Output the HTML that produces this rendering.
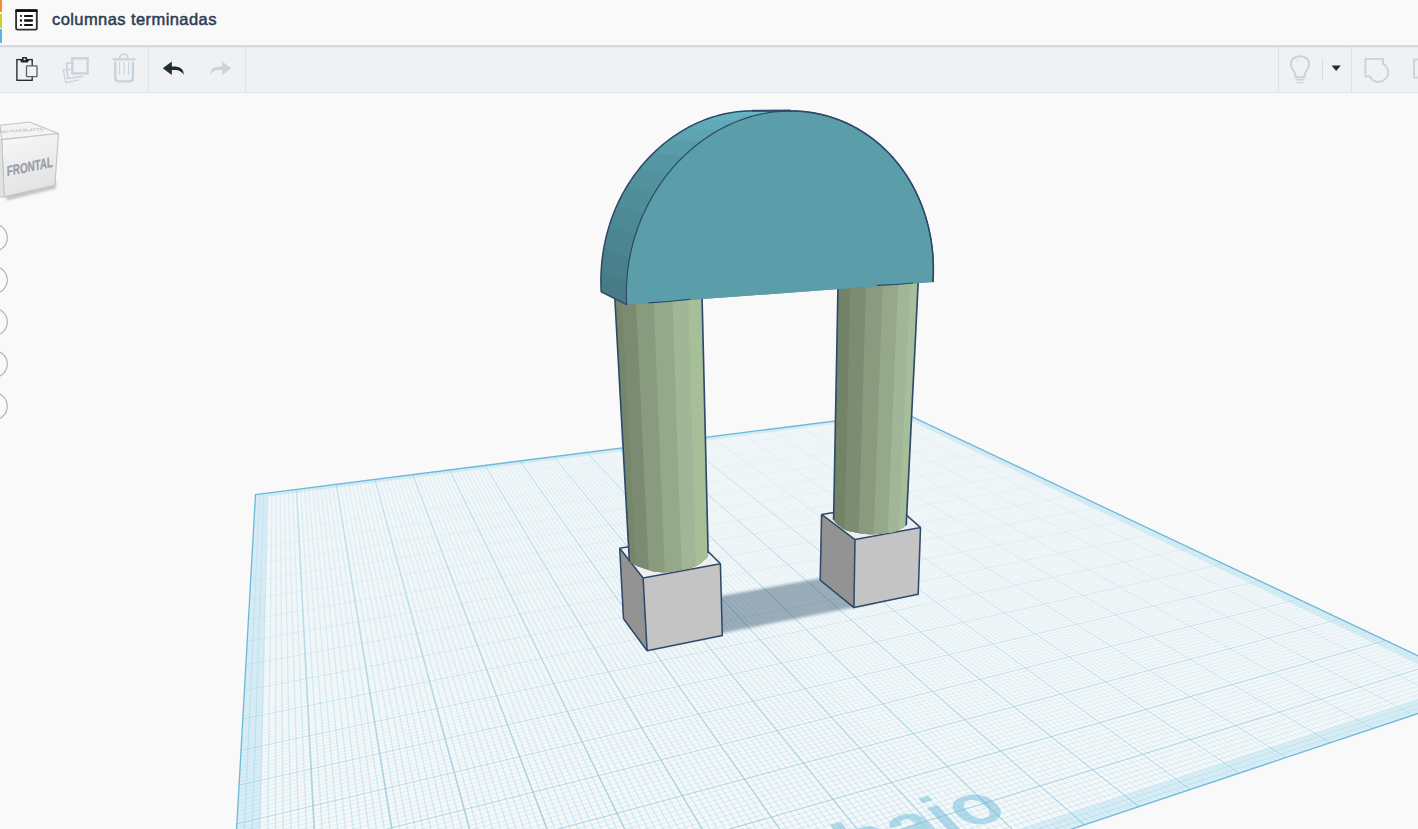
<!DOCTYPE html>
<html><head><meta charset="utf-8">
<style>
html,body{margin:0;padding:0;}
body{width:1418px;height:829px;overflow:hidden;background:#f9f9f9;position:relative;font-family:"Liberation Sans",sans-serif;}
#scene{position:absolute;left:0;top:0;}
#topbar{position:absolute;left:0;top:0;width:1418px;height:45px;background:#f9f9f9;}
#toolbar{position:absolute;left:0;top:45px;width:1418px;height:48px;background:#f0f1f2;}
#toolbar .bt{position:absolute;left:0;top:0;width:100%;height:2px;background:#d5dbdf;}
#toolbar .bt2{position:absolute;left:0;top:2px;width:100%;height:1px;background:#e7eaec;}
#toolbar .bb{position:absolute;left:0;bottom:0;width:100%;height:1px;background:#dde2e5;}
.sep{position:absolute;top:0;width:1px;height:47px;background:#dfe3e9;}
.ico{position:absolute;}
#title{position:absolute;left:52px;top:10px;font-size:16.5px;font-weight:normal;color:#2b3d56;white-space:nowrap;letter-spacing:0.42px;-webkit-text-stroke:0.5px #2b3d56;}
</style></head><body>
<svg id="scene" width="1418" height="829" viewBox="0 0 1418 829">
<polygon points="255.5,494.6 903,412.3 1489.5,689.6 220.5,1113.2" fill="#f5f8f9"/>
<path d="M255.5,494.6 903,412.3 1489.5,689.6 220.5,1113.2Z M253.92,1078.88 1461.77,685.22 899.94,415.44 267.82,496.55Z" fill="#d8edf5" fill-rule="evenodd"/>
<style>.fn stop{stop-color:#94cde1}.mj stop{stop-color:#7fc0d8}</style><defs><linearGradient id="g1" class="fn" gradientUnits="userSpaceOnUse" x1="259.6" y1="494.1" x2="244.1" y2="834.5"><stop offset="0.00" stop-opacity="0.19"/><stop offset="0.34" stop-opacity="0.25"/><stop offset="1.00" stop-opacity="0.36"/></linearGradient><linearGradient id="g2" class="fn" gradientUnits="userSpaceOnUse" x1="255.4" y1="495.8" x2="904.5" y2="413.0"><stop offset="0.00" stop-opacity="0.03"/><stop offset="0.56" stop-opacity="0.03"/><stop offset="1.00" stop-opacity="0.02"/></linearGradient><linearGradient id="g3" class="fn" gradientUnits="userSpaceOnUse" x1="263.8" y1="493.5" x2="251.9" y2="834.7"><stop offset="0.00" stop-opacity="0.19"/><stop offset="0.34" stop-opacity="0.25"/><stop offset="1.00" stop-opacity="0.36"/></linearGradient><linearGradient id="g4" class="fn" gradientUnits="userSpaceOnUse" x1="255.4" y1="497.0" x2="906.0" y2="413.7"><stop offset="0.00" stop-opacity="0.03"/><stop offset="0.56" stop-opacity="0.03"/><stop offset="1.00" stop-opacity="0.02"/></linearGradient><linearGradient id="g5" class="fn" gradientUnits="userSpaceOnUse" x1="267.9" y1="493.0" x2="259.7" y2="834.9"><stop offset="0.00" stop-opacity="0.19"/><stop offset="0.34" stop-opacity="0.25"/><stop offset="1.00" stop-opacity="0.36"/></linearGradient><linearGradient id="g6" class="fn" gradientUnits="userSpaceOnUse" x1="255.3" y1="498.2" x2="907.6" y2="414.5"><stop offset="0.00" stop-opacity="0.04"/><stop offset="0.56" stop-opacity="0.03"/><stop offset="1.00" stop-opacity="0.02"/></linearGradient><linearGradient id="g7" class="fn" gradientUnits="userSpaceOnUse" x1="272.0" y1="492.5" x2="267.6" y2="833.0"><stop offset="0.00" stop-opacity="0.19"/><stop offset="0.34" stop-opacity="0.25"/><stop offset="1.00" stop-opacity="0.36"/></linearGradient><linearGradient id="g8" class="fn" gradientUnits="userSpaceOnUse" x1="255.2" y1="499.4" x2="909.1" y2="415.2"><stop offset="0.00" stop-opacity="0.04"/><stop offset="0.56" stop-opacity="0.03"/><stop offset="1.00" stop-opacity="0.02"/></linearGradient><linearGradient id="g9" class="fn" gradientUnits="userSpaceOnUse" x1="276.1" y1="492.0" x2="275.4" y2="833.2"><stop offset="0.00" stop-opacity="0.19"/><stop offset="0.34" stop-opacity="0.25"/><stop offset="1.00" stop-opacity="0.36"/></linearGradient><linearGradient id="g10" class="fn" gradientUnits="userSpaceOnUse" x1="255.2" y1="500.6" x2="910.7" y2="415.9"><stop offset="0.00" stop-opacity="0.04"/><stop offset="0.56" stop-opacity="0.03"/><stop offset="1.00" stop-opacity="0.02"/></linearGradient><linearGradient id="g11" class="fn" gradientUnits="userSpaceOnUse" x1="280.2" y1="491.5" x2="283.2" y2="833.4"><stop offset="0.00" stop-opacity="0.19"/><stop offset="0.34" stop-opacity="0.25"/><stop offset="1.00" stop-opacity="0.36"/></linearGradient><linearGradient id="g12" class="fn" gradientUnits="userSpaceOnUse" x1="255.1" y1="501.8" x2="912.2" y2="416.7"><stop offset="0.00" stop-opacity="0.04"/><stop offset="0.56" stop-opacity="0.03"/><stop offset="1.00" stop-opacity="0.02"/></linearGradient><linearGradient id="g13" class="fn" gradientUnits="userSpaceOnUse" x1="284.3" y1="490.9" x2="291.0" y2="833.6"><stop offset="0.00" stop-opacity="0.19"/><stop offset="0.34" stop-opacity="0.25"/><stop offset="1.00" stop-opacity="0.36"/></linearGradient><linearGradient id="g14" class="fn" gradientUnits="userSpaceOnUse" x1="255.0" y1="503.0" x2="913.8" y2="417.4"><stop offset="0.00" stop-opacity="0.04"/><stop offset="0.56" stop-opacity="0.03"/><stop offset="1.00" stop-opacity="0.02"/></linearGradient><linearGradient id="g15" class="fn" gradientUnits="userSpaceOnUse" x1="288.4" y1="490.4" x2="298.9" y2="833.8"><stop offset="0.00" stop-opacity="0.19"/><stop offset="0.34" stop-opacity="0.25"/><stop offset="1.00" stop-opacity="0.36"/></linearGradient><linearGradient id="g16" class="fn" gradientUnits="userSpaceOnUse" x1="255.0" y1="504.2" x2="915.4" y2="418.1"><stop offset="0.00" stop-opacity="0.04"/><stop offset="0.56" stop-opacity="0.03"/><stop offset="1.00" stop-opacity="0.03"/></linearGradient><linearGradient id="g17" class="fn" gradientUnits="userSpaceOnUse" x1="292.4" y1="489.9" x2="306.7" y2="834.0"><stop offset="0.00" stop-opacity="0.19"/><stop offset="0.34" stop-opacity="0.25"/><stop offset="1.00" stop-opacity="0.36"/></linearGradient><linearGradient id="g18" class="fn" gradientUnits="userSpaceOnUse" x1="254.9" y1="505.5" x2="916.9" y2="418.9"><stop offset="0.00" stop-opacity="0.04"/><stop offset="0.56" stop-opacity="0.03"/><stop offset="1.00" stop-opacity="0.03"/></linearGradient><linearGradient id="g19" class="fn" gradientUnits="userSpaceOnUse" x1="300.5" y1="488.9" x2="322.4" y2="834.4"><stop offset="0.00" stop-opacity="0.19"/><stop offset="0.34" stop-opacity="0.25"/><stop offset="1.00" stop-opacity="0.36"/></linearGradient><linearGradient id="g20" class="fn" gradientUnits="userSpaceOnUse" x1="254.7" y1="508.0" x2="920.1" y2="420.4"><stop offset="0.00" stop-opacity="0.04"/><stop offset="0.56" stop-opacity="0.03"/><stop offset="1.00" stop-opacity="0.03"/></linearGradient><linearGradient id="g21" class="fn" gradientUnits="userSpaceOnUse" x1="304.5" y1="488.4" x2="330.2" y2="834.6"><stop offset="0.00" stop-opacity="0.19"/><stop offset="0.34" stop-opacity="0.25"/><stop offset="1.00" stop-opacity="0.36"/></linearGradient><linearGradient id="g22" class="fn" gradientUnits="userSpaceOnUse" x1="254.7" y1="509.2" x2="921.7" y2="421.1"><stop offset="0.00" stop-opacity="0.04"/><stop offset="0.56" stop-opacity="0.03"/><stop offset="1.00" stop-opacity="0.03"/></linearGradient><linearGradient id="g23" class="fn" gradientUnits="userSpaceOnUse" x1="308.5" y1="487.9" x2="338.0" y2="834.8"><stop offset="0.00" stop-opacity="0.19"/><stop offset="0.34" stop-opacity="0.25"/><stop offset="1.00" stop-opacity="0.36"/></linearGradient><linearGradient id="g24" class="fn" gradientUnits="userSpaceOnUse" x1="254.6" y1="510.5" x2="923.3" y2="421.9"><stop offset="0.00" stop-opacity="0.04"/><stop offset="0.56" stop-opacity="0.03"/><stop offset="1.00" stop-opacity="0.03"/></linearGradient><linearGradient id="g25" class="fn" gradientUnits="userSpaceOnUse" x1="312.5" y1="487.4" x2="345.7" y2="832.9"><stop offset="0.00" stop-opacity="0.19"/><stop offset="0.34" stop-opacity="0.25"/><stop offset="1.00" stop-opacity="0.36"/></linearGradient><linearGradient id="g26" class="fn" gradientUnits="userSpaceOnUse" x1="254.5" y1="511.8" x2="924.9" y2="422.7"><stop offset="0.00" stop-opacity="0.04"/><stop offset="0.56" stop-opacity="0.03"/><stop offset="1.00" stop-opacity="0.03"/></linearGradient><linearGradient id="g27" class="fn" gradientUnits="userSpaceOnUse" x1="316.5" y1="486.8" x2="353.5" y2="833.1"><stop offset="0.00" stop-opacity="0.19"/><stop offset="0.34" stop-opacity="0.25"/><stop offset="1.00" stop-opacity="0.36"/></linearGradient><linearGradient id="g28" class="fn" gradientUnits="userSpaceOnUse" x1="254.5" y1="513.1" x2="926.6" y2="423.4"><stop offset="0.00" stop-opacity="0.04"/><stop offset="0.56" stop-opacity="0.03"/><stop offset="1.00" stop-opacity="0.03"/></linearGradient><linearGradient id="g29" class="fn" gradientUnits="userSpaceOnUse" x1="320.5" y1="486.3" x2="361.3" y2="833.3"><stop offset="0.00" stop-opacity="0.19"/><stop offset="0.34" stop-opacity="0.25"/><stop offset="1.00" stop-opacity="0.36"/></linearGradient><linearGradient id="g30" class="fn" gradientUnits="userSpaceOnUse" x1="254.4" y1="514.4" x2="928.2" y2="424.2"><stop offset="0.00" stop-opacity="0.04"/><stop offset="0.56" stop-opacity="0.03"/><stop offset="1.00" stop-opacity="0.03"/></linearGradient><linearGradient id="g31" class="fn" gradientUnits="userSpaceOnUse" x1="324.5" y1="485.8" x2="369.2" y2="833.5"><stop offset="0.00" stop-opacity="0.19"/><stop offset="0.34" stop-opacity="0.24"/><stop offset="1.00" stop-opacity="0.36"/></linearGradient><linearGradient id="g32" class="fn" gradientUnits="userSpaceOnUse" x1="254.3" y1="515.7" x2="929.8" y2="425.0"><stop offset="0.00" stop-opacity="0.04"/><stop offset="0.56" stop-opacity="0.03"/><stop offset="1.00" stop-opacity="0.03"/></linearGradient><linearGradient id="g33" class="fn" gradientUnits="userSpaceOnUse" x1="328.4" y1="485.3" x2="377.0" y2="833.7"><stop offset="0.00" stop-opacity="0.19"/><stop offset="0.34" stop-opacity="0.24"/><stop offset="1.00" stop-opacity="0.36"/></linearGradient><linearGradient id="g34" class="fn" gradientUnits="userSpaceOnUse" x1="254.2" y1="517.0" x2="931.5" y2="425.8"><stop offset="0.00" stop-opacity="0.04"/><stop offset="0.57" stop-opacity="0.03"/><stop offset="1.00" stop-opacity="0.03"/></linearGradient><linearGradient id="g35" class="fn" gradientUnits="userSpaceOnUse" x1="332.3" y1="484.8" x2="384.9" y2="833.9"><stop offset="0.00" stop-opacity="0.18"/><stop offset="0.34" stop-opacity="0.24"/><stop offset="1.00" stop-opacity="0.36"/></linearGradient><linearGradient id="g36" class="fn" gradientUnits="userSpaceOnUse" x1="254.2" y1="518.3" x2="933.2" y2="426.6"><stop offset="0.00" stop-opacity="0.04"/><stop offset="0.57" stop-opacity="0.03"/><stop offset="1.00" stop-opacity="0.03"/></linearGradient><linearGradient id="g37" class="fn" gradientUnits="userSpaceOnUse" x1="340.2" y1="483.8" x2="400.6" y2="834.3"><stop offset="0.00" stop-opacity="0.18"/><stop offset="0.34" stop-opacity="0.24"/><stop offset="1.00" stop-opacity="0.36"/></linearGradient><linearGradient id="g38" class="fn" gradientUnits="userSpaceOnUse" x1="254.0" y1="521.0" x2="936.5" y2="428.1"><stop offset="0.00" stop-opacity="0.04"/><stop offset="0.57" stop-opacity="0.03"/><stop offset="1.00" stop-opacity="0.03"/></linearGradient><linearGradient id="g39" class="fn" gradientUnits="userSpaceOnUse" x1="344.1" y1="483.3" x2="408.4" y2="834.5"><stop offset="0.00" stop-opacity="0.18"/><stop offset="0.34" stop-opacity="0.24"/><stop offset="1.00" stop-opacity="0.36"/></linearGradient><linearGradient id="g40" class="fn" gradientUnits="userSpaceOnUse" x1="253.9" y1="522.3" x2="938.2" y2="428.9"><stop offset="0.00" stop-opacity="0.04"/><stop offset="0.57" stop-opacity="0.03"/><stop offset="1.00" stop-opacity="0.03"/></linearGradient><linearGradient id="g41" class="fn" gradientUnits="userSpaceOnUse" x1="348.0" y1="482.8" x2="416.3" y2="834.7"><stop offset="0.00" stop-opacity="0.18"/><stop offset="0.34" stop-opacity="0.24"/><stop offset="1.00" stop-opacity="0.36"/></linearGradient><linearGradient id="g42" class="fn" gradientUnits="userSpaceOnUse" x1="253.9" y1="523.7" x2="939.9" y2="429.7"><stop offset="0.00" stop-opacity="0.04"/><stop offset="0.57" stop-opacity="0.03"/><stop offset="1.00" stop-opacity="0.03"/></linearGradient><linearGradient id="g43" class="fn" gradientUnits="userSpaceOnUse" x1="351.9" y1="482.3" x2="424.1" y2="834.9"><stop offset="0.00" stop-opacity="0.18"/><stop offset="0.34" stop-opacity="0.24"/><stop offset="1.00" stop-opacity="0.36"/></linearGradient><linearGradient id="g44" class="fn" gradientUnits="userSpaceOnUse" x1="253.8" y1="525.0" x2="941.6" y2="430.5"><stop offset="0.00" stop-opacity="0.04"/><stop offset="0.57" stop-opacity="0.03"/><stop offset="1.00" stop-opacity="0.03"/></linearGradient><linearGradient id="g45" class="fn" gradientUnits="userSpaceOnUse" x1="355.8" y1="481.9" x2="431.6" y2="833.0"><stop offset="0.00" stop-opacity="0.18"/><stop offset="0.34" stop-opacity="0.24"/><stop offset="1.00" stop-opacity="0.36"/></linearGradient><linearGradient id="g46" class="fn" gradientUnits="userSpaceOnUse" x1="253.7" y1="526.4" x2="943.3" y2="431.3"><stop offset="0.00" stop-opacity="0.04"/><stop offset="0.57" stop-opacity="0.04"/><stop offset="1.00" stop-opacity="0.03"/></linearGradient><linearGradient id="g47" class="fn" gradientUnits="userSpaceOnUse" x1="359.7" y1="481.4" x2="439.4" y2="833.2"><stop offset="0.00" stop-opacity="0.18"/><stop offset="0.34" stop-opacity="0.24"/><stop offset="1.00" stop-opacity="0.36"/></linearGradient><linearGradient id="g48" class="fn" gradientUnits="userSpaceOnUse" x1="253.6" y1="527.8" x2="945.0" y2="432.2"><stop offset="0.00" stop-opacity="0.04"/><stop offset="0.57" stop-opacity="0.04"/><stop offset="1.00" stop-opacity="0.03"/></linearGradient><linearGradient id="g49" class="fn" gradientUnits="userSpaceOnUse" x1="363.5" y1="480.9" x2="447.3" y2="833.4"><stop offset="0.00" stop-opacity="0.18"/><stop offset="0.34" stop-opacity="0.24"/><stop offset="1.00" stop-opacity="0.36"/></linearGradient><linearGradient id="g50" class="fn" gradientUnits="userSpaceOnUse" x1="253.5" y1="529.2" x2="946.7" y2="433.0"><stop offset="0.00" stop-opacity="0.04"/><stop offset="0.57" stop-opacity="0.04"/><stop offset="1.00" stop-opacity="0.03"/></linearGradient><linearGradient id="g51" class="fn" gradientUnits="userSpaceOnUse" x1="367.4" y1="480.4" x2="455.1" y2="833.6"><stop offset="0.00" stop-opacity="0.18"/><stop offset="0.34" stop-opacity="0.24"/><stop offset="1.00" stop-opacity="0.36"/></linearGradient><linearGradient id="g52" class="fn" gradientUnits="userSpaceOnUse" x1="253.5" y1="530.6" x2="948.5" y2="433.8"><stop offset="0.00" stop-opacity="0.04"/><stop offset="0.57" stop-opacity="0.04"/><stop offset="1.00" stop-opacity="0.03"/></linearGradient><linearGradient id="g53" class="fn" gradientUnits="userSpaceOnUse" x1="371.2" y1="479.9" x2="463.0" y2="833.8"><stop offset="0.00" stop-opacity="0.18"/><stop offset="0.34" stop-opacity="0.24"/><stop offset="1.00" stop-opacity="0.36"/></linearGradient><linearGradient id="g54" class="fn" gradientUnits="userSpaceOnUse" x1="253.4" y1="532.0" x2="950.2" y2="434.6"><stop offset="0.00" stop-opacity="0.05"/><stop offset="0.57" stop-opacity="0.04"/><stop offset="1.00" stop-opacity="0.03"/></linearGradient><linearGradient id="g55" class="fn" gradientUnits="userSpaceOnUse" x1="378.8" y1="478.9" x2="478.7" y2="834.2"><stop offset="0.00" stop-opacity="0.18"/><stop offset="0.34" stop-opacity="0.24"/><stop offset="1.00" stop-opacity="0.36"/></linearGradient><linearGradient id="g56" class="fn" gradientUnits="userSpaceOnUse" x1="253.2" y1="534.9" x2="953.7" y2="436.3"><stop offset="0.00" stop-opacity="0.05"/><stop offset="0.57" stop-opacity="0.04"/><stop offset="1.00" stop-opacity="0.03"/></linearGradient><linearGradient id="g57" class="fn" gradientUnits="userSpaceOnUse" x1="382.7" y1="478.4" x2="486.6" y2="834.4"><stop offset="0.00" stop-opacity="0.18"/><stop offset="0.34" stop-opacity="0.24"/><stop offset="1.00" stop-opacity="0.36"/></linearGradient><linearGradient id="g58" class="fn" gradientUnits="userSpaceOnUse" x1="253.1" y1="536.3" x2="955.5" y2="437.1"><stop offset="0.00" stop-opacity="0.05"/><stop offset="0.57" stop-opacity="0.04"/><stop offset="1.00" stop-opacity="0.03"/></linearGradient><linearGradient id="g59" class="fn" gradientUnits="userSpaceOnUse" x1="386.5" y1="478.0" x2="494.5" y2="834.6"><stop offset="0.00" stop-opacity="0.18"/><stop offset="0.33" stop-opacity="0.24"/><stop offset="1.00" stop-opacity="0.36"/></linearGradient><linearGradient id="g60" class="fn" gradientUnits="userSpaceOnUse" x1="253.1" y1="537.8" x2="957.3" y2="438.0"><stop offset="0.00" stop-opacity="0.05"/><stop offset="0.57" stop-opacity="0.04"/><stop offset="1.00" stop-opacity="0.03"/></linearGradient><linearGradient id="g61" class="fn" gradientUnits="userSpaceOnUse" x1="390.2" y1="477.5" x2="502.4" y2="834.8"><stop offset="0.00" stop-opacity="0.18"/><stop offset="0.33" stop-opacity="0.24"/><stop offset="1.00" stop-opacity="0.36"/></linearGradient><linearGradient id="g62" class="fn" gradientUnits="userSpaceOnUse" x1="253.0" y1="539.2" x2="959.1" y2="438.8"><stop offset="0.00" stop-opacity="0.05"/><stop offset="0.57" stop-opacity="0.04"/><stop offset="1.00" stop-opacity="0.03"/></linearGradient><linearGradient id="g63" class="fn" gradientUnits="userSpaceOnUse" x1="394.0" y1="477.0" x2="509.6" y2="832.9"><stop offset="0.00" stop-opacity="0.18"/><stop offset="0.33" stop-opacity="0.24"/><stop offset="1.00" stop-opacity="0.36"/></linearGradient><linearGradient id="g64" class="fn" gradientUnits="userSpaceOnUse" x1="252.9" y1="540.7" x2="960.9" y2="439.7"><stop offset="0.00" stop-opacity="0.05"/><stop offset="0.57" stop-opacity="0.04"/><stop offset="1.00" stop-opacity="0.03"/></linearGradient><linearGradient id="g65" class="fn" gradientUnits="userSpaceOnUse" x1="397.8" y1="476.5" x2="517.4" y2="833.1"><stop offset="0.00" stop-opacity="0.18"/><stop offset="0.33" stop-opacity="0.24"/><stop offset="1.00" stop-opacity="0.36"/></linearGradient><linearGradient id="g66" class="fn" gradientUnits="userSpaceOnUse" x1="252.8" y1="542.2" x2="962.7" y2="440.5"><stop offset="0.00" stop-opacity="0.05"/><stop offset="0.57" stop-opacity="0.04"/><stop offset="1.00" stop-opacity="0.03"/></linearGradient><linearGradient id="g67" class="fn" gradientUnits="userSpaceOnUse" x1="401.5" y1="476.0" x2="525.3" y2="833.3"><stop offset="0.00" stop-opacity="0.18"/><stop offset="0.33" stop-opacity="0.24"/><stop offset="1.00" stop-opacity="0.36"/></linearGradient><linearGradient id="g68" class="fn" gradientUnits="userSpaceOnUse" x1="252.7" y1="543.7" x2="964.5" y2="441.4"><stop offset="0.00" stop-opacity="0.05"/><stop offset="0.57" stop-opacity="0.04"/><stop offset="1.00" stop-opacity="0.03"/></linearGradient><linearGradient id="g69" class="fn" gradientUnits="userSpaceOnUse" x1="405.3" y1="475.6" x2="533.2" y2="833.5"><stop offset="0.00" stop-opacity="0.18"/><stop offset="0.33" stop-opacity="0.24"/><stop offset="1.00" stop-opacity="0.36"/></linearGradient><linearGradient id="g70" class="fn" gradientUnits="userSpaceOnUse" x1="252.6" y1="545.2" x2="966.4" y2="442.3"><stop offset="0.00" stop-opacity="0.05"/><stop offset="0.57" stop-opacity="0.04"/><stop offset="1.00" stop-opacity="0.03"/></linearGradient><linearGradient id="g71" class="fn" gradientUnits="userSpaceOnUse" x1="409.0" y1="475.1" x2="541.0" y2="833.7"><stop offset="0.00" stop-opacity="0.18"/><stop offset="0.33" stop-opacity="0.24"/><stop offset="1.00" stop-opacity="0.36"/></linearGradient><linearGradient id="g72" class="fn" gradientUnits="userSpaceOnUse" x1="252.6" y1="546.7" x2="968.2" y2="443.1"><stop offset="0.00" stop-opacity="0.05"/><stop offset="0.57" stop-opacity="0.04"/><stop offset="1.00" stop-opacity="0.03"/></linearGradient><linearGradient id="g73" class="fn" gradientUnits="userSpaceOnUse" x1="416.5" y1="474.1" x2="556.8" y2="834.1"><stop offset="0.00" stop-opacity="0.18"/><stop offset="0.33" stop-opacity="0.24"/><stop offset="1.00" stop-opacity="0.36"/></linearGradient><linearGradient id="g74" class="fn" gradientUnits="userSpaceOnUse" x1="252.4" y1="549.7" x2="971.9" y2="444.9"><stop offset="0.00" stop-opacity="0.05"/><stop offset="0.57" stop-opacity="0.04"/><stop offset="1.00" stop-opacity="0.03"/></linearGradient><linearGradient id="g75" class="fn" gradientUnits="userSpaceOnUse" x1="420.2" y1="473.7" x2="564.7" y2="834.3"><stop offset="0.00" stop-opacity="0.18"/><stop offset="0.33" stop-opacity="0.24"/><stop offset="1.00" stop-opacity="0.36"/></linearGradient><linearGradient id="g76" class="fn" gradientUnits="userSpaceOnUse" x1="252.3" y1="551.3" x2="973.8" y2="445.8"><stop offset="0.00" stop-opacity="0.05"/><stop offset="0.57" stop-opacity="0.04"/><stop offset="1.00" stop-opacity="0.03"/></linearGradient><linearGradient id="g77" class="fn" gradientUnits="userSpaceOnUse" x1="423.9" y1="473.2" x2="572.6" y2="834.5"><stop offset="0.00" stop-opacity="0.18"/><stop offset="0.33" stop-opacity="0.24"/><stop offset="1.00" stop-opacity="0.36"/></linearGradient><linearGradient id="g78" class="fn" gradientUnits="userSpaceOnUse" x1="252.2" y1="552.8" x2="975.7" y2="446.7"><stop offset="0.00" stop-opacity="0.05"/><stop offset="0.57" stop-opacity="0.04"/><stop offset="1.00" stop-opacity="0.03"/></linearGradient><linearGradient id="g79" class="fn" gradientUnits="userSpaceOnUse" x1="427.5" y1="472.7" x2="580.5" y2="834.7"><stop offset="0.00" stop-opacity="0.18"/><stop offset="0.33" stop-opacity="0.24"/><stop offset="1.00" stop-opacity="0.36"/></linearGradient><linearGradient id="g80" class="fn" gradientUnits="userSpaceOnUse" x1="252.1" y1="554.4" x2="977.6" y2="447.5"><stop offset="0.00" stop-opacity="0.05"/><stop offset="0.57" stop-opacity="0.04"/><stop offset="1.00" stop-opacity="0.03"/></linearGradient><linearGradient id="g81" class="fn" gradientUnits="userSpaceOnUse" x1="431.2" y1="472.3" x2="588.4" y2="834.9"><stop offset="0.00" stop-opacity="0.18"/><stop offset="0.33" stop-opacity="0.24"/><stop offset="1.00" stop-opacity="0.36"/></linearGradient><linearGradient id="g82" class="fn" gradientUnits="userSpaceOnUse" x1="252.0" y1="556.0" x2="979.5" y2="448.4"><stop offset="0.00" stop-opacity="0.05"/><stop offset="0.57" stop-opacity="0.04"/><stop offset="1.00" stop-opacity="0.03"/></linearGradient><linearGradient id="g83" class="fn" gradientUnits="userSpaceOnUse" x1="434.9" y1="471.8" x2="595.4" y2="833.0"><stop offset="0.00" stop-opacity="0.18"/><stop offset="0.33" stop-opacity="0.24"/><stop offset="1.00" stop-opacity="0.36"/></linearGradient><linearGradient id="g84" class="fn" gradientUnits="userSpaceOnUse" x1="251.9" y1="557.6" x2="981.4" y2="449.4"><stop offset="0.00" stop-opacity="0.05"/><stop offset="0.57" stop-opacity="0.04"/><stop offset="1.00" stop-opacity="0.04"/></linearGradient><linearGradient id="g85" class="fn" gradientUnits="userSpaceOnUse" x1="438.5" y1="471.3" x2="603.3" y2="833.2"><stop offset="0.00" stop-opacity="0.18"/><stop offset="0.33" stop-opacity="0.24"/><stop offset="1.00" stop-opacity="0.36"/></linearGradient><linearGradient id="g86" class="fn" gradientUnits="userSpaceOnUse" x1="251.8" y1="559.2" x2="983.3" y2="450.3"><stop offset="0.00" stop-opacity="0.05"/><stop offset="0.57" stop-opacity="0.04"/><stop offset="1.00" stop-opacity="0.04"/></linearGradient><linearGradient id="g87" class="fn" gradientUnits="userSpaceOnUse" x1="442.2" y1="470.9" x2="611.2" y2="833.4"><stop offset="0.00" stop-opacity="0.18"/><stop offset="0.33" stop-opacity="0.24"/><stop offset="1.00" stop-opacity="0.36"/></linearGradient><linearGradient id="g88" class="fn" gradientUnits="userSpaceOnUse" x1="251.8" y1="560.8" x2="985.2" y2="451.2"><stop offset="0.00" stop-opacity="0.06"/><stop offset="0.57" stop-opacity="0.04"/><stop offset="1.00" stop-opacity="0.04"/></linearGradient><linearGradient id="g89" class="fn" gradientUnits="userSpaceOnUse" x1="445.8" y1="470.4" x2="619.1" y2="833.6"><stop offset="0.00" stop-opacity="0.18"/><stop offset="0.33" stop-opacity="0.24"/><stop offset="1.00" stop-opacity="0.36"/></linearGradient><linearGradient id="g90" class="fn" gradientUnits="userSpaceOnUse" x1="251.7" y1="562.4" x2="987.2" y2="452.1"><stop offset="0.00" stop-opacity="0.06"/><stop offset="0.57" stop-opacity="0.04"/><stop offset="1.00" stop-opacity="0.04"/></linearGradient><linearGradient id="g91" class="fn" gradientUnits="userSpaceOnUse" x1="453.1" y1="469.5" x2="634.9" y2="834.0"><stop offset="0.00" stop-opacity="0.18"/><stop offset="0.33" stop-opacity="0.24"/><stop offset="1.00" stop-opacity="0.36"/></linearGradient><linearGradient id="g92" class="fn" gradientUnits="userSpaceOnUse" x1="251.5" y1="565.7" x2="991.1" y2="453.9"><stop offset="0.00" stop-opacity="0.06"/><stop offset="0.57" stop-opacity="0.05"/><stop offset="1.00" stop-opacity="0.04"/></linearGradient><linearGradient id="g93" class="fn" gradientUnits="userSpaceOnUse" x1="456.7" y1="469.0" x2="642.8" y2="834.2"><stop offset="0.00" stop-opacity="0.18"/><stop offset="0.33" stop-opacity="0.24"/><stop offset="1.00" stop-opacity="0.36"/></linearGradient><linearGradient id="g94" class="fn" gradientUnits="userSpaceOnUse" x1="251.4" y1="567.4" x2="993.1" y2="454.9"><stop offset="0.00" stop-opacity="0.06"/><stop offset="0.57" stop-opacity="0.05"/><stop offset="1.00" stop-opacity="0.04"/></linearGradient><linearGradient id="g95" class="fn" gradientUnits="userSpaceOnUse" x1="460.3" y1="468.6" x2="650.7" y2="834.4"><stop offset="0.00" stop-opacity="0.18"/><stop offset="0.33" stop-opacity="0.24"/><stop offset="1.00" stop-opacity="0.36"/></linearGradient><linearGradient id="g96" class="fn" gradientUnits="userSpaceOnUse" x1="251.3" y1="569.1" x2="995.0" y2="455.8"><stop offset="0.00" stop-opacity="0.06"/><stop offset="0.57" stop-opacity="0.05"/><stop offset="1.00" stop-opacity="0.04"/></linearGradient><linearGradient id="g97" class="fn" gradientUnits="userSpaceOnUse" x1="463.9" y1="468.1" x2="658.6" y2="834.6"><stop offset="0.00" stop-opacity="0.18"/><stop offset="0.33" stop-opacity="0.24"/><stop offset="1.00" stop-opacity="0.36"/></linearGradient><linearGradient id="g98" class="fn" gradientUnits="userSpaceOnUse" x1="251.2" y1="570.7" x2="997.0" y2="456.8"><stop offset="0.00" stop-opacity="0.06"/><stop offset="0.57" stop-opacity="0.05"/><stop offset="1.00" stop-opacity="0.04"/></linearGradient><linearGradient id="g99" class="fn" gradientUnits="userSpaceOnUse" x1="467.4" y1="467.7" x2="666.5" y2="834.8"><stop offset="0.00" stop-opacity="0.18"/><stop offset="0.33" stop-opacity="0.24"/><stop offset="1.00" stop-opacity="0.36"/></linearGradient><linearGradient id="g100" class="fn" gradientUnits="userSpaceOnUse" x1="251.1" y1="572.4" x2="999.1" y2="457.7"><stop offset="0.00" stop-opacity="0.06"/><stop offset="0.57" stop-opacity="0.05"/><stop offset="1.00" stop-opacity="0.04"/></linearGradient><linearGradient id="g101" class="fn" gradientUnits="userSpaceOnUse" x1="471.0" y1="467.2" x2="674.5" y2="835.0"><stop offset="0.00" stop-opacity="0.18"/><stop offset="0.33" stop-opacity="0.24"/><stop offset="1.00" stop-opacity="0.36"/></linearGradient><linearGradient id="g102" class="fn" gradientUnits="userSpaceOnUse" x1="251.0" y1="574.2" x2="1001.1" y2="458.7"><stop offset="0.00" stop-opacity="0.06"/><stop offset="0.57" stop-opacity="0.05"/><stop offset="1.00" stop-opacity="0.04"/></linearGradient><linearGradient id="g103" class="fn" gradientUnits="userSpaceOnUse" x1="474.6" y1="466.8" x2="681.2" y2="833.1"><stop offset="0.00" stop-opacity="0.18"/><stop offset="0.33" stop-opacity="0.24"/><stop offset="1.00" stop-opacity="0.36"/></linearGradient><linearGradient id="g104" class="fn" gradientUnits="userSpaceOnUse" x1="250.9" y1="575.9" x2="1003.1" y2="459.6"><stop offset="0.00" stop-opacity="0.06"/><stop offset="0.57" stop-opacity="0.05"/><stop offset="1.00" stop-opacity="0.04"/></linearGradient><linearGradient id="g105" class="fn" gradientUnits="userSpaceOnUse" x1="478.1" y1="466.3" x2="689.1" y2="833.3"><stop offset="0.00" stop-opacity="0.18"/><stop offset="0.33" stop-opacity="0.24"/><stop offset="1.00" stop-opacity="0.36"/></linearGradient><linearGradient id="g106" class="fn" gradientUnits="userSpaceOnUse" x1="250.8" y1="577.6" x2="1005.1" y2="460.6"><stop offset="0.00" stop-opacity="0.06"/><stop offset="0.57" stop-opacity="0.05"/><stop offset="1.00" stop-opacity="0.04"/></linearGradient><linearGradient id="g107" class="fn" gradientUnits="userSpaceOnUse" x1="481.7" y1="465.9" x2="697.0" y2="833.5"><stop offset="0.00" stop-opacity="0.18"/><stop offset="0.33" stop-opacity="0.24"/><stop offset="1.00" stop-opacity="0.36"/></linearGradient><linearGradient id="g108" class="fn" gradientUnits="userSpaceOnUse" x1="250.7" y1="579.4" x2="1007.2" y2="461.6"><stop offset="0.00" stop-opacity="0.06"/><stop offset="0.57" stop-opacity="0.05"/><stop offset="1.00" stop-opacity="0.04"/></linearGradient><linearGradient id="g109" class="fn" gradientUnits="userSpaceOnUse" x1="488.7" y1="465.0" x2="712.9" y2="833.9"><stop offset="0.00" stop-opacity="0.17"/><stop offset="0.33" stop-opacity="0.24"/><stop offset="1.00" stop-opacity="0.36"/></linearGradient><linearGradient id="g110" class="fn" gradientUnits="userSpaceOnUse" x1="250.5" y1="582.9" x2="1011.3" y2="463.5"><stop offset="0.00" stop-opacity="0.06"/><stop offset="0.57" stop-opacity="0.05"/><stop offset="1.00" stop-opacity="0.04"/></linearGradient><linearGradient id="g111" class="fn" gradientUnits="userSpaceOnUse" x1="492.2" y1="464.5" x2="720.8" y2="834.1"><stop offset="0.00" stop-opacity="0.17"/><stop offset="0.33" stop-opacity="0.24"/><stop offset="1.00" stop-opacity="0.36"/></linearGradient><linearGradient id="g112" class="fn" gradientUnits="userSpaceOnUse" x1="250.4" y1="584.7" x2="1013.4" y2="464.5"><stop offset="0.00" stop-opacity="0.06"/><stop offset="0.57" stop-opacity="0.05"/><stop offset="1.00" stop-opacity="0.04"/></linearGradient><linearGradient id="g113" class="fn" gradientUnits="userSpaceOnUse" x1="495.8" y1="464.1" x2="728.7" y2="834.3"><stop offset="0.00" stop-opacity="0.17"/><stop offset="0.33" stop-opacity="0.23"/><stop offset="1.00" stop-opacity="0.36"/></linearGradient><linearGradient id="g114" class="fn" gradientUnits="userSpaceOnUse" x1="250.3" y1="586.5" x2="1015.5" y2="465.5"><stop offset="0.00" stop-opacity="0.07"/><stop offset="0.57" stop-opacity="0.05"/><stop offset="1.00" stop-opacity="0.04"/></linearGradient><linearGradient id="g115" class="fn" gradientUnits="userSpaceOnUse" x1="499.3" y1="463.6" x2="736.6" y2="834.5"><stop offset="0.00" stop-opacity="0.17"/><stop offset="0.33" stop-opacity="0.23"/><stop offset="1.00" stop-opacity="0.36"/></linearGradient><linearGradient id="g116" class="fn" gradientUnits="userSpaceOnUse" x1="250.2" y1="588.3" x2="1017.6" y2="466.5"><stop offset="0.00" stop-opacity="0.07"/><stop offset="0.58" stop-opacity="0.05"/><stop offset="1.00" stop-opacity="0.04"/></linearGradient><linearGradient id="g117" class="fn" gradientUnits="userSpaceOnUse" x1="502.7" y1="463.2" x2="744.6" y2="834.7"><stop offset="0.00" stop-opacity="0.17"/><stop offset="0.33" stop-opacity="0.23"/><stop offset="1.00" stop-opacity="0.36"/></linearGradient><linearGradient id="g118" class="fn" gradientUnits="userSpaceOnUse" x1="250.1" y1="590.2" x2="1019.8" y2="467.5"><stop offset="0.00" stop-opacity="0.07"/><stop offset="0.58" stop-opacity="0.05"/><stop offset="1.00" stop-opacity="0.04"/></linearGradient><linearGradient id="g119" class="fn" gradientUnits="userSpaceOnUse" x1="506.2" y1="462.7" x2="752.5" y2="834.9"><stop offset="0.00" stop-opacity="0.17"/><stop offset="0.33" stop-opacity="0.23"/><stop offset="1.00" stop-opacity="0.36"/></linearGradient><linearGradient id="g120" class="fn" gradientUnits="userSpaceOnUse" x1="250.0" y1="592.0" x2="1021.9" y2="468.5"><stop offset="0.00" stop-opacity="0.07"/><stop offset="0.58" stop-opacity="0.05"/><stop offset="1.00" stop-opacity="0.04"/></linearGradient><linearGradient id="g121" class="fn" gradientUnits="userSpaceOnUse" x1="509.7" y1="462.3" x2="759.1" y2="833.0"><stop offset="0.00" stop-opacity="0.17"/><stop offset="0.33" stop-opacity="0.23"/><stop offset="1.00" stop-opacity="0.36"/></linearGradient><linearGradient id="g122" class="fn" gradientUnits="userSpaceOnUse" x1="249.9" y1="593.9" x2="1024.1" y2="469.5"><stop offset="0.00" stop-opacity="0.07"/><stop offset="0.58" stop-opacity="0.05"/><stop offset="1.00" stop-opacity="0.04"/></linearGradient><linearGradient id="g123" class="fn" gradientUnits="userSpaceOnUse" x1="513.1" y1="461.9" x2="767.0" y2="833.2"><stop offset="0.00" stop-opacity="0.17"/><stop offset="0.33" stop-opacity="0.23"/><stop offset="1.00" stop-opacity="0.36"/></linearGradient><linearGradient id="g124" class="fn" gradientUnits="userSpaceOnUse" x1="249.8" y1="595.8" x2="1026.2" y2="470.6"><stop offset="0.00" stop-opacity="0.07"/><stop offset="0.58" stop-opacity="0.05"/><stop offset="1.00" stop-opacity="0.04"/></linearGradient><linearGradient id="g125" class="fn" gradientUnits="userSpaceOnUse" x1="516.6" y1="461.4" x2="774.9" y2="833.4"><stop offset="0.00" stop-opacity="0.17"/><stop offset="0.32" stop-opacity="0.23"/><stop offset="1.00" stop-opacity="0.36"/></linearGradient><linearGradient id="g126" class="fn" gradientUnits="userSpaceOnUse" x1="249.7" y1="597.7" x2="1028.4" y2="471.6"><stop offset="0.00" stop-opacity="0.07"/><stop offset="0.58" stop-opacity="0.05"/><stop offset="1.00" stop-opacity="0.04"/></linearGradient><linearGradient id="g127" class="fn" gradientUnits="userSpaceOnUse" x1="523.5" y1="460.5" x2="790.8" y2="833.8"><stop offset="0.00" stop-opacity="0.17"/><stop offset="0.32" stop-opacity="0.23"/><stop offset="1.00" stop-opacity="0.36"/></linearGradient><linearGradient id="g128" class="fn" gradientUnits="userSpaceOnUse" x1="249.5" y1="601.5" x2="1032.8" y2="473.7"><stop offset="0.00" stop-opacity="0.07"/><stop offset="0.58" stop-opacity="0.06"/><stop offset="1.00" stop-opacity="0.04"/></linearGradient><linearGradient id="g129" class="fn" gradientUnits="userSpaceOnUse" x1="526.9" y1="460.1" x2="798.7" y2="834.0"><stop offset="0.00" stop-opacity="0.17"/><stop offset="0.32" stop-opacity="0.23"/><stop offset="1.00" stop-opacity="0.36"/></linearGradient><linearGradient id="g130" class="fn" gradientUnits="userSpaceOnUse" x1="249.3" y1="603.4" x2="1035.0" y2="474.7"><stop offset="0.00" stop-opacity="0.07"/><stop offset="0.58" stop-opacity="0.06"/><stop offset="1.00" stop-opacity="0.05"/></linearGradient><linearGradient id="g131" class="fn" gradientUnits="userSpaceOnUse" x1="530.3" y1="459.7" x2="806.7" y2="834.2"><stop offset="0.00" stop-opacity="0.17"/><stop offset="0.32" stop-opacity="0.23"/><stop offset="1.00" stop-opacity="0.36"/></linearGradient><linearGradient id="g132" class="fn" gradientUnits="userSpaceOnUse" x1="249.2" y1="605.4" x2="1037.2" y2="475.8"><stop offset="0.00" stop-opacity="0.07"/><stop offset="0.58" stop-opacity="0.06"/><stop offset="1.00" stop-opacity="0.05"/></linearGradient><linearGradient id="g133" class="fn" gradientUnits="userSpaceOnUse" x1="533.7" y1="459.2" x2="814.6" y2="834.4"><stop offset="0.00" stop-opacity="0.17"/><stop offset="0.32" stop-opacity="0.23"/><stop offset="1.00" stop-opacity="0.36"/></linearGradient><linearGradient id="g134" class="fn" gradientUnits="userSpaceOnUse" x1="249.1" y1="607.3" x2="1039.5" y2="476.8"><stop offset="0.00" stop-opacity="0.07"/><stop offset="0.58" stop-opacity="0.06"/><stop offset="1.00" stop-opacity="0.05"/></linearGradient><linearGradient id="g135" class="fn" gradientUnits="userSpaceOnUse" x1="537.1" y1="458.8" x2="822.6" y2="834.6"><stop offset="0.00" stop-opacity="0.17"/><stop offset="0.32" stop-opacity="0.23"/><stop offset="1.00" stop-opacity="0.36"/></linearGradient><linearGradient id="g136" class="fn" gradientUnits="userSpaceOnUse" x1="249.0" y1="609.3" x2="1041.7" y2="477.9"><stop offset="0.00" stop-opacity="0.07"/><stop offset="0.58" stop-opacity="0.06"/><stop offset="1.00" stop-opacity="0.05"/></linearGradient><linearGradient id="g137" class="fn" gradientUnits="userSpaceOnUse" x1="540.5" y1="458.4" x2="830.6" y2="834.8"><stop offset="0.00" stop-opacity="0.17"/><stop offset="0.32" stop-opacity="0.23"/><stop offset="1.00" stop-opacity="0.36"/></linearGradient><linearGradient id="g138" class="fn" gradientUnits="userSpaceOnUse" x1="248.9" y1="611.3" x2="1044.0" y2="479.0"><stop offset="0.00" stop-opacity="0.08"/><stop offset="0.58" stop-opacity="0.06"/><stop offset="1.00" stop-opacity="0.05"/></linearGradient><linearGradient id="g139" class="fn" gradientUnits="userSpaceOnUse" x1="543.9" y1="457.9" x2="838.5" y2="835.0"><stop offset="0.00" stop-opacity="0.17"/><stop offset="0.32" stop-opacity="0.23"/><stop offset="1.00" stop-opacity="0.36"/></linearGradient><linearGradient id="g140" class="fn" gradientUnits="userSpaceOnUse" x1="248.8" y1="613.3" x2="1046.3" y2="480.0"><stop offset="0.00" stop-opacity="0.08"/><stop offset="0.58" stop-opacity="0.06"/><stop offset="1.00" stop-opacity="0.05"/></linearGradient><linearGradient id="g141" class="fn" gradientUnits="userSpaceOnUse" x1="547.3" y1="457.5" x2="844.8" y2="833.0"><stop offset="0.00" stop-opacity="0.17"/><stop offset="0.32" stop-opacity="0.23"/><stop offset="1.00" stop-opacity="0.36"/></linearGradient><linearGradient id="g142" class="fn" gradientUnits="userSpaceOnUse" x1="248.7" y1="615.4" x2="1048.6" y2="481.1"><stop offset="0.00" stop-opacity="0.08"/><stop offset="0.58" stop-opacity="0.06"/><stop offset="1.00" stop-opacity="0.05"/></linearGradient><linearGradient id="g143" class="fn" gradientUnits="userSpaceOnUse" x1="550.6" y1="457.1" x2="852.8" y2="833.2"><stop offset="0.00" stop-opacity="0.17"/><stop offset="0.32" stop-opacity="0.23"/><stop offset="1.00" stop-opacity="0.36"/></linearGradient><linearGradient id="g144" class="fn" gradientUnits="userSpaceOnUse" x1="248.6" y1="617.4" x2="1050.9" y2="482.2"><stop offset="0.00" stop-opacity="0.08"/><stop offset="0.58" stop-opacity="0.06"/><stop offset="1.00" stop-opacity="0.05"/></linearGradient><linearGradient id="g145" class="fn" gradientUnits="userSpaceOnUse" x1="557.3" y1="456.2" x2="868.7" y2="833.6"><stop offset="0.00" stop-opacity="0.17"/><stop offset="0.32" stop-opacity="0.23"/><stop offset="1.00" stop-opacity="0.36"/></linearGradient><linearGradient id="g146" class="fn" gradientUnits="userSpaceOnUse" x1="248.3" y1="621.6" x2="1055.5" y2="484.4"><stop offset="0.00" stop-opacity="0.08"/><stop offset="0.58" stop-opacity="0.06"/><stop offset="1.00" stop-opacity="0.05"/></linearGradient><linearGradient id="g147" class="fn" gradientUnits="userSpaceOnUse" x1="560.7" y1="455.8" x2="876.6" y2="833.8"><stop offset="0.00" stop-opacity="0.17"/><stop offset="0.32" stop-opacity="0.23"/><stop offset="1.00" stop-opacity="0.36"/></linearGradient><linearGradient id="g148" class="fn" gradientUnits="userSpaceOnUse" x1="248.2" y1="623.7" x2="1057.9" y2="485.5"><stop offset="0.00" stop-opacity="0.08"/><stop offset="0.58" stop-opacity="0.06"/><stop offset="1.00" stop-opacity="0.05"/></linearGradient><linearGradient id="g149" class="fn" gradientUnits="userSpaceOnUse" x1="564.0" y1="455.4" x2="884.6" y2="834.0"><stop offset="0.00" stop-opacity="0.17"/><stop offset="0.32" stop-opacity="0.23"/><stop offset="1.00" stop-opacity="0.36"/></linearGradient><linearGradient id="g150" class="fn" gradientUnits="userSpaceOnUse" x1="248.1" y1="625.8" x2="1060.2" y2="486.6"><stop offset="0.00" stop-opacity="0.08"/><stop offset="0.58" stop-opacity="0.06"/><stop offset="1.00" stop-opacity="0.05"/></linearGradient><linearGradient id="g151" class="fn" gradientUnits="userSpaceOnUse" x1="567.3" y1="455.0" x2="892.6" y2="834.2"><stop offset="0.00" stop-opacity="0.17"/><stop offset="0.32" stop-opacity="0.23"/><stop offset="1.00" stop-opacity="0.36"/></linearGradient><linearGradient id="g152" class="fn" gradientUnits="userSpaceOnUse" x1="248.0" y1="627.9" x2="1062.6" y2="487.8"><stop offset="0.00" stop-opacity="0.08"/><stop offset="0.58" stop-opacity="0.06"/><stop offset="1.00" stop-opacity="0.05"/></linearGradient><linearGradient id="g153" class="fn" gradientUnits="userSpaceOnUse" x1="570.6" y1="454.5" x2="900.5" y2="834.4"><stop offset="0.00" stop-opacity="0.17"/><stop offset="0.32" stop-opacity="0.23"/><stop offset="1.00" stop-opacity="0.36"/></linearGradient><linearGradient id="g154" class="fn" gradientUnits="userSpaceOnUse" x1="247.8" y1="630.1" x2="1065.0" y2="488.9"><stop offset="0.00" stop-opacity="0.08"/><stop offset="0.58" stop-opacity="0.06"/><stop offset="1.00" stop-opacity="0.05"/></linearGradient><linearGradient id="g155" class="fn" gradientUnits="userSpaceOnUse" x1="574.0" y1="454.1" x2="908.5" y2="834.6"><stop offset="0.00" stop-opacity="0.17"/><stop offset="0.32" stop-opacity="0.23"/><stop offset="1.00" stop-opacity="0.36"/></linearGradient><linearGradient id="g156" class="fn" gradientUnits="userSpaceOnUse" x1="247.7" y1="632.3" x2="1067.4" y2="490.0"><stop offset="0.00" stop-opacity="0.09"/><stop offset="0.58" stop-opacity="0.07"/><stop offset="1.00" stop-opacity="0.05"/></linearGradient><linearGradient id="g157" class="fn" gradientUnits="userSpaceOnUse" x1="577.3" y1="453.7" x2="916.5" y2="834.8"><stop offset="0.00" stop-opacity="0.17"/><stop offset="0.32" stop-opacity="0.23"/><stop offset="1.00" stop-opacity="0.36"/></linearGradient><linearGradient id="g158" class="fn" gradientUnits="userSpaceOnUse" x1="247.6" y1="634.5" x2="1069.8" y2="491.2"><stop offset="0.00" stop-opacity="0.09"/><stop offset="0.58" stop-opacity="0.07"/><stop offset="1.00" stop-opacity="0.05"/></linearGradient><linearGradient id="g159" class="fn" gradientUnits="userSpaceOnUse" x1="580.5" y1="453.3" x2="922.6" y2="832.9"><stop offset="0.00" stop-opacity="0.17"/><stop offset="0.32" stop-opacity="0.23"/><stop offset="1.00" stop-opacity="0.36"/></linearGradient><linearGradient id="g160" class="fn" gradientUnits="userSpaceOnUse" x1="247.5" y1="636.7" x2="1072.3" y2="492.3"><stop offset="0.00" stop-opacity="0.09"/><stop offset="0.58" stop-opacity="0.07"/><stop offset="1.00" stop-opacity="0.05"/></linearGradient><linearGradient id="g161" class="fn" gradientUnits="userSpaceOnUse" x1="583.8" y1="452.9" x2="930.6" y2="833.1"><stop offset="0.00" stop-opacity="0.17"/><stop offset="0.32" stop-opacity="0.23"/><stop offset="1.00" stop-opacity="0.36"/></linearGradient><linearGradient id="g162" class="fn" gradientUnits="userSpaceOnUse" x1="247.3" y1="638.9" x2="1074.7" y2="493.5"><stop offset="0.00" stop-opacity="0.09"/><stop offset="0.58" stop-opacity="0.07"/><stop offset="1.00" stop-opacity="0.05"/></linearGradient><linearGradient id="g163" class="fn" gradientUnits="userSpaceOnUse" x1="590.4" y1="452.0" x2="946.5" y2="833.5"><stop offset="0.00" stop-opacity="0.17"/><stop offset="0.32" stop-opacity="0.23"/><stop offset="1.00" stop-opacity="0.36"/></linearGradient><linearGradient id="g164" class="fn" gradientUnits="userSpaceOnUse" x1="247.1" y1="643.4" x2="1079.7" y2="495.8"><stop offset="0.00" stop-opacity="0.09"/><stop offset="0.58" stop-opacity="0.07"/><stop offset="1.00" stop-opacity="0.06"/></linearGradient><linearGradient id="g165" class="fn" gradientUnits="userSpaceOnUse" x1="593.6" y1="451.6" x2="954.5" y2="833.7"><stop offset="0.00" stop-opacity="0.17"/><stop offset="0.32" stop-opacity="0.23"/><stop offset="1.00" stop-opacity="0.36"/></linearGradient><linearGradient id="g166" class="fn" gradientUnits="userSpaceOnUse" x1="246.9" y1="645.7" x2="1082.2" y2="497.0"><stop offset="0.00" stop-opacity="0.09"/><stop offset="0.58" stop-opacity="0.07"/><stop offset="1.00" stop-opacity="0.06"/></linearGradient><linearGradient id="g167" class="fn" gradientUnits="userSpaceOnUse" x1="596.9" y1="451.2" x2="962.5" y2="833.9"><stop offset="0.00" stop-opacity="0.17"/><stop offset="0.32" stop-opacity="0.23"/><stop offset="1.00" stop-opacity="0.36"/></linearGradient><linearGradient id="g168" class="fn" gradientUnits="userSpaceOnUse" x1="246.8" y1="648.0" x2="1084.7" y2="498.2"><stop offset="0.00" stop-opacity="0.09"/><stop offset="0.58" stop-opacity="0.07"/><stop offset="1.00" stop-opacity="0.06"/></linearGradient><linearGradient id="g169" class="fn" gradientUnits="userSpaceOnUse" x1="600.1" y1="450.8" x2="970.4" y2="834.1"><stop offset="0.00" stop-opacity="0.17"/><stop offset="0.32" stop-opacity="0.23"/><stop offset="1.00" stop-opacity="0.36"/></linearGradient><linearGradient id="g170" class="fn" gradientUnits="userSpaceOnUse" x1="246.7" y1="650.4" x2="1087.2" y2="499.4"><stop offset="0.00" stop-opacity="0.09"/><stop offset="0.58" stop-opacity="0.07"/><stop offset="1.00" stop-opacity="0.06"/></linearGradient><linearGradient id="g171" class="fn" gradientUnits="userSpaceOnUse" x1="603.3" y1="450.4" x2="978.4" y2="834.3"><stop offset="0.00" stop-opacity="0.17"/><stop offset="0.32" stop-opacity="0.23"/><stop offset="1.00" stop-opacity="0.36"/></linearGradient><linearGradient id="g172" class="fn" gradientUnits="userSpaceOnUse" x1="246.6" y1="652.7" x2="1089.7" y2="500.6"><stop offset="0.00" stop-opacity="0.10"/><stop offset="0.58" stop-opacity="0.07"/><stop offset="1.00" stop-opacity="0.06"/></linearGradient><linearGradient id="g173" class="fn" gradientUnits="userSpaceOnUse" x1="606.6" y1="450.0" x2="986.4" y2="834.5"><stop offset="0.00" stop-opacity="0.11"/><stop offset="0.32" stop-opacity="0.18"/><stop offset="1.00" stop-opacity="0.36"/></linearGradient><linearGradient id="g174" class="fn" gradientUnits="userSpaceOnUse" x1="246.4" y1="655.1" x2="1092.3" y2="501.8"><stop offset="0.00" stop-opacity="0.10"/><stop offset="0.58" stop-opacity="0.07"/><stop offset="1.00" stop-opacity="0.06"/></linearGradient><linearGradient id="g175" class="fn" gradientUnits="userSpaceOnUse" x1="609.8" y1="449.6" x2="994.4" y2="834.7"><stop offset="0.00" stop-opacity="0.11"/><stop offset="0.32" stop-opacity="0.18"/><stop offset="1.00" stop-opacity="0.36"/></linearGradient><linearGradient id="g176" class="fn" gradientUnits="userSpaceOnUse" x1="246.3" y1="657.5" x2="1094.9" y2="503.0"><stop offset="0.00" stop-opacity="0.10"/><stop offset="0.58" stop-opacity="0.07"/><stop offset="1.00" stop-opacity="0.06"/></linearGradient><linearGradient id="g177" class="fn" gradientUnits="userSpaceOnUse" x1="613.0" y1="449.2" x2="1002.4" y2="834.9"><stop offset="0.00" stop-opacity="0.11"/><stop offset="0.32" stop-opacity="0.18"/><stop offset="1.00" stop-opacity="0.35"/></linearGradient><linearGradient id="g178" class="fn" gradientUnits="userSpaceOnUse" x1="246.1" y1="659.9" x2="1097.5" y2="504.2"><stop offset="0.00" stop-opacity="0.10"/><stop offset="0.58" stop-opacity="0.08"/><stop offset="1.00" stop-opacity="0.06"/></linearGradient><linearGradient id="g179" class="fn" gradientUnits="userSpaceOnUse" x1="616.2" y1="448.8" x2="1008.3" y2="833.0"><stop offset="0.00" stop-opacity="0.11"/><stop offset="0.32" stop-opacity="0.18"/><stop offset="1.00" stop-opacity="0.35"/></linearGradient><linearGradient id="g180" class="fn" gradientUnits="userSpaceOnUse" x1="246.0" y1="662.3" x2="1100.1" y2="505.5"><stop offset="0.00" stop-opacity="0.10"/><stop offset="0.58" stop-opacity="0.08"/><stop offset="1.00" stop-opacity="0.06"/></linearGradient><linearGradient id="g181" class="fn" gradientUnits="userSpaceOnUse" x1="622.6" y1="447.9" x2="1024.3" y2="833.4"><stop offset="0.00" stop-opacity="0.11"/><stop offset="0.32" stop-opacity="0.17"/><stop offset="1.00" stop-opacity="0.34"/></linearGradient><linearGradient id="g182" class="fn" gradientUnits="userSpaceOnUse" x1="245.7" y1="667.3" x2="1105.4" y2="508.0"><stop offset="0.00" stop-opacity="0.10"/><stop offset="0.59" stop-opacity="0.08"/><stop offset="1.00" stop-opacity="0.06"/></linearGradient><linearGradient id="g183" class="fn" gradientUnits="userSpaceOnUse" x1="625.7" y1="447.5" x2="1032.3" y2="833.6"><stop offset="0.00" stop-opacity="0.11"/><stop offset="0.32" stop-opacity="0.17"/><stop offset="1.00" stop-opacity="0.34"/></linearGradient><linearGradient id="g184" class="fn" gradientUnits="userSpaceOnUse" x1="245.6" y1="669.8" x2="1108.0" y2="509.2"><stop offset="0.00" stop-opacity="0.11"/><stop offset="0.59" stop-opacity="0.08"/><stop offset="1.00" stop-opacity="0.06"/></linearGradient><linearGradient id="g185" class="fn" gradientUnits="userSpaceOnUse" x1="628.9" y1="447.1" x2="1040.3" y2="833.8"><stop offset="0.00" stop-opacity="0.11"/><stop offset="0.32" stop-opacity="0.17"/><stop offset="1.00" stop-opacity="0.34"/></linearGradient><linearGradient id="g186" class="fn" gradientUnits="userSpaceOnUse" x1="245.4" y1="672.3" x2="1110.7" y2="510.5"><stop offset="0.00" stop-opacity="0.11"/><stop offset="0.59" stop-opacity="0.08"/><stop offset="1.00" stop-opacity="0.06"/></linearGradient><linearGradient id="g187" class="fn" gradientUnits="userSpaceOnUse" x1="632.1" y1="446.7" x2="1048.3" y2="834.0"><stop offset="0.00" stop-opacity="0.11"/><stop offset="0.32" stop-opacity="0.17"/><stop offset="1.00" stop-opacity="0.34"/></linearGradient><linearGradient id="g188" class="fn" gradientUnits="userSpaceOnUse" x1="245.3" y1="674.8" x2="1113.4" y2="511.8"><stop offset="0.00" stop-opacity="0.11"/><stop offset="0.59" stop-opacity="0.08"/><stop offset="1.00" stop-opacity="0.06"/></linearGradient><linearGradient id="g189" class="fn" gradientUnits="userSpaceOnUse" x1="635.2" y1="446.3" x2="1056.3" y2="834.2"><stop offset="0.00" stop-opacity="0.10"/><stop offset="0.31" stop-opacity="0.17"/><stop offset="1.00" stop-opacity="0.33"/></linearGradient><linearGradient id="g190" class="fn" gradientUnits="userSpaceOnUse" x1="245.2" y1="677.4" x2="1116.1" y2="513.1"><stop offset="0.00" stop-opacity="0.11"/><stop offset="0.59" stop-opacity="0.08"/><stop offset="1.00" stop-opacity="0.06"/></linearGradient><linearGradient id="g191" class="fn" gradientUnits="userSpaceOnUse" x1="638.4" y1="445.9" x2="1062.0" y2="832.3"><stop offset="0.00" stop-opacity="0.10"/><stop offset="0.32" stop-opacity="0.16"/><stop offset="1.00" stop-opacity="0.33"/></linearGradient><linearGradient id="g192" class="fn" gradientUnits="userSpaceOnUse" x1="245.0" y1="680.0" x2="1118.8" y2="514.3"><stop offset="0.00" stop-opacity="0.11"/><stop offset="0.59" stop-opacity="0.08"/><stop offset="1.00" stop-opacity="0.07"/></linearGradient><linearGradient id="g193" class="fn" gradientUnits="userSpaceOnUse" x1="641.5" y1="445.5" x2="1067.7" y2="830.4"><stop offset="0.00" stop-opacity="0.10"/><stop offset="0.32" stop-opacity="0.16"/><stop offset="1.00" stop-opacity="0.33"/></linearGradient><linearGradient id="g194" class="fn" gradientUnits="userSpaceOnUse" x1="244.9" y1="682.6" x2="1121.6" y2="515.6"><stop offset="0.00" stop-opacity="0.11"/><stop offset="0.59" stop-opacity="0.08"/><stop offset="1.00" stop-opacity="0.07"/></linearGradient><linearGradient id="g195" class="fn" gradientUnits="userSpaceOnUse" x1="644.6" y1="445.1" x2="1073.3" y2="828.5"><stop offset="0.00" stop-opacity="0.10"/><stop offset="0.32" stop-opacity="0.16"/><stop offset="1.00" stop-opacity="0.32"/></linearGradient><linearGradient id="g196" class="fn" gradientUnits="userSpaceOnUse" x1="244.7" y1="685.2" x2="1124.3" y2="516.9"><stop offset="0.00" stop-opacity="0.11"/><stop offset="0.59" stop-opacity="0.09"/><stop offset="1.00" stop-opacity="0.07"/></linearGradient><linearGradient id="g197" class="fn" gradientUnits="userSpaceOnUse" x1="647.7" y1="444.7" x2="1078.9" y2="826.7"><stop offset="0.00" stop-opacity="0.10"/><stop offset="0.32" stop-opacity="0.16"/><stop offset="1.00" stop-opacity="0.32"/></linearGradient><linearGradient id="g198" class="fn" gradientUnits="userSpaceOnUse" x1="244.6" y1="687.9" x2="1127.1" y2="518.3"><stop offset="0.00" stop-opacity="0.12"/><stop offset="0.59" stop-opacity="0.09"/><stop offset="1.00" stop-opacity="0.07"/></linearGradient><linearGradient id="g199" class="fn" gradientUnits="userSpaceOnUse" x1="654.0" y1="444.0" x2="1090.1" y2="822.9"><stop offset="0.00" stop-opacity="0.10"/><stop offset="0.32" stop-opacity="0.16"/><stop offset="1.00" stop-opacity="0.31"/></linearGradient><linearGradient id="g200" class="fn" gradientUnits="userSpaceOnUse" x1="244.3" y1="693.3" x2="1132.7" y2="520.9"><stop offset="0.00" stop-opacity="0.12"/><stop offset="0.59" stop-opacity="0.09"/><stop offset="1.00" stop-opacity="0.07"/></linearGradient><linearGradient id="g201" class="fn" gradientUnits="userSpaceOnUse" x1="657.1" y1="443.6" x2="1095.6" y2="821.1"><stop offset="0.00" stop-opacity="0.10"/><stop offset="0.32" stop-opacity="0.15"/><stop offset="1.00" stop-opacity="0.31"/></linearGradient><linearGradient id="g202" class="fn" gradientUnits="userSpaceOnUse" x1="244.1" y1="696.1" x2="1135.6" y2="522.3"><stop offset="0.00" stop-opacity="0.12"/><stop offset="0.59" stop-opacity="0.09"/><stop offset="1.00" stop-opacity="0.07"/></linearGradient><linearGradient id="g203" class="fn" gradientUnits="userSpaceOnUse" x1="660.2" y1="443.2" x2="1101.1" y2="819.3"><stop offset="0.00" stop-opacity="0.10"/><stop offset="0.32" stop-opacity="0.15"/><stop offset="1.00" stop-opacity="0.30"/></linearGradient><linearGradient id="g204" class="fn" gradientUnits="userSpaceOnUse" x1="243.9" y1="698.8" x2="1138.4" y2="523.6"><stop offset="0.00" stop-opacity="0.12"/><stop offset="0.59" stop-opacity="0.09"/><stop offset="1.00" stop-opacity="0.07"/></linearGradient><linearGradient id="g205" class="fn" gradientUnits="userSpaceOnUse" x1="663.2" y1="442.8" x2="1106.6" y2="817.4"><stop offset="0.00" stop-opacity="0.10"/><stop offset="0.32" stop-opacity="0.15"/><stop offset="1.00" stop-opacity="0.30"/></linearGradient><linearGradient id="g206" class="fn" gradientUnits="userSpaceOnUse" x1="243.8" y1="701.6" x2="1141.3" y2="525.0"><stop offset="0.00" stop-opacity="0.12"/><stop offset="0.59" stop-opacity="0.09"/><stop offset="1.00" stop-opacity="0.07"/></linearGradient><linearGradient id="g207" class="fn" gradientUnits="userSpaceOnUse" x1="666.3" y1="442.4" x2="1112.0" y2="815.6"><stop offset="0.00" stop-opacity="0.09"/><stop offset="0.32" stop-opacity="0.15"/><stop offset="1.00" stop-opacity="0.30"/></linearGradient><linearGradient id="g208" class="fn" gradientUnits="userSpaceOnUse" x1="243.6" y1="704.5" x2="1144.2" y2="526.3"><stop offset="0.00" stop-opacity="0.13"/><stop offset="0.59" stop-opacity="0.09"/><stop offset="1.00" stop-opacity="0.07"/></linearGradient><linearGradient id="g209" class="fn" gradientUnits="userSpaceOnUse" x1="669.4" y1="442.0" x2="1117.4" y2="813.8"><stop offset="0.00" stop-opacity="0.09"/><stop offset="0.32" stop-opacity="0.15"/><stop offset="1.00" stop-opacity="0.29"/></linearGradient><linearGradient id="g210" class="fn" gradientUnits="userSpaceOnUse" x1="243.5" y1="707.3" x2="1147.1" y2="527.7"><stop offset="0.00" stop-opacity="0.13"/><stop offset="0.59" stop-opacity="0.09"/><stop offset="1.00" stop-opacity="0.07"/></linearGradient><linearGradient id="g211" class="fn" gradientUnits="userSpaceOnUse" x1="672.4" y1="441.6" x2="1122.8" y2="812.0"><stop offset="0.00" stop-opacity="0.09"/><stop offset="0.32" stop-opacity="0.15"/><stop offset="1.00" stop-opacity="0.29"/></linearGradient><linearGradient id="g212" class="fn" gradientUnits="userSpaceOnUse" x1="243.3" y1="710.2" x2="1150.1" y2="529.1"><stop offset="0.00" stop-opacity="0.13"/><stop offset="0.59" stop-opacity="0.10"/><stop offset="1.00" stop-opacity="0.07"/></linearGradient><linearGradient id="g213" class="fn" gradientUnits="userSpaceOnUse" x1="675.5" y1="441.2" x2="1128.1" y2="810.2"><stop offset="0.00" stop-opacity="0.09"/><stop offset="0.32" stop-opacity="0.15"/><stop offset="1.00" stop-opacity="0.29"/></linearGradient><linearGradient id="g214" class="fn" gradientUnits="userSpaceOnUse" x1="243.1" y1="713.1" x2="1153.0" y2="530.5"><stop offset="0.00" stop-opacity="0.13"/><stop offset="0.59" stop-opacity="0.10"/><stop offset="1.00" stop-opacity="0.08"/></linearGradient><linearGradient id="g215" class="fn" gradientUnits="userSpaceOnUse" x1="678.5" y1="440.8" x2="1133.5" y2="808.4"><stop offset="0.00" stop-opacity="0.09"/><stop offset="0.32" stop-opacity="0.14"/><stop offset="1.00" stop-opacity="0.28"/></linearGradient><linearGradient id="g216" class="fn" gradientUnits="userSpaceOnUse" x1="243.0" y1="716.0" x2="1156.0" y2="531.9"><stop offset="0.00" stop-opacity="0.13"/><stop offset="0.59" stop-opacity="0.10"/><stop offset="1.00" stop-opacity="0.08"/></linearGradient><linearGradient id="g217" class="fn" gradientUnits="userSpaceOnUse" x1="684.6" y1="440.1" x2="1144.1" y2="804.9"><stop offset="0.00" stop-opacity="0.09"/><stop offset="0.32" stop-opacity="0.14"/><stop offset="1.00" stop-opacity="0.28"/></linearGradient><linearGradient id="g218" class="fn" gradientUnits="userSpaceOnUse" x1="242.6" y1="722.0" x2="1162.0" y2="534.8"><stop offset="0.00" stop-opacity="0.14"/><stop offset="0.59" stop-opacity="0.10"/><stop offset="1.00" stop-opacity="0.08"/></linearGradient><linearGradient id="g219" class="fn" gradientUnits="userSpaceOnUse" x1="687.6" y1="439.7" x2="1149.3" y2="803.2"><stop offset="0.00" stop-opacity="0.09"/><stop offset="0.32" stop-opacity="0.14"/><stop offset="1.00" stop-opacity="0.27"/></linearGradient><linearGradient id="g220" class="fn" gradientUnits="userSpaceOnUse" x1="242.5" y1="725.0" x2="1165.0" y2="536.2"><stop offset="0.00" stop-opacity="0.14"/><stop offset="0.59" stop-opacity="0.10"/><stop offset="1.00" stop-opacity="0.08"/></linearGradient><linearGradient id="g221" class="fn" gradientUnits="userSpaceOnUse" x1="690.7" y1="439.3" x2="1154.5" y2="801.4"><stop offset="0.00" stop-opacity="0.09"/><stop offset="0.32" stop-opacity="0.14"/><stop offset="1.00" stop-opacity="0.27"/></linearGradient><linearGradient id="g222" class="fn" gradientUnits="userSpaceOnUse" x1="242.3" y1="728.1" x2="1168.1" y2="537.6"><stop offset="0.00" stop-opacity="0.14"/><stop offset="0.59" stop-opacity="0.10"/><stop offset="1.00" stop-opacity="0.08"/></linearGradient><linearGradient id="g223" class="fn" gradientUnits="userSpaceOnUse" x1="693.7" y1="438.9" x2="1159.7" y2="799.7"><stop offset="0.00" stop-opacity="0.09"/><stop offset="0.32" stop-opacity="0.14"/><stop offset="1.00" stop-opacity="0.27"/></linearGradient><linearGradient id="g224" class="fn" gradientUnits="userSpaceOnUse" x1="242.1" y1="731.2" x2="1171.2" y2="539.1"><stop offset="0.00" stop-opacity="0.14"/><stop offset="0.59" stop-opacity="0.10"/><stop offset="1.00" stop-opacity="0.08"/></linearGradient><linearGradient id="g225" class="fn" gradientUnits="userSpaceOnUse" x1="696.7" y1="438.5" x2="1164.9" y2="798.0"><stop offset="0.00" stop-opacity="0.09"/><stop offset="0.32" stop-opacity="0.14"/><stop offset="1.00" stop-opacity="0.26"/></linearGradient><linearGradient id="g226" class="fn" gradientUnits="userSpaceOnUse" x1="241.9" y1="734.3" x2="1174.3" y2="540.6"><stop offset="0.00" stop-opacity="0.15"/><stop offset="0.59" stop-opacity="0.11"/><stop offset="1.00" stop-opacity="0.08"/></linearGradient><linearGradient id="g227" class="fn" gradientUnits="userSpaceOnUse" x1="699.7" y1="438.1" x2="1170.0" y2="796.2"><stop offset="0.00" stop-opacity="0.08"/><stop offset="0.32" stop-opacity="0.13"/><stop offset="1.00" stop-opacity="0.26"/></linearGradient><linearGradient id="g228" class="fn" gradientUnits="userSpaceOnUse" x1="241.8" y1="737.4" x2="1177.4" y2="542.0"><stop offset="0.00" stop-opacity="0.15"/><stop offset="0.59" stop-opacity="0.11"/><stop offset="1.00" stop-opacity="0.08"/></linearGradient><linearGradient id="g229" class="fn" gradientUnits="userSpaceOnUse" x1="702.7" y1="437.8" x2="1175.1" y2="794.5"><stop offset="0.00" stop-opacity="0.08"/><stop offset="0.32" stop-opacity="0.13"/><stop offset="1.00" stop-opacity="0.26"/></linearGradient><linearGradient id="g230" class="fn" gradientUnits="userSpaceOnUse" x1="241.6" y1="740.6" x2="1180.5" y2="543.5"><stop offset="0.00" stop-opacity="0.15"/><stop offset="0.59" stop-opacity="0.11"/><stop offset="1.00" stop-opacity="0.08"/></linearGradient><linearGradient id="g231" class="fn" gradientUnits="userSpaceOnUse" x1="705.6" y1="437.4" x2="1180.2" y2="792.8"><stop offset="0.00" stop-opacity="0.08"/><stop offset="0.32" stop-opacity="0.13"/><stop offset="1.00" stop-opacity="0.25"/></linearGradient><linearGradient id="g232" class="fn" gradientUnits="userSpaceOnUse" x1="241.4" y1="743.8" x2="1183.7" y2="545.0"><stop offset="0.00" stop-opacity="0.15"/><stop offset="0.60" stop-opacity="0.11"/><stop offset="1.00" stop-opacity="0.09"/></linearGradient><linearGradient id="g233" class="fn" gradientUnits="userSpaceOnUse" x1="708.6" y1="437.0" x2="1185.3" y2="791.1"><stop offset="0.00" stop-opacity="0.08"/><stop offset="0.32" stop-opacity="0.13"/><stop offset="1.00" stop-opacity="0.25"/></linearGradient><linearGradient id="g234" class="fn" gradientUnits="userSpaceOnUse" x1="241.2" y1="747.1" x2="1186.9" y2="546.5"><stop offset="0.00" stop-opacity="0.15"/><stop offset="0.60" stop-opacity="0.11"/><stop offset="1.00" stop-opacity="0.09"/></linearGradient><linearGradient id="g235" class="fn" gradientUnits="userSpaceOnUse" x1="714.5" y1="436.3" x2="1195.3" y2="787.8"><stop offset="0.00" stop-opacity="0.08"/><stop offset="0.32" stop-opacity="0.13"/><stop offset="1.00" stop-opacity="0.24"/></linearGradient><linearGradient id="g236" class="fn" gradientUnits="userSpaceOnUse" x1="240.8" y1="753.6" x2="1193.3" y2="549.6"><stop offset="0.00" stop-opacity="0.16"/><stop offset="0.60" stop-opacity="0.12"/><stop offset="1.00" stop-opacity="0.09"/></linearGradient><linearGradient id="g237" class="fn" gradientUnits="userSpaceOnUse" x1="717.5" y1="435.9" x2="1200.3" y2="786.1"><stop offset="0.00" stop-opacity="0.08"/><stop offset="0.32" stop-opacity="0.13"/><stop offset="1.00" stop-opacity="0.24"/></linearGradient><linearGradient id="g238" class="fn" gradientUnits="userSpaceOnUse" x1="240.7" y1="757.0" x2="1196.6" y2="551.1"><stop offset="0.00" stop-opacity="0.16"/><stop offset="0.60" stop-opacity="0.12"/><stop offset="1.00" stop-opacity="0.09"/></linearGradient><linearGradient id="g239" class="fn" gradientUnits="userSpaceOnUse" x1="720.4" y1="435.5" x2="1205.3" y2="784.5"><stop offset="0.00" stop-opacity="0.08"/><stop offset="0.32" stop-opacity="0.12"/><stop offset="1.00" stop-opacity="0.24"/></linearGradient><linearGradient id="g240" class="fn" gradientUnits="userSpaceOnUse" x1="240.5" y1="760.4" x2="1199.9" y2="552.7"><stop offset="0.00" stop-opacity="0.16"/><stop offset="0.60" stop-opacity="0.12"/><stop offset="1.00" stop-opacity="0.09"/></linearGradient><linearGradient id="g241" class="fn" gradientUnits="userSpaceOnUse" x1="723.4" y1="435.1" x2="1210.2" y2="782.8"><stop offset="0.00" stop-opacity="0.08"/><stop offset="0.32" stop-opacity="0.12"/><stop offset="1.00" stop-opacity="0.24"/></linearGradient><linearGradient id="g242" class="fn" gradientUnits="userSpaceOnUse" x1="240.3" y1="763.8" x2="1203.2" y2="554.2"><stop offset="0.00" stop-opacity="0.17"/><stop offset="0.60" stop-opacity="0.12"/><stop offset="1.00" stop-opacity="0.09"/></linearGradient><linearGradient id="g243" class="fn" gradientUnits="userSpaceOnUse" x1="726.3" y1="434.8" x2="1215.1" y2="781.2"><stop offset="0.00" stop-opacity="0.08"/><stop offset="0.32" stop-opacity="0.12"/><stop offset="1.00" stop-opacity="0.23"/></linearGradient><linearGradient id="g244" class="fn" gradientUnits="userSpaceOnUse" x1="240.1" y1="767.3" x2="1206.5" y2="555.8"><stop offset="0.00" stop-opacity="0.17"/><stop offset="0.60" stop-opacity="0.12"/><stop offset="1.00" stop-opacity="0.09"/></linearGradient><linearGradient id="g245" class="fn" gradientUnits="userSpaceOnUse" x1="729.2" y1="434.4" x2="1220.0" y2="779.6"><stop offset="0.00" stop-opacity="0.08"/><stop offset="0.32" stop-opacity="0.12"/><stop offset="1.00" stop-opacity="0.23"/></linearGradient><linearGradient id="g246" class="fn" gradientUnits="userSpaceOnUse" x1="239.9" y1="770.8" x2="1209.8" y2="557.4"><stop offset="0.00" stop-opacity="0.17"/><stop offset="0.60" stop-opacity="0.12"/><stop offset="1.00" stop-opacity="0.09"/></linearGradient><linearGradient id="g247" class="fn" gradientUnits="userSpaceOnUse" x1="732.1" y1="434.0" x2="1224.9" y2="777.9"><stop offset="0.00" stop-opacity="0.08"/><stop offset="0.32" stop-opacity="0.12"/><stop offset="1.00" stop-opacity="0.23"/></linearGradient><linearGradient id="g248" class="fn" gradientUnits="userSpaceOnUse" x1="239.7" y1="774.3" x2="1213.2" y2="559.0"><stop offset="0.00" stop-opacity="0.17"/><stop offset="0.60" stop-opacity="0.13"/><stop offset="1.00" stop-opacity="0.10"/></linearGradient><linearGradient id="g249" class="fn" gradientUnits="userSpaceOnUse" x1="735.1" y1="433.6" x2="1229.7" y2="776.3"><stop offset="0.00" stop-opacity="0.08"/><stop offset="0.32" stop-opacity="0.12"/><stop offset="1.00" stop-opacity="0.23"/></linearGradient><linearGradient id="g250" class="fn" gradientUnits="userSpaceOnUse" x1="239.5" y1="777.9" x2="1216.6" y2="560.6"><stop offset="0.00" stop-opacity="0.18"/><stop offset="0.60" stop-opacity="0.13"/><stop offset="1.00" stop-opacity="0.10"/></linearGradient><linearGradient id="g251" class="fn" gradientUnits="userSpaceOnUse" x1="738.0" y1="433.3" x2="1234.6" y2="774.7"><stop offset="0.00" stop-opacity="0.07"/><stop offset="0.32" stop-opacity="0.12"/><stop offset="1.00" stop-opacity="0.22"/></linearGradient><linearGradient id="g252" class="fn" gradientUnits="userSpaceOnUse" x1="239.3" y1="781.5" x2="1220.0" y2="562.2"><stop offset="0.00" stop-opacity="0.18"/><stop offset="0.60" stop-opacity="0.13"/><stop offset="1.00" stop-opacity="0.10"/></linearGradient><linearGradient id="g253" class="fn" gradientUnits="userSpaceOnUse" x1="743.8" y1="432.5" x2="1244.1" y2="771.5"><stop offset="0.00" stop-opacity="0.07"/><stop offset="0.33" stop-opacity="0.11"/><stop offset="1.00" stop-opacity="0.22"/></linearGradient><linearGradient id="g254" class="fn" gradientUnits="userSpaceOnUse" x1="238.9" y1="788.8" x2="1227.0" y2="565.5"><stop offset="0.00" stop-opacity="0.19"/><stop offset="0.60" stop-opacity="0.13"/><stop offset="1.00" stop-opacity="0.10"/></linearGradient><linearGradient id="g255" class="fn" gradientUnits="userSpaceOnUse" x1="746.6" y1="432.2" x2="1248.9" y2="769.9"><stop offset="0.00" stop-opacity="0.07"/><stop offset="0.33" stop-opacity="0.11"/><stop offset="1.00" stop-opacity="0.22"/></linearGradient><linearGradient id="g256" class="fn" gradientUnits="userSpaceOnUse" x1="238.6" y1="792.5" x2="1230.5" y2="567.1"><stop offset="0.00" stop-opacity="0.19"/><stop offset="0.60" stop-opacity="0.13"/><stop offset="1.00" stop-opacity="0.10"/></linearGradient><linearGradient id="g257" class="fn" gradientUnits="userSpaceOnUse" x1="749.5" y1="431.8" x2="1253.6" y2="768.3"><stop offset="0.00" stop-opacity="0.07"/><stop offset="0.33" stop-opacity="0.11"/><stop offset="1.00" stop-opacity="0.21"/></linearGradient><linearGradient id="g258" class="fn" gradientUnits="userSpaceOnUse" x1="238.4" y1="796.3" x2="1234.0" y2="568.8"><stop offset="0.00" stop-opacity="0.19"/><stop offset="0.60" stop-opacity="0.14"/><stop offset="1.00" stop-opacity="0.10"/></linearGradient><linearGradient id="g259" class="fn" gradientUnits="userSpaceOnUse" x1="752.4" y1="431.4" x2="1258.3" y2="766.8"><stop offset="0.00" stop-opacity="0.07"/><stop offset="0.33" stop-opacity="0.11"/><stop offset="1.00" stop-opacity="0.21"/></linearGradient><linearGradient id="g260" class="fn" gradientUnits="userSpaceOnUse" x1="238.2" y1="800.1" x2="1237.5" y2="570.5"><stop offset="0.00" stop-opacity="0.19"/><stop offset="0.60" stop-opacity="0.14"/><stop offset="1.00" stop-opacity="0.10"/></linearGradient><linearGradient id="g261" class="fn" gradientUnits="userSpaceOnUse" x1="755.2" y1="431.1" x2="1263.0" y2="765.2"><stop offset="0.00" stop-opacity="0.07"/><stop offset="0.33" stop-opacity="0.11"/><stop offset="1.00" stop-opacity="0.21"/></linearGradient><linearGradient id="g262" class="fn" gradientUnits="userSpaceOnUse" x1="238.0" y1="804.0" x2="1241.1" y2="572.2"><stop offset="0.00" stop-opacity="0.20"/><stop offset="0.60" stop-opacity="0.14"/><stop offset="1.00" stop-opacity="0.11"/></linearGradient><linearGradient id="g263" class="fn" gradientUnits="userSpaceOnUse" x1="758.1" y1="430.7" x2="1267.6" y2="763.7"><stop offset="0.00" stop-opacity="0.07"/><stop offset="0.33" stop-opacity="0.11"/><stop offset="1.00" stop-opacity="0.21"/></linearGradient><linearGradient id="g264" class="fn" gradientUnits="userSpaceOnUse" x1="237.8" y1="807.9" x2="1244.7" y2="573.9"><stop offset="0.00" stop-opacity="0.20"/><stop offset="0.60" stop-opacity="0.14"/><stop offset="1.00" stop-opacity="0.11"/></linearGradient><linearGradient id="g265" class="fn" gradientUnits="userSpaceOnUse" x1="761.0" y1="430.4" x2="1272.3" y2="762.1"><stop offset="0.00" stop-opacity="0.07"/><stop offset="0.33" stop-opacity="0.11"/><stop offset="1.00" stop-opacity="0.20"/></linearGradient><linearGradient id="g266" class="fn" gradientUnits="userSpaceOnUse" x1="237.6" y1="811.8" x2="1248.3" y2="575.6"><stop offset="0.00" stop-opacity="0.20"/><stop offset="0.60" stop-opacity="0.14"/><stop offset="1.00" stop-opacity="0.11"/></linearGradient><linearGradient id="g267" class="fn" gradientUnits="userSpaceOnUse" x1="763.8" y1="430.0" x2="1276.9" y2="760.6"><stop offset="0.00" stop-opacity="0.07"/><stop offset="0.33" stop-opacity="0.11"/><stop offset="1.00" stop-opacity="0.20"/></linearGradient><linearGradient id="g268" class="fn" gradientUnits="userSpaceOnUse" x1="237.3" y1="815.8" x2="1252.0" y2="577.3"><stop offset="0.00" stop-opacity="0.21"/><stop offset="0.60" stop-opacity="0.15"/><stop offset="1.00" stop-opacity="0.11"/></linearGradient><linearGradient id="g269" class="fn" gradientUnits="userSpaceOnUse" x1="766.6" y1="429.6" x2="1281.5" y2="759.0"><stop offset="0.00" stop-opacity="0.07"/><stop offset="0.33" stop-opacity="0.11"/><stop offset="1.00" stop-opacity="0.20"/></linearGradient><linearGradient id="g270" class="fn" gradientUnits="userSpaceOnUse" x1="237.1" y1="819.8" x2="1255.7" y2="579.1"><stop offset="0.00" stop-opacity="0.21"/><stop offset="0.60" stop-opacity="0.15"/><stop offset="1.00" stop-opacity="0.11"/></linearGradient><linearGradient id="g271" class="fn" gradientUnits="userSpaceOnUse" x1="772.3" y1="428.9" x2="1290.6" y2="756.0"><stop offset="0.00" stop-opacity="0.07"/><stop offset="0.33" stop-opacity="0.10"/><stop offset="1.00" stop-opacity="0.20"/></linearGradient><linearGradient id="g272" class="fn" gradientUnits="userSpaceOnUse" x1="236.6" y1="828.1" x2="1263.2" y2="582.6"><stop offset="0.00" stop-opacity="0.22"/><stop offset="0.61" stop-opacity="0.15"/><stop offset="1.00" stop-opacity="0.12"/></linearGradient><linearGradient id="g273" class="fn" gradientUnits="userSpaceOnUse" x1="775.1" y1="428.6" x2="1295.1" y2="754.5"><stop offset="0.00" stop-opacity="0.07"/><stop offset="0.33" stop-opacity="0.10"/><stop offset="1.00" stop-opacity="0.19"/></linearGradient><linearGradient id="g274" class="fn" gradientUnits="userSpaceOnUse" x1="236.4" y1="832.2" x2="1266.9" y2="584.4"><stop offset="0.00" stop-opacity="0.22"/><stop offset="0.61" stop-opacity="0.16"/><stop offset="1.00" stop-opacity="0.12"/></linearGradient><linearGradient id="g275" class="fn" gradientUnits="userSpaceOnUse" x1="777.9" y1="428.2" x2="1299.6" y2="753.0"><stop offset="0.00" stop-opacity="0.07"/><stop offset="0.33" stop-opacity="0.10"/><stop offset="1.00" stop-opacity="0.19"/></linearGradient><linearGradient id="g276" class="fn" gradientUnits="userSpaceOnUse" x1="244.1" y1="834.5" x2="1270.7" y2="586.2"><stop offset="0.00" stop-opacity="0.23"/><stop offset="0.61" stop-opacity="0.16"/><stop offset="1.00" stop-opacity="0.12"/></linearGradient><linearGradient id="g277" class="fn" gradientUnits="userSpaceOnUse" x1="780.7" y1="427.8" x2="1304.1" y2="751.5"><stop offset="0.00" stop-opacity="0.07"/><stop offset="0.33" stop-opacity="0.10"/><stop offset="1.00" stop-opacity="0.19"/></linearGradient><linearGradient id="g278" class="fn" gradientUnits="userSpaceOnUse" x1="259.7" y1="834.9" x2="1274.6" y2="588.0"><stop offset="0.00" stop-opacity="0.23"/><stop offset="0.60" stop-opacity="0.16"/><stop offset="1.00" stop-opacity="0.12"/></linearGradient><linearGradient id="g279" class="fn" gradientUnits="userSpaceOnUse" x1="783.5" y1="427.5" x2="1308.5" y2="750.0"><stop offset="0.00" stop-opacity="0.06"/><stop offset="0.33" stop-opacity="0.10"/><stop offset="1.00" stop-opacity="0.19"/></linearGradient><linearGradient id="g280" class="fn" gradientUnits="userSpaceOnUse" x1="279.3" y1="834.4" x2="1278.4" y2="589.8"><stop offset="0.00" stop-opacity="0.23"/><stop offset="0.60" stop-opacity="0.16"/><stop offset="1.00" stop-opacity="0.12"/></linearGradient><linearGradient id="g281" class="fn" gradientUnits="userSpaceOnUse" x1="786.3" y1="427.1" x2="1313.0" y2="748.5"><stop offset="0.00" stop-opacity="0.06"/><stop offset="0.33" stop-opacity="0.10"/><stop offset="1.00" stop-opacity="0.19"/></linearGradient><linearGradient id="g282" class="fn" gradientUnits="userSpaceOnUse" x1="295.0" y1="834.8" x2="1282.3" y2="591.6"><stop offset="0.00" stop-opacity="0.23"/><stop offset="0.60" stop-opacity="0.16"/><stop offset="1.00" stop-opacity="0.12"/></linearGradient><linearGradient id="g283" class="fn" gradientUnits="userSpaceOnUse" x1="789.1" y1="426.8" x2="1317.4" y2="747.1"><stop offset="0.00" stop-opacity="0.06"/><stop offset="0.33" stop-opacity="0.10"/><stop offset="1.00" stop-opacity="0.18"/></linearGradient><linearGradient id="g284" class="fn" gradientUnits="userSpaceOnUse" x1="314.5" y1="834.2" x2="1286.2" y2="593.5"><stop offset="0.00" stop-opacity="0.23"/><stop offset="0.60" stop-opacity="0.17"/><stop offset="1.00" stop-opacity="0.13"/></linearGradient><linearGradient id="g285" class="fn" gradientUnits="userSpaceOnUse" x1="791.9" y1="426.4" x2="1321.8" y2="745.6"><stop offset="0.00" stop-opacity="0.06"/><stop offset="0.33" stop-opacity="0.10"/><stop offset="1.00" stop-opacity="0.18"/></linearGradient><linearGradient id="g286" class="fn" gradientUnits="userSpaceOnUse" x1="330.2" y1="834.6" x2="1290.2" y2="595.4"><stop offset="0.00" stop-opacity="0.24"/><stop offset="0.60" stop-opacity="0.17"/><stop offset="1.00" stop-opacity="0.13"/></linearGradient><linearGradient id="g287" class="fn" gradientUnits="userSpaceOnUse" x1="794.6" y1="426.1" x2="1326.2" y2="744.1"><stop offset="0.00" stop-opacity="0.06"/><stop offset="0.33" stop-opacity="0.10"/><stop offset="1.00" stop-opacity="0.18"/></linearGradient><linearGradient id="g288" class="fn" gradientUnits="userSpaceOnUse" x1="349.7" y1="834.1" x2="1294.2" y2="597.2"><stop offset="0.00" stop-opacity="0.24"/><stop offset="0.60" stop-opacity="0.17"/><stop offset="1.00" stop-opacity="0.13"/></linearGradient><linearGradient id="g289" class="fn" gradientUnits="userSpaceOnUse" x1="800.2" y1="425.4" x2="1334.9" y2="741.2"><stop offset="0.00" stop-opacity="0.06"/><stop offset="0.33" stop-opacity="0.09"/><stop offset="1.00" stop-opacity="0.18"/></linearGradient><linearGradient id="g290" class="fn" gradientUnits="userSpaceOnUse" x1="381.1" y1="834.9" x2="1302.2" y2="601.0"><stop offset="0.00" stop-opacity="0.24"/><stop offset="0.60" stop-opacity="0.17"/><stop offset="1.00" stop-opacity="0.13"/></linearGradient><linearGradient id="g291" class="fn" gradientUnits="userSpaceOnUse" x1="802.9" y1="425.0" x2="1339.2" y2="739.8"><stop offset="0.00" stop-opacity="0.06"/><stop offset="0.33" stop-opacity="0.09"/><stop offset="1.00" stop-opacity="0.17"/></linearGradient><linearGradient id="g292" class="fn" gradientUnits="userSpaceOnUse" x1="400.6" y1="834.3" x2="1306.3" y2="603.0"><stop offset="0.00" stop-opacity="0.24"/><stop offset="0.60" stop-opacity="0.18"/><stop offset="1.00" stop-opacity="0.13"/></linearGradient><linearGradient id="g293" class="fn" gradientUnits="userSpaceOnUse" x1="805.7" y1="424.7" x2="1343.5" y2="738.3"><stop offset="0.00" stop-opacity="0.06"/><stop offset="0.33" stop-opacity="0.09"/><stop offset="1.00" stop-opacity="0.17"/></linearGradient><linearGradient id="g294" class="fn" gradientUnits="userSpaceOnUse" x1="416.3" y1="834.7" x2="1310.4" y2="604.9"><stop offset="0.00" stop-opacity="0.25"/><stop offset="0.60" stop-opacity="0.18"/><stop offset="1.00" stop-opacity="0.14"/></linearGradient><linearGradient id="g295" class="fn" gradientUnits="userSpaceOnUse" x1="808.4" y1="424.3" x2="1347.7" y2="736.9"><stop offset="0.00" stop-opacity="0.06"/><stop offset="0.33" stop-opacity="0.09"/><stop offset="1.00" stop-opacity="0.17"/></linearGradient><linearGradient id="g296" class="fn" gradientUnits="userSpaceOnUse" x1="435.7" y1="834.2" x2="1314.5" y2="606.9"><stop offset="0.00" stop-opacity="0.25"/><stop offset="0.59" stop-opacity="0.18"/><stop offset="1.00" stop-opacity="0.14"/></linearGradient><linearGradient id="g297" class="fn" gradientUnits="userSpaceOnUse" x1="811.1" y1="424.0" x2="1352.0" y2="735.5"><stop offset="0.00" stop-opacity="0.06"/><stop offset="0.33" stop-opacity="0.09"/><stop offset="1.00" stop-opacity="0.17"/></linearGradient><linearGradient id="g298" class="fn" gradientUnits="userSpaceOnUse" x1="451.5" y1="834.6" x2="1318.7" y2="608.9"><stop offset="0.00" stop-opacity="0.25"/><stop offset="0.59" stop-opacity="0.18"/><stop offset="1.00" stop-opacity="0.14"/></linearGradient><linearGradient id="g299" class="fn" gradientUnits="userSpaceOnUse" x1="813.9" y1="423.6" x2="1356.2" y2="734.1"><stop offset="0.00" stop-opacity="0.06"/><stop offset="0.33" stop-opacity="0.09"/><stop offset="1.00" stop-opacity="0.17"/></linearGradient><linearGradient id="g300" class="fn" gradientUnits="userSpaceOnUse" x1="467.2" y1="835.0" x2="1322.9" y2="610.8"><stop offset="0.00" stop-opacity="0.25"/><stop offset="0.59" stop-opacity="0.18"/><stop offset="1.00" stop-opacity="0.14"/></linearGradient><linearGradient id="g301" class="fn" gradientUnits="userSpaceOnUse" x1="816.6" y1="423.3" x2="1360.4" y2="732.7"><stop offset="0.00" stop-opacity="0.06"/><stop offset="0.33" stop-opacity="0.09"/><stop offset="1.00" stop-opacity="0.16"/></linearGradient><linearGradient id="g302" class="fn" gradientUnits="userSpaceOnUse" x1="486.6" y1="834.4" x2="1327.2" y2="612.8"><stop offset="0.00" stop-opacity="0.25"/><stop offset="0.59" stop-opacity="0.19"/><stop offset="1.00" stop-opacity="0.15"/></linearGradient><linearGradient id="g303" class="fn" gradientUnits="userSpaceOnUse" x1="819.3" y1="422.9" x2="1364.6" y2="731.3"><stop offset="0.00" stop-opacity="0.06"/><stop offset="0.33" stop-opacity="0.09"/><stop offset="1.00" stop-opacity="0.16"/></linearGradient><linearGradient id="g304" class="fn" gradientUnits="userSpaceOnUse" x1="502.4" y1="834.8" x2="1331.4" y2="614.9"><stop offset="0.00" stop-opacity="0.26"/><stop offset="0.59" stop-opacity="0.19"/><stop offset="1.00" stop-opacity="0.15"/></linearGradient><linearGradient id="g305" class="fn" gradientUnits="userSpaceOnUse" x1="822.0" y1="422.6" x2="1368.8" y2="729.9"><stop offset="0.00" stop-opacity="0.06"/><stop offset="0.33" stop-opacity="0.09"/><stop offset="1.00" stop-opacity="0.16"/></linearGradient><linearGradient id="g306" class="fn" gradientUnits="userSpaceOnUse" x1="521.7" y1="834.2" x2="1335.8" y2="616.9"><stop offset="0.00" stop-opacity="0.26"/><stop offset="0.59" stop-opacity="0.19"/><stop offset="1.00" stop-opacity="0.15"/></linearGradient><linearGradient id="g307" class="fn" gradientUnits="userSpaceOnUse" x1="827.4" y1="421.9" x2="1377.1" y2="727.1"><stop offset="0.00" stop-opacity="0.06"/><stop offset="0.33" stop-opacity="0.09"/><stop offset="1.00" stop-opacity="0.16"/></linearGradient><linearGradient id="g308" class="fn" gradientUnits="userSpaceOnUse" x1="556.8" y1="834.1" x2="1344.5" y2="621.0"><stop offset="0.00" stop-opacity="0.26"/><stop offset="0.59" stop-opacity="0.20"/><stop offset="1.00" stop-opacity="0.15"/></linearGradient><linearGradient id="g309" class="fn" gradientUnits="userSpaceOnUse" x1="830.1" y1="421.6" x2="1381.2" y2="725.7"><stop offset="0.00" stop-opacity="0.06"/><stop offset="0.33" stop-opacity="0.09"/><stop offset="1.00" stop-opacity="0.16"/></linearGradient><linearGradient id="g310" class="fn" gradientUnits="userSpaceOnUse" x1="572.6" y1="834.5" x2="1348.9" y2="623.1"><stop offset="0.00" stop-opacity="0.27"/><stop offset="0.59" stop-opacity="0.20"/><stop offset="1.00" stop-opacity="0.16"/></linearGradient><linearGradient id="g311" class="fn" gradientUnits="userSpaceOnUse" x1="832.8" y1="421.2" x2="1385.3" y2="724.4"><stop offset="0.00" stop-opacity="0.06"/><stop offset="0.33" stop-opacity="0.08"/><stop offset="1.00" stop-opacity="0.15"/></linearGradient><linearGradient id="g312" class="fn" gradientUnits="userSpaceOnUse" x1="588.4" y1="834.9" x2="1353.4" y2="625.2"><stop offset="0.00" stop-opacity="0.27"/><stop offset="0.59" stop-opacity="0.20"/><stop offset="1.00" stop-opacity="0.16"/></linearGradient><linearGradient id="g313" class="fn" gradientUnits="userSpaceOnUse" x1="835.5" y1="420.9" x2="1389.4" y2="723.0"><stop offset="0.00" stop-opacity="0.05"/><stop offset="0.33" stop-opacity="0.08"/><stop offset="1.00" stop-opacity="0.15"/></linearGradient><linearGradient id="g314" class="fn" gradientUnits="userSpaceOnUse" x1="607.7" y1="834.3" x2="1357.9" y2="627.4"><stop offset="0.00" stop-opacity="0.27"/><stop offset="0.58" stop-opacity="0.20"/><stop offset="1.00" stop-opacity="0.16"/></linearGradient><linearGradient id="g315" class="fn" gradientUnits="userSpaceOnUse" x1="838.1" y1="420.5" x2="1393.5" y2="721.6"><stop offset="0.00" stop-opacity="0.05"/><stop offset="0.33" stop-opacity="0.08"/><stop offset="1.00" stop-opacity="0.15"/></linearGradient><linearGradient id="g316" class="fn" gradientUnits="userSpaceOnUse" x1="623.5" y1="834.7" x2="1362.4" y2="629.5"><stop offset="0.00" stop-opacity="0.27"/><stop offset="0.58" stop-opacity="0.21"/><stop offset="1.00" stop-opacity="0.16"/></linearGradient><linearGradient id="g317" class="fn" gradientUnits="userSpaceOnUse" x1="840.8" y1="420.2" x2="1397.5" y2="720.3"><stop offset="0.00" stop-opacity="0.05"/><stop offset="0.33" stop-opacity="0.08"/><stop offset="1.00" stop-opacity="0.15"/></linearGradient><linearGradient id="g318" class="fn" gradientUnits="userSpaceOnUse" x1="642.8" y1="834.2" x2="1367.0" y2="631.7"><stop offset="0.00" stop-opacity="0.28"/><stop offset="0.58" stop-opacity="0.21"/><stop offset="1.00" stop-opacity="0.17"/></linearGradient><linearGradient id="g319" class="fn" gradientUnits="userSpaceOnUse" x1="843.4" y1="419.9" x2="1401.6" y2="718.9"><stop offset="0.00" stop-opacity="0.05"/><stop offset="0.33" stop-opacity="0.08"/><stop offset="1.00" stop-opacity="0.15"/></linearGradient><linearGradient id="g320" class="fn" gradientUnits="userSpaceOnUse" x1="658.6" y1="834.6" x2="1371.6" y2="633.8"><stop offset="0.00" stop-opacity="0.28"/><stop offset="0.58" stop-opacity="0.21"/><stop offset="1.00" stop-opacity="0.17"/></linearGradient><linearGradient id="g321" class="fn" gradientUnits="userSpaceOnUse" x1="846.1" y1="419.5" x2="1405.6" y2="717.6"><stop offset="0.00" stop-opacity="0.05"/><stop offset="0.34" stop-opacity="0.08"/><stop offset="1.00" stop-opacity="0.15"/></linearGradient><linearGradient id="g322" class="fn" gradientUnits="userSpaceOnUse" x1="674.5" y1="835.0" x2="1376.2" y2="636.0"><stop offset="0.00" stop-opacity="0.28"/><stop offset="0.58" stop-opacity="0.22"/><stop offset="1.00" stop-opacity="0.17"/></linearGradient><linearGradient id="g323" class="fn" gradientUnits="userSpaceOnUse" x1="848.7" y1="419.2" x2="1409.6" y2="716.3"><stop offset="0.00" stop-opacity="0.05"/><stop offset="0.34" stop-opacity="0.08"/><stop offset="1.00" stop-opacity="0.15"/></linearGradient><linearGradient id="g324" class="fn" gradientUnits="userSpaceOnUse" x1="693.7" y1="834.4" x2="1380.9" y2="638.3"><stop offset="0.00" stop-opacity="0.28"/><stop offset="0.58" stop-opacity="0.22"/><stop offset="1.00" stop-opacity="0.17"/></linearGradient><linearGradient id="g325" class="fn" gradientUnits="userSpaceOnUse" x1="854.0" y1="418.5" x2="1417.5" y2="713.6"><stop offset="0.00" stop-opacity="0.05"/><stop offset="0.34" stop-opacity="0.08"/><stop offset="1.00" stop-opacity="0.14"/></linearGradient><linearGradient id="g326" class="fn" gradientUnits="userSpaceOnUse" x1="728.7" y1="834.3" x2="1390.4" y2="642.7"><stop offset="0.00" stop-opacity="0.29"/><stop offset="0.58" stop-opacity="0.22"/><stop offset="1.00" stop-opacity="0.18"/></linearGradient><linearGradient id="g327" class="fn" gradientUnits="userSpaceOnUse" x1="856.7" y1="418.2" x2="1421.5" y2="712.3"><stop offset="0.00" stop-opacity="0.05"/><stop offset="0.34" stop-opacity="0.08"/><stop offset="1.00" stop-opacity="0.14"/></linearGradient><linearGradient id="g328" class="fn" gradientUnits="userSpaceOnUse" x1="744.6" y1="834.7" x2="1395.2" y2="645.0"><stop offset="0.00" stop-opacity="0.29"/><stop offset="0.58" stop-opacity="0.23"/><stop offset="1.00" stop-opacity="0.18"/></linearGradient><linearGradient id="g329" class="fn" gradientUnits="userSpaceOnUse" x1="859.3" y1="417.9" x2="1422.6" y2="709.6"><stop offset="0.00" stop-opacity="0.05"/><stop offset="0.34" stop-opacity="0.08"/><stop offset="1.00" stop-opacity="0.14"/></linearGradient><linearGradient id="g330" class="fn" gradientUnits="userSpaceOnUse" x1="763.7" y1="834.1" x2="1400.1" y2="647.3"><stop offset="0.00" stop-opacity="0.29"/><stop offset="0.58" stop-opacity="0.23"/><stop offset="1.00" stop-opacity="0.19"/></linearGradient><linearGradient id="g331" class="fn" gradientUnits="userSpaceOnUse" x1="861.9" y1="417.5" x2="1423.7" y2="706.8"><stop offset="0.00" stop-opacity="0.05"/><stop offset="0.34" stop-opacity="0.08"/><stop offset="1.00" stop-opacity="0.14"/></linearGradient><linearGradient id="g332" class="fn" gradientUnits="userSpaceOnUse" x1="779.6" y1="834.5" x2="1405.0" y2="649.6"><stop offset="0.00" stop-opacity="0.30"/><stop offset="0.57" stop-opacity="0.23"/><stop offset="1.00" stop-opacity="0.19"/></linearGradient><linearGradient id="g333" class="fn" gradientUnits="userSpaceOnUse" x1="864.5" y1="417.2" x2="1424.8" y2="704.1"><stop offset="0.00" stop-opacity="0.05"/><stop offset="0.34" stop-opacity="0.08"/><stop offset="1.00" stop-opacity="0.14"/></linearGradient><linearGradient id="g334" class="fn" gradientUnits="userSpaceOnUse" x1="795.5" y1="834.9" x2="1409.9" y2="652.0"><stop offset="0.00" stop-opacity="0.30"/><stop offset="0.57" stop-opacity="0.24"/><stop offset="1.00" stop-opacity="0.19"/></linearGradient><linearGradient id="g335" class="fn" gradientUnits="userSpaceOnUse" x1="867.1" y1="416.9" x2="1423.2" y2="700.1"><stop offset="0.00" stop-opacity="0.05"/><stop offset="0.34" stop-opacity="0.07"/><stop offset="1.00" stop-opacity="0.13"/></linearGradient><linearGradient id="g336" class="fn" gradientUnits="userSpaceOnUse" x1="814.6" y1="834.4" x2="1414.9" y2="654.3"><stop offset="0.00" stop-opacity="0.30"/><stop offset="0.57" stop-opacity="0.24"/><stop offset="1.00" stop-opacity="0.20"/></linearGradient><linearGradient id="g337" class="fn" gradientUnits="userSpaceOnUse" x1="869.7" y1="416.5" x2="1424.3" y2="697.4"><stop offset="0.00" stop-opacity="0.05"/><stop offset="0.34" stop-opacity="0.07"/><stop offset="1.00" stop-opacity="0.13"/></linearGradient><linearGradient id="g338" class="fn" gradientUnits="userSpaceOnUse" x1="830.6" y1="834.8" x2="1419.9" y2="656.7"><stop offset="0.00" stop-opacity="0.31"/><stop offset="0.57" stop-opacity="0.24"/><stop offset="1.00" stop-opacity="0.20"/></linearGradient><linearGradient id="g339" class="fn" gradientUnits="userSpaceOnUse" x1="872.3" y1="416.2" x2="1422.7" y2="693.4"><stop offset="0.00" stop-opacity="0.05"/><stop offset="0.34" stop-opacity="0.07"/><stop offset="1.00" stop-opacity="0.13"/></linearGradient><linearGradient id="g340" class="fn" gradientUnits="userSpaceOnUse" x1="849.6" y1="834.2" x2="1425.0" y2="659.1"><stop offset="0.00" stop-opacity="0.31"/><stop offset="0.57" stop-opacity="0.25"/><stop offset="1.00" stop-opacity="0.20"/></linearGradient><linearGradient id="g341" class="fn" gradientUnits="userSpaceOnUse" x1="874.9" y1="415.9" x2="1423.8" y2="690.9"><stop offset="0.00" stop-opacity="0.05"/><stop offset="0.34" stop-opacity="0.07"/><stop offset="1.00" stop-opacity="0.13"/></linearGradient><linearGradient id="g342" class="fn" gradientUnits="userSpaceOnUse" x1="865.6" y1="834.6" x2="1424.7" y2="663.2"><stop offset="0.00" stop-opacity="0.31"/><stop offset="0.57" stop-opacity="0.25"/><stop offset="1.00" stop-opacity="0.21"/></linearGradient><linearGradient id="g343" class="fn" gradientUnits="userSpaceOnUse" x1="880.1" y1="415.2" x2="1423.3" y2="684.5"><stop offset="0.00" stop-opacity="0.05"/><stop offset="0.34" stop-opacity="0.07"/><stop offset="1.00" stop-opacity="0.12"/></linearGradient><linearGradient id="g344" class="fn" gradientUnits="userSpaceOnUse" x1="900.5" y1="834.4" x2="1424.2" y2="671.5"><stop offset="0.00" stop-opacity="0.32"/><stop offset="0.56" stop-opacity="0.26"/><stop offset="1.00" stop-opacity="0.22"/></linearGradient><linearGradient id="g345" class="fn" gradientUnits="userSpaceOnUse" x1="882.6" y1="414.9" x2="1424.4" y2="682.0"><stop offset="0.00" stop-opacity="0.05"/><stop offset="0.35" stop-opacity="0.07"/><stop offset="1.00" stop-opacity="0.12"/></linearGradient><linearGradient id="g346" class="fn" gradientUnits="userSpaceOnUse" x1="916.5" y1="834.8" x2="1423.9" y2="675.7"><stop offset="0.00" stop-opacity="0.32"/><stop offset="0.56" stop-opacity="0.26"/><stop offset="1.00" stop-opacity="0.22"/></linearGradient><linearGradient id="g347" class="fn" gradientUnits="userSpaceOnUse" x1="885.2" y1="414.6" x2="1422.8" y2="678.2"><stop offset="0.00" stop-opacity="0.05"/><stop offset="0.35" stop-opacity="0.07"/><stop offset="1.00" stop-opacity="0.12"/></linearGradient><linearGradient id="g348" class="fn" gradientUnits="userSpaceOnUse" x1="935.5" y1="834.3" x2="1423.6" y2="680.1"><stop offset="0.00" stop-opacity="0.33"/><stop offset="0.56" stop-opacity="0.27"/><stop offset="1.00" stop-opacity="0.23"/></linearGradient><linearGradient id="g349" class="fn" gradientUnits="userSpaceOnUse" x1="887.8" y1="414.2" x2="1423.9" y2="675.7"><stop offset="0.00" stop-opacity="0.05"/><stop offset="0.35" stop-opacity="0.07"/><stop offset="1.00" stop-opacity="0.12"/></linearGradient><linearGradient id="g350" class="fn" gradientUnits="userSpaceOnUse" x1="951.5" y1="834.7" x2="1423.3" y2="684.5"><stop offset="0.00" stop-opacity="0.33"/><stop offset="0.56" stop-opacity="0.27"/><stop offset="1.00" stop-opacity="0.23"/></linearGradient><linearGradient id="g351" class="fn" gradientUnits="userSpaceOnUse" x1="890.3" y1="413.9" x2="1424.9" y2="673.3"><stop offset="0.00" stop-opacity="0.05"/><stop offset="0.35" stop-opacity="0.07"/><stop offset="1.00" stop-opacity="0.12"/></linearGradient><linearGradient id="g352" class="fn" gradientUnits="userSpaceOnUse" x1="970.4" y1="834.1" x2="1424.9" y2="688.3"><stop offset="0.00" stop-opacity="0.33"/><stop offset="0.56" stop-opacity="0.28"/><stop offset="1.00" stop-opacity="0.24"/></linearGradient><linearGradient id="g353" class="fn" gradientUnits="userSpaceOnUse" x1="892.9" y1="413.6" x2="1423.4" y2="669.7"><stop offset="0.00" stop-opacity="0.05"/><stop offset="0.35" stop-opacity="0.07"/><stop offset="1.00" stop-opacity="0.12"/></linearGradient><linearGradient id="g354" class="fn" gradientUnits="userSpaceOnUse" x1="986.4" y1="834.5" x2="1424.6" y2="692.8"><stop offset="0.00" stop-opacity="0.34"/><stop offset="0.56" stop-opacity="0.28"/><stop offset="1.00" stop-opacity="0.24"/></linearGradient><linearGradient id="g355" class="fn" gradientUnits="userSpaceOnUse" x1="895.4" y1="413.3" x2="1424.4" y2="667.3"><stop offset="0.00" stop-opacity="0.05"/><stop offset="0.35" stop-opacity="0.07"/><stop offset="1.00" stop-opacity="0.11"/></linearGradient><linearGradient id="g356" class="fn" gradientUnits="userSpaceOnUse" x1="1002.4" y1="834.9" x2="1424.3" y2="697.4"><stop offset="0.00" stop-opacity="0.34"/><stop offset="0.55" stop-opacity="0.29"/><stop offset="1.00" stop-opacity="0.25"/></linearGradient><linearGradient id="g357" class="fn" gradientUnits="userSpaceOnUse" x1="897.9" y1="412.9" x2="1422.9" y2="663.7"><stop offset="0.00" stop-opacity="0.04"/><stop offset="0.35" stop-opacity="0.07"/><stop offset="1.00" stop-opacity="0.11"/></linearGradient><linearGradient id="g358" class="fn" gradientUnits="userSpaceOnUse" x1="1021.4" y1="834.4" x2="1424.0" y2="702.1"><stop offset="0.00" stop-opacity="0.34"/><stop offset="0.55" stop-opacity="0.29"/><stop offset="1.00" stop-opacity="0.25"/></linearGradient><linearGradient id="g359" class="fn" gradientUnits="userSpaceOnUse" x1="900.5" y1="412.6" x2="1423.9" y2="661.4"><stop offset="0.00" stop-opacity="0.04"/><stop offset="0.35" stop-opacity="0.07"/><stop offset="1.00" stop-opacity="0.11"/></linearGradient><linearGradient id="g360" class="fn" gradientUnits="userSpaceOnUse" x1="1037.4" y1="834.8" x2="1423.7" y2="706.8"><stop offset="0.00" stop-opacity="0.35"/><stop offset="0.55" stop-opacity="0.30"/><stop offset="1.00" stop-opacity="0.26"/></linearGradient><linearGradient id="g361" class="mj" gradientUnits="userSpaceOnUse" x1="296.5" y1="489.4" x2="314.5" y2="834.2"><stop offset="0.00" stop-opacity="0.34"/><stop offset="0.34" stop-opacity="0.45"/><stop offset="1.00" stop-opacity="0.66"/></linearGradient><linearGradient id="g362" class="mj" gradientUnits="userSpaceOnUse" x1="254.8" y1="506.7" x2="918.5" y2="419.6"><stop offset="0.00" stop-opacity="0.09"/><stop offset="0.56" stop-opacity="0.08"/><stop offset="1.00" stop-opacity="0.06"/></linearGradient><linearGradient id="g363" class="mj" gradientUnits="userSpaceOnUse" x1="336.3" y1="484.3" x2="392.7" y2="834.1"><stop offset="0.00" stop-opacity="0.34"/><stop offset="0.34" stop-opacity="0.45"/><stop offset="1.00" stop-opacity="0.66"/></linearGradient><linearGradient id="g364" class="mj" gradientUnits="userSpaceOnUse" x1="254.1" y1="519.6" x2="934.8" y2="427.3"><stop offset="0.00" stop-opacity="0.10"/><stop offset="0.57" stop-opacity="0.08"/><stop offset="1.00" stop-opacity="0.07"/></linearGradient><linearGradient id="g365" class="mj" gradientUnits="userSpaceOnUse" x1="375.0" y1="479.4" x2="470.9" y2="834.0"><stop offset="0.00" stop-opacity="0.33"/><stop offset="0.34" stop-opacity="0.44"/><stop offset="1.00" stop-opacity="0.66"/></linearGradient><linearGradient id="g366" class="mj" gradientUnits="userSpaceOnUse" x1="253.3" y1="533.4" x2="952.0" y2="435.5"><stop offset="0.00" stop-opacity="0.11"/><stop offset="0.57" stop-opacity="0.09"/><stop offset="1.00" stop-opacity="0.08"/></linearGradient><linearGradient id="g367" class="mj" gradientUnits="userSpaceOnUse" x1="412.7" y1="474.6" x2="548.9" y2="833.9"><stop offset="0.00" stop-opacity="0.33"/><stop offset="0.33" stop-opacity="0.44"/><stop offset="1.00" stop-opacity="0.66"/></linearGradient><linearGradient id="g368" class="mj" gradientUnits="userSpaceOnUse" x1="252.5" y1="548.2" x2="970.1" y2="444.0"><stop offset="0.00" stop-opacity="0.13"/><stop offset="0.57" stop-opacity="0.10"/><stop offset="1.00" stop-opacity="0.08"/></linearGradient><linearGradient id="g369" class="mj" gradientUnits="userSpaceOnUse" x1="449.5" y1="469.9" x2="627.0" y2="833.8"><stop offset="0.00" stop-opacity="0.33"/><stop offset="0.33" stop-opacity="0.44"/><stop offset="1.00" stop-opacity="0.66"/></linearGradient><linearGradient id="g370" class="mj" gradientUnits="userSpaceOnUse" x1="251.6" y1="564.1" x2="989.1" y2="453.0"><stop offset="0.00" stop-opacity="0.14"/><stop offset="0.57" stop-opacity="0.11"/><stop offset="1.00" stop-opacity="0.09"/></linearGradient><linearGradient id="g371" class="mj" gradientUnits="userSpaceOnUse" x1="485.2" y1="465.4" x2="704.9" y2="833.7"><stop offset="0.00" stop-opacity="0.32"/><stop offset="0.33" stop-opacity="0.43"/><stop offset="1.00" stop-opacity="0.66"/></linearGradient><linearGradient id="g372" class="mj" gradientUnits="userSpaceOnUse" x1="250.6" y1="581.1" x2="1009.3" y2="462.5"><stop offset="0.00" stop-opacity="0.16"/><stop offset="0.57" stop-opacity="0.12"/><stop offset="1.00" stop-opacity="0.10"/></linearGradient><linearGradient id="g373" class="mj" gradientUnits="userSpaceOnUse" x1="520.0" y1="461.0" x2="782.9" y2="833.6"><stop offset="0.00" stop-opacity="0.32"/><stop offset="0.32" stop-opacity="0.43"/><stop offset="1.00" stop-opacity="0.66"/></linearGradient><linearGradient id="g374" class="mj" gradientUnits="userSpaceOnUse" x1="249.6" y1="599.6" x2="1030.6" y2="472.6"><stop offset="0.00" stop-opacity="0.17"/><stop offset="0.58" stop-opacity="0.14"/><stop offset="1.00" stop-opacity="0.11"/></linearGradient><linearGradient id="g375" class="mj" gradientUnits="userSpaceOnUse" x1="554.0" y1="456.7" x2="860.7" y2="833.4"><stop offset="0.00" stop-opacity="0.31"/><stop offset="0.32" stop-opacity="0.42"/><stop offset="1.00" stop-opacity="0.66"/></linearGradient><linearGradient id="g376" class="mj" gradientUnits="userSpaceOnUse" x1="248.4" y1="619.5" x2="1053.2" y2="483.3"><stop offset="0.00" stop-opacity="0.20"/><stop offset="0.58" stop-opacity="0.15"/><stop offset="1.00" stop-opacity="0.12"/></linearGradient><linearGradient id="g377" class="mj" gradientUnits="userSpaceOnUse" x1="587.1" y1="452.5" x2="938.5" y2="833.3"><stop offset="0.00" stop-opacity="0.31"/><stop offset="0.32" stop-opacity="0.42"/><stop offset="1.00" stop-opacity="0.66"/></linearGradient><linearGradient id="g378" class="mj" gradientUnits="userSpaceOnUse" x1="247.2" y1="641.2" x2="1077.2" y2="494.7"><stop offset="0.00" stop-opacity="0.22"/><stop offset="0.58" stop-opacity="0.17"/><stop offset="1.00" stop-opacity="0.14"/></linearGradient><linearGradient id="g379" class="mj" gradientUnits="userSpaceOnUse" x1="619.4" y1="448.4" x2="1016.3" y2="833.2"><stop offset="0.00" stop-opacity="0.31"/><stop offset="0.32" stop-opacity="0.42"/><stop offset="1.00" stop-opacity="0.66"/></linearGradient><linearGradient id="g380" class="mj" gradientUnits="userSpaceOnUse" x1="245.9" y1="664.8" x2="1102.7" y2="506.7"><stop offset="0.00" stop-opacity="0.25"/><stop offset="0.59" stop-opacity="0.19"/><stop offset="1.00" stop-opacity="0.15"/></linearGradient><linearGradient id="g381" class="mj" gradientUnits="userSpaceOnUse" x1="650.9" y1="444.3" x2="1084.5" y2="824.8"><stop offset="0.00" stop-opacity="0.31"/><stop offset="0.32" stop-opacity="0.42"/><stop offset="1.00" stop-opacity="0.66"/></linearGradient><linearGradient id="g382" class="mj" gradientUnits="userSpaceOnUse" x1="244.4" y1="690.6" x2="1129.9" y2="519.6"><stop offset="0.00" stop-opacity="0.29"/><stop offset="0.59" stop-opacity="0.22"/><stop offset="1.00" stop-opacity="0.17"/></linearGradient><linearGradient id="g383" class="mj" gradientUnits="userSpaceOnUse" x1="681.6" y1="440.4" x2="1138.8" y2="806.7"><stop offset="0.00" stop-opacity="0.31"/><stop offset="0.32" stop-opacity="0.42"/><stop offset="1.00" stop-opacity="0.66"/></linearGradient><linearGradient id="g384" class="mj" gradientUnits="userSpaceOnUse" x1="242.8" y1="719.0" x2="1159.0" y2="533.3"><stop offset="0.00" stop-opacity="0.33"/><stop offset="0.59" stop-opacity="0.25"/><stop offset="1.00" stop-opacity="0.19"/></linearGradient><linearGradient id="g385" class="mj" gradientUnits="userSpaceOnUse" x1="711.6" y1="436.6" x2="1190.3" y2="789.5"><stop offset="0.00" stop-opacity="0.20"/><stop offset="0.32" stop-opacity="0.32"/><stop offset="1.00" stop-opacity="0.61"/></linearGradient><linearGradient id="g386" class="mj" gradientUnits="userSpaceOnUse" x1="241.0" y1="750.3" x2="1190.1" y2="548.0"><stop offset="0.00" stop-opacity="0.39"/><stop offset="0.60" stop-opacity="0.28"/><stop offset="1.00" stop-opacity="0.22"/></linearGradient><linearGradient id="g387" class="mj" gradientUnits="userSpaceOnUse" x1="740.9" y1="432.9" x2="1239.3" y2="773.1"><stop offset="0.00" stop-opacity="0.18"/><stop offset="0.33" stop-opacity="0.29"/><stop offset="1.00" stop-opacity="0.55"/></linearGradient><linearGradient id="g388" class="mj" gradientUnits="userSpaceOnUse" x1="239.1" y1="785.1" x2="1223.5" y2="563.8"><stop offset="0.00" stop-opacity="0.45"/><stop offset="0.60" stop-opacity="0.32"/><stop offset="1.00" stop-opacity="0.25"/></linearGradient><linearGradient id="g389" class="mj" gradientUnits="userSpaceOnUse" x1="769.5" y1="429.3" x2="1286.0" y2="757.5"><stop offset="0.00" stop-opacity="0.17"/><stop offset="0.33" stop-opacity="0.26"/><stop offset="1.00" stop-opacity="0.49"/></linearGradient><linearGradient id="g390" class="mj" gradientUnits="userSpaceOnUse" x1="236.9" y1="823.9" x2="1259.4" y2="580.8"><stop offset="0.00" stop-opacity="0.53"/><stop offset="0.60" stop-opacity="0.37"/><stop offset="1.00" stop-opacity="0.28"/></linearGradient><linearGradient id="g391" class="mj" gradientUnits="userSpaceOnUse" x1="797.4" y1="425.7" x2="1330.5" y2="742.7"><stop offset="0.00" stop-opacity="0.15"/><stop offset="0.33" stop-opacity="0.24"/><stop offset="1.00" stop-opacity="0.44"/></linearGradient><linearGradient id="g392" class="mj" gradientUnits="userSpaceOnUse" x1="365.4" y1="834.5" x2="1298.2" y2="599.1"><stop offset="0.00" stop-opacity="0.59"/><stop offset="0.60" stop-opacity="0.43"/><stop offset="1.00" stop-opacity="0.32"/></linearGradient><linearGradient id="g393" class="mj" gradientUnits="userSpaceOnUse" x1="824.7" y1="422.3" x2="1373.0" y2="728.5"><stop offset="0.00" stop-opacity="0.14"/><stop offset="0.33" stop-opacity="0.22"/><stop offset="1.00" stop-opacity="0.40"/></linearGradient><linearGradient id="g394" class="mj" gradientUnits="userSpaceOnUse" x1="537.5" y1="834.6" x2="1340.1" y2="619.0"><stop offset="0.00" stop-opacity="0.65"/><stop offset="0.59" stop-opacity="0.48"/><stop offset="1.00" stop-opacity="0.38"/></linearGradient><linearGradient id="g395" class="mj" gradientUnits="userSpaceOnUse" x1="851.4" y1="418.9" x2="1413.6" y2="715.0"><stop offset="0.00" stop-opacity="0.13"/><stop offset="0.34" stop-opacity="0.20"/><stop offset="1.00" stop-opacity="0.36"/></linearGradient><linearGradient id="g396" class="mj" gradientUnits="userSpaceOnUse" x1="709.5" y1="834.8" x2="1385.6" y2="640.5"><stop offset="0.00" stop-opacity="0.66"/><stop offset="0.58" stop-opacity="0.56"/><stop offset="1.00" stop-opacity="0.48"/></linearGradient><linearGradient id="g397" class="mj" gradientUnits="userSpaceOnUse" x1="877.5" y1="415.5" x2="1424.9" y2="688.3"><stop offset="0.00" stop-opacity="0.12"/><stop offset="0.34" stop-opacity="0.18"/><stop offset="1.00" stop-opacity="0.31"/></linearGradient><linearGradient id="g398" class="mj" gradientUnits="userSpaceOnUse" x1="881.5" y1="835.0" x2="1424.4" y2="667.3"><stop offset="0.00" stop-opacity="0.66"/><stop offset="0.57" stop-opacity="0.57"/><stop offset="1.00" stop-opacity="0.50"/></linearGradient></defs>
<g fill="none"><path d="M259.6,494.1L244.1,834.5" stroke="url(#g1)" stroke-width="1.41"/><path d="M255.4,495.8L904.5,413.0" stroke="url(#g2)" stroke-width="1.00"/><path d="M263.8,493.5L251.9,834.7" stroke="url(#g3)" stroke-width="1.41"/><path d="M255.4,497.0L906.0,413.7" stroke="url(#g4)" stroke-width="1.00"/><path d="M267.9,493.0L259.7,834.9" stroke="url(#g5)" stroke-width="1.41"/><path d="M255.3,498.2L907.6,414.5" stroke="url(#g6)" stroke-width="1.00"/><path d="M272.0,492.5L267.6,833.0" stroke="url(#g7)" stroke-width="1.41"/><path d="M255.2,499.4L909.1,415.2" stroke="url(#g8)" stroke-width="1.00"/><path d="M276.1,492.0L275.4,833.2" stroke="url(#g9)" stroke-width="1.41"/><path d="M255.2,500.6L910.7,415.9" stroke="url(#g10)" stroke-width="1.00"/><path d="M280.2,491.5L283.2,833.4" stroke="url(#g11)" stroke-width="1.41"/><path d="M255.1,501.8L912.2,416.7" stroke="url(#g12)" stroke-width="1.00"/><path d="M284.3,490.9L291.0,833.6" stroke="url(#g13)" stroke-width="1.41"/><path d="M255.0,503.0L913.8,417.4" stroke="url(#g14)" stroke-width="1.00"/><path d="M288.4,490.4L298.9,833.8" stroke="url(#g15)" stroke-width="1.41"/><path d="M255.0,504.2L915.4,418.1" stroke="url(#g16)" stroke-width="1.00"/><path d="M292.4,489.9L306.7,834.0" stroke="url(#g17)" stroke-width="1.41"/><path d="M254.9,505.5L916.9,418.9" stroke="url(#g18)" stroke-width="1.00"/><path d="M300.5,488.9L322.4,834.4" stroke="url(#g19)" stroke-width="1.41"/><path d="M254.7,508.0L920.1,420.4" stroke="url(#g20)" stroke-width="1.00"/><path d="M304.5,488.4L330.2,834.6" stroke="url(#g21)" stroke-width="1.40"/><path d="M254.7,509.2L921.7,421.1" stroke="url(#g22)" stroke-width="1.00"/><path d="M308.5,487.9L338.0,834.8" stroke="url(#g23)" stroke-width="1.40"/><path d="M254.6,510.5L923.3,421.9" stroke="url(#g24)" stroke-width="1.00"/><path d="M312.5,487.4L345.7,832.9" stroke="url(#g25)" stroke-width="1.40"/><path d="M254.5,511.8L924.9,422.7" stroke="url(#g26)" stroke-width="1.00"/><path d="M316.5,486.8L353.5,833.1" stroke="url(#g27)" stroke-width="1.40"/><path d="M254.5,513.1L926.6,423.4" stroke="url(#g28)" stroke-width="1.00"/><path d="M320.5,486.3L361.3,833.3" stroke="url(#g29)" stroke-width="1.40"/><path d="M254.4,514.4L928.2,424.2" stroke="url(#g30)" stroke-width="1.00"/><path d="M324.5,485.8L369.2,833.5" stroke="url(#g31)" stroke-width="1.39"/><path d="M254.3,515.7L929.8,425.0" stroke="url(#g32)" stroke-width="1.00"/><path d="M328.4,485.3L377.0,833.7" stroke="url(#g33)" stroke-width="1.39"/><path d="M254.2,517.0L931.5,425.8" stroke="url(#g34)" stroke-width="1.00"/><path d="M332.3,484.8L384.9,833.9" stroke="url(#g35)" stroke-width="1.39"/><path d="M254.2,518.3L933.2,426.6" stroke="url(#g36)" stroke-width="1.00"/><path d="M340.2,483.8L400.6,834.3" stroke="url(#g37)" stroke-width="1.39"/><path d="M254.0,521.0L936.5,428.1" stroke="url(#g38)" stroke-width="1.00"/><path d="M344.1,483.3L408.4,834.5" stroke="url(#g39)" stroke-width="1.38"/><path d="M253.9,522.3L938.2,428.9" stroke="url(#g40)" stroke-width="1.00"/><path d="M348.0,482.8L416.3,834.7" stroke="url(#g41)" stroke-width="1.38"/><path d="M253.9,523.7L939.9,429.7" stroke="url(#g42)" stroke-width="1.00"/><path d="M351.9,482.3L424.1,834.9" stroke="url(#g43)" stroke-width="1.38"/><path d="M253.8,525.0L941.6,430.5" stroke="url(#g44)" stroke-width="1.00"/><path d="M355.8,481.9L431.6,833.0" stroke="url(#g45)" stroke-width="1.37"/><path d="M253.7,526.4L943.3,431.3" stroke="url(#g46)" stroke-width="1.00"/><path d="M359.7,481.4L439.4,833.2" stroke="url(#g47)" stroke-width="1.37"/><path d="M253.6,527.8L945.0,432.2" stroke="url(#g48)" stroke-width="1.00"/><path d="M363.5,480.9L447.3,833.4" stroke="url(#g49)" stroke-width="1.37"/><path d="M253.5,529.2L946.7,433.0" stroke="url(#g50)" stroke-width="1.00"/><path d="M367.4,480.4L455.1,833.6" stroke="url(#g51)" stroke-width="1.36"/><path d="M253.5,530.6L948.5,433.8" stroke="url(#g52)" stroke-width="1.00"/><path d="M371.2,479.9L463.0,833.8" stroke="url(#g53)" stroke-width="1.36"/><path d="M253.4,532.0L950.2,434.6" stroke="url(#g54)" stroke-width="1.00"/><path d="M378.8,478.9L478.7,834.2" stroke="url(#g55)" stroke-width="1.35"/><path d="M253.2,534.9L953.7,436.3" stroke="url(#g56)" stroke-width="1.00"/><path d="M382.7,478.4L486.6,834.4" stroke="url(#g57)" stroke-width="1.35"/><path d="M253.1,536.3L955.5,437.1" stroke="url(#g58)" stroke-width="1.00"/><path d="M386.5,478.0L494.5,834.6" stroke="url(#g59)" stroke-width="1.35"/><path d="M253.1,537.8L957.3,438.0" stroke="url(#g60)" stroke-width="1.00"/><path d="M390.2,477.5L502.4,834.8" stroke="url(#g61)" stroke-width="1.34"/><path d="M253.0,539.2L959.1,438.8" stroke="url(#g62)" stroke-width="1.00"/><path d="M394.0,477.0L509.6,832.9" stroke="url(#g63)" stroke-width="1.34"/><path d="M252.9,540.7L960.9,439.7" stroke="url(#g64)" stroke-width="1.00"/><path d="M397.8,476.5L517.4,833.1" stroke="url(#g65)" stroke-width="1.33"/><path d="M252.8,542.2L962.7,440.5" stroke="url(#g66)" stroke-width="1.00"/><path d="M401.5,476.0L525.3,833.3" stroke="url(#g67)" stroke-width="1.33"/><path d="M252.7,543.7L964.5,441.4" stroke="url(#g68)" stroke-width="1.00"/><path d="M405.3,475.6L533.2,833.5" stroke="url(#g69)" stroke-width="1.32"/><path d="M252.6,545.2L966.4,442.3" stroke="url(#g70)" stroke-width="1.00"/><path d="M409.0,475.1L541.0,833.7" stroke="url(#g71)" stroke-width="1.32"/><path d="M252.6,546.7L968.2,443.1" stroke="url(#g72)" stroke-width="1.00"/><path d="M416.5,474.1L556.8,834.1" stroke="url(#g73)" stroke-width="1.31"/><path d="M252.4,549.7L971.9,444.9" stroke="url(#g74)" stroke-width="1.00"/><path d="M420.2,473.7L564.7,834.3" stroke="url(#g75)" stroke-width="1.31"/><path d="M252.3,551.3L973.8,445.8" stroke="url(#g76)" stroke-width="1.00"/><path d="M423.9,473.2L572.6,834.5" stroke="url(#g77)" stroke-width="1.30"/><path d="M252.2,552.8L975.7,446.7" stroke="url(#g78)" stroke-width="1.00"/><path d="M427.5,472.7L580.5,834.7" stroke="url(#g79)" stroke-width="1.30"/><path d="M252.1,554.4L977.6,447.5" stroke="url(#g80)" stroke-width="1.00"/><path d="M431.2,472.3L588.4,834.9" stroke="url(#g81)" stroke-width="1.29"/><path d="M252.0,556.0L979.5,448.4" stroke="url(#g82)" stroke-width="1.00"/><path d="M434.9,471.8L595.4,833.0" stroke="url(#g83)" stroke-width="1.28"/><path d="M251.9,557.6L981.4,449.4" stroke="url(#g84)" stroke-width="1.00"/><path d="M438.5,471.3L603.3,833.2" stroke="url(#g85)" stroke-width="1.28"/><path d="M251.8,559.2L983.3,450.3" stroke="url(#g86)" stroke-width="1.00"/><path d="M442.2,470.9L611.2,833.4" stroke="url(#g87)" stroke-width="1.27"/><path d="M251.8,560.8L985.2,451.2" stroke="url(#g88)" stroke-width="1.00"/><path d="M445.8,470.4L619.1,833.6" stroke="url(#g89)" stroke-width="1.27"/><path d="M251.7,562.4L987.2,452.1" stroke="url(#g90)" stroke-width="1.00"/><path d="M453.1,469.5L634.9,834.0" stroke="url(#g91)" stroke-width="1.26"/><path d="M251.5,565.7L991.1,453.9" stroke="url(#g92)" stroke-width="1.00"/><path d="M456.7,469.0L642.8,834.2" stroke="url(#g93)" stroke-width="1.25"/><path d="M251.4,567.4L993.1,454.9" stroke="url(#g94)" stroke-width="1.00"/><path d="M460.3,468.6L650.7,834.4" stroke="url(#g95)" stroke-width="1.25"/><path d="M251.3,569.1L995.0,455.8" stroke="url(#g96)" stroke-width="1.00"/><path d="M463.9,468.1L658.6,834.6" stroke="url(#g97)" stroke-width="1.24"/><path d="M251.2,570.7L997.0,456.8" stroke="url(#g98)" stroke-width="1.00"/><path d="M467.4,467.7L666.5,834.8" stroke="url(#g99)" stroke-width="1.24"/><path d="M251.1,572.4L999.1,457.7" stroke="url(#g100)" stroke-width="1.00"/><path d="M471.0,467.2L674.5,835.0" stroke="url(#g101)" stroke-width="1.23"/><path d="M251.0,574.2L1001.1,458.7" stroke="url(#g102)" stroke-width="1.00"/><path d="M474.6,466.8L681.2,833.1" stroke="url(#g103)" stroke-width="1.22"/><path d="M250.9,575.9L1003.1,459.6" stroke="url(#g104)" stroke-width="1.00"/><path d="M478.1,466.3L689.1,833.3" stroke="url(#g105)" stroke-width="1.22"/><path d="M250.8,577.6L1005.1,460.6" stroke="url(#g106)" stroke-width="1.00"/><path d="M481.7,465.9L697.0,833.5" stroke="url(#g107)" stroke-width="1.21"/><path d="M250.7,579.4L1007.2,461.6" stroke="url(#g108)" stroke-width="1.00"/><path d="M488.7,465.0L712.9,833.9" stroke="url(#g109)" stroke-width="1.20"/><path d="M250.5,582.9L1011.3,463.5" stroke="url(#g110)" stroke-width="1.00"/><path d="M492.2,464.5L720.8,834.1" stroke="url(#g111)" stroke-width="1.19"/><path d="M250.4,584.7L1013.4,464.5" stroke="url(#g112)" stroke-width="1.00"/><path d="M495.8,464.1L728.7,834.3" stroke="url(#g113)" stroke-width="1.19"/><path d="M250.3,586.5L1015.5,465.5" stroke="url(#g114)" stroke-width="1.00"/><path d="M499.3,463.6L736.6,834.5" stroke="url(#g115)" stroke-width="1.18"/><path d="M250.2,588.3L1017.6,466.5" stroke="url(#g116)" stroke-width="1.00"/><path d="M502.7,463.2L744.6,834.7" stroke="url(#g117)" stroke-width="1.18"/><path d="M250.1,590.2L1019.8,467.5" stroke="url(#g118)" stroke-width="1.00"/><path d="M506.2,462.7L752.5,834.9" stroke="url(#g119)" stroke-width="1.17"/><path d="M250.0,592.0L1021.9,468.5" stroke="url(#g120)" stroke-width="1.00"/><path d="M509.7,462.3L759.1,833.0" stroke="url(#g121)" stroke-width="1.16"/><path d="M249.9,593.9L1024.1,469.5" stroke="url(#g122)" stroke-width="1.00"/><path d="M513.1,461.9L767.0,833.2" stroke="url(#g123)" stroke-width="1.16"/><path d="M249.8,595.8L1026.2,470.6" stroke="url(#g124)" stroke-width="1.00"/><path d="M516.6,461.4L774.9,833.4" stroke="url(#g125)" stroke-width="1.15"/><path d="M249.7,597.7L1028.4,471.6" stroke="url(#g126)" stroke-width="1.00"/><path d="M523.5,460.5L790.8,833.8" stroke="url(#g127)" stroke-width="1.14"/><path d="M249.5,601.5L1032.8,473.7" stroke="url(#g128)" stroke-width="1.00"/><path d="M526.9,460.1L798.7,834.0" stroke="url(#g129)" stroke-width="1.14"/><path d="M249.3,603.4L1035.0,474.7" stroke="url(#g130)" stroke-width="1.00"/><path d="M530.3,459.7L806.7,834.2" stroke="url(#g131)" stroke-width="1.13"/><path d="M249.2,605.4L1037.2,475.8" stroke="url(#g132)" stroke-width="1.00"/><path d="M533.7,459.2L814.6,834.4" stroke="url(#g133)" stroke-width="1.12"/><path d="M249.1,607.3L1039.5,476.8" stroke="url(#g134)" stroke-width="1.00"/><path d="M537.1,458.8L822.6,834.6" stroke="url(#g135)" stroke-width="1.12"/><path d="M249.0,609.3L1041.7,477.9" stroke="url(#g136)" stroke-width="1.00"/><path d="M540.5,458.4L830.6,834.8" stroke="url(#g137)" stroke-width="1.11"/><path d="M248.9,611.3L1044.0,479.0" stroke="url(#g138)" stroke-width="1.00"/><path d="M543.9,457.9L838.5,835.0" stroke="url(#g139)" stroke-width="1.11"/><path d="M248.8,613.3L1046.3,480.0" stroke="url(#g140)" stroke-width="1.00"/><path d="M547.3,457.5L844.8,833.0" stroke="url(#g141)" stroke-width="1.10"/><path d="M248.7,615.4L1048.6,481.1" stroke="url(#g142)" stroke-width="1.00"/><path d="M550.6,457.1L852.8,833.2" stroke="url(#g143)" stroke-width="1.09"/><path d="M248.6,617.4L1050.9,482.2" stroke="url(#g144)" stroke-width="1.00"/><path d="M557.3,456.2L868.7,833.6" stroke="url(#g145)" stroke-width="1.08"/><path d="M248.3,621.6L1055.5,484.4" stroke="url(#g146)" stroke-width="1.00"/><path d="M560.7,455.8L876.6,833.8" stroke="url(#g147)" stroke-width="1.08"/><path d="M248.2,623.7L1057.9,485.5" stroke="url(#g148)" stroke-width="1.00"/><path d="M564.0,455.4L884.6,834.0" stroke="url(#g149)" stroke-width="1.07"/><path d="M248.1,625.8L1060.2,486.6" stroke="url(#g150)" stroke-width="1.00"/><path d="M567.3,455.0L892.6,834.2" stroke="url(#g151)" stroke-width="1.07"/><path d="M248.0,627.9L1062.6,487.8" stroke="url(#g152)" stroke-width="1.00"/><path d="M570.6,454.5L900.5,834.4" stroke="url(#g153)" stroke-width="1.06"/><path d="M247.8,630.1L1065.0,488.9" stroke="url(#g154)" stroke-width="1.00"/><path d="M574.0,454.1L908.5,834.6" stroke="url(#g155)" stroke-width="1.05"/><path d="M247.7,632.3L1067.4,490.0" stroke="url(#g156)" stroke-width="1.00"/><path d="M577.3,453.7L916.5,834.8" stroke="url(#g157)" stroke-width="1.05"/><path d="M247.6,634.5L1069.8,491.2" stroke="url(#g158)" stroke-width="1.00"/><path d="M580.5,453.3L922.6,832.9" stroke="url(#g159)" stroke-width="1.04"/><path d="M247.5,636.7L1072.3,492.3" stroke="url(#g160)" stroke-width="1.00"/><path d="M583.8,452.9L930.6,833.1" stroke="url(#g161)" stroke-width="1.04"/><path d="M247.3,638.9L1074.7,493.5" stroke="url(#g162)" stroke-width="1.00"/><path d="M590.4,452.0L946.5,833.5" stroke="url(#g163)" stroke-width="1.03"/><path d="M247.1,643.4L1079.7,495.8" stroke="url(#g164)" stroke-width="1.00"/><path d="M593.6,451.6L954.5,833.7" stroke="url(#g165)" stroke-width="1.02"/><path d="M246.9,645.7L1082.2,497.0" stroke="url(#g166)" stroke-width="1.00"/><path d="M596.9,451.2L962.5,833.9" stroke="url(#g167)" stroke-width="1.01"/><path d="M246.8,648.0L1084.7,498.2" stroke="url(#g168)" stroke-width="1.00"/><path d="M600.1,450.8L970.4,834.1" stroke="url(#g169)" stroke-width="1.01"/><path d="M246.7,650.4L1087.2,499.4" stroke="url(#g170)" stroke-width="1.00"/><path d="M603.3,450.4L978.4,834.3" stroke="url(#g171)" stroke-width="1.00"/><path d="M246.6,652.7L1089.7,500.6" stroke="url(#g172)" stroke-width="1.00"/><path d="M606.6,450.0L986.4,834.5" stroke="url(#g173)" stroke-width="1.00"/><path d="M246.4,655.1L1092.3,501.8" stroke="url(#g174)" stroke-width="1.00"/><path d="M609.8,449.6L994.4,834.7" stroke="url(#g175)" stroke-width="1.00"/><path d="M246.3,657.5L1094.9,503.0" stroke="url(#g176)" stroke-width="1.00"/><path d="M613.0,449.2L1002.4,834.9" stroke="url(#g177)" stroke-width="1.00"/><path d="M246.1,659.9L1097.5,504.2" stroke="url(#g178)" stroke-width="1.00"/><path d="M616.2,448.8L1008.3,833.0" stroke="url(#g179)" stroke-width="1.00"/><path d="M246.0,662.3L1100.1,505.5" stroke="url(#g180)" stroke-width="1.00"/><path d="M622.6,447.9L1024.3,833.4" stroke="url(#g181)" stroke-width="1.00"/><path d="M245.7,667.3L1105.4,508.0" stroke="url(#g182)" stroke-width="1.00"/><path d="M625.7,447.5L1032.3,833.6" stroke="url(#g183)" stroke-width="1.00"/><path d="M245.6,669.8L1108.0,509.2" stroke="url(#g184)" stroke-width="1.00"/><path d="M628.9,447.1L1040.3,833.8" stroke="url(#g185)" stroke-width="1.00"/><path d="M245.4,672.3L1110.7,510.5" stroke="url(#g186)" stroke-width="1.00"/><path d="M632.1,446.7L1048.3,834.0" stroke="url(#g187)" stroke-width="1.00"/><path d="M245.3,674.8L1113.4,511.8" stroke="url(#g188)" stroke-width="1.00"/><path d="M635.2,446.3L1056.3,834.2" stroke="url(#g189)" stroke-width="1.00"/><path d="M245.2,677.4L1116.1,513.1" stroke="url(#g190)" stroke-width="1.00"/><path d="M638.4,445.9L1062.0,832.3" stroke="url(#g191)" stroke-width="1.00"/><path d="M245.0,680.0L1118.8,514.3" stroke="url(#g192)" stroke-width="1.00"/><path d="M641.5,445.5L1067.7,830.4" stroke="url(#g193)" stroke-width="1.00"/><path d="M244.9,682.6L1121.6,515.6" stroke="url(#g194)" stroke-width="1.00"/><path d="M644.6,445.1L1073.3,828.5" stroke="url(#g195)" stroke-width="1.00"/><path d="M244.7,685.2L1124.3,516.9" stroke="url(#g196)" stroke-width="1.00"/><path d="M647.7,444.7L1078.9,826.7" stroke="url(#g197)" stroke-width="1.00"/><path d="M244.6,687.9L1127.1,518.3" stroke="url(#g198)" stroke-width="1.00"/><path d="M654.0,444.0L1090.1,822.9" stroke="url(#g199)" stroke-width="1.00"/><path d="M244.3,693.3L1132.7,520.9" stroke="url(#g200)" stroke-width="1.00"/><path d="M657.1,443.6L1095.6,821.1" stroke="url(#g201)" stroke-width="1.00"/><path d="M244.1,696.1L1135.6,522.3" stroke="url(#g202)" stroke-width="1.00"/><path d="M660.2,443.2L1101.1,819.3" stroke="url(#g203)" stroke-width="1.00"/><path d="M243.9,698.8L1138.4,523.6" stroke="url(#g204)" stroke-width="1.00"/><path d="M663.2,442.8L1106.6,817.4" stroke="url(#g205)" stroke-width="1.00"/><path d="M243.8,701.6L1141.3,525.0" stroke="url(#g206)" stroke-width="1.00"/><path d="M666.3,442.4L1112.0,815.6" stroke="url(#g207)" stroke-width="1.00"/><path d="M243.6,704.5L1144.2,526.3" stroke="url(#g208)" stroke-width="1.00"/><path d="M669.4,442.0L1117.4,813.8" stroke="url(#g209)" stroke-width="1.00"/><path d="M243.5,707.3L1147.1,527.7" stroke="url(#g210)" stroke-width="1.00"/><path d="M672.4,441.6L1122.8,812.0" stroke="url(#g211)" stroke-width="1.00"/><path d="M243.3,710.2L1150.1,529.1" stroke="url(#g212)" stroke-width="1.00"/><path d="M675.5,441.2L1128.1,810.2" stroke="url(#g213)" stroke-width="1.00"/><path d="M243.1,713.1L1153.0,530.5" stroke="url(#g214)" stroke-width="1.00"/><path d="M678.5,440.8L1133.5,808.4" stroke="url(#g215)" stroke-width="1.00"/><path d="M243.0,716.0L1156.0,531.9" stroke="url(#g216)" stroke-width="1.00"/><path d="M684.6,440.1L1144.1,804.9" stroke="url(#g217)" stroke-width="1.00"/><path d="M242.6,722.0L1162.0,534.8" stroke="url(#g218)" stroke-width="1.00"/><path d="M687.6,439.7L1149.3,803.2" stroke="url(#g219)" stroke-width="1.00"/><path d="M242.5,725.0L1165.0,536.2" stroke="url(#g220)" stroke-width="1.00"/><path d="M690.7,439.3L1154.5,801.4" stroke="url(#g221)" stroke-width="1.00"/><path d="M242.3,728.1L1168.1,537.6" stroke="url(#g222)" stroke-width="1.00"/><path d="M693.7,438.9L1159.7,799.7" stroke="url(#g223)" stroke-width="1.00"/><path d="M242.1,731.2L1171.2,539.1" stroke="url(#g224)" stroke-width="1.00"/><path d="M696.7,438.5L1164.9,798.0" stroke="url(#g225)" stroke-width="1.00"/><path d="M241.9,734.3L1174.3,540.6" stroke="url(#g226)" stroke-width="1.00"/><path d="M699.7,438.1L1170.0,796.2" stroke="url(#g227)" stroke-width="1.00"/><path d="M241.8,737.4L1177.4,542.0" stroke="url(#g228)" stroke-width="1.00"/><path d="M702.7,437.8L1175.1,794.5" stroke="url(#g229)" stroke-width="1.00"/><path d="M241.6,740.6L1180.5,543.5" stroke="url(#g230)" stroke-width="1.00"/><path d="M705.6,437.4L1180.2,792.8" stroke="url(#g231)" stroke-width="1.00"/><path d="M241.4,743.8L1183.7,545.0" stroke="url(#g232)" stroke-width="1.00"/><path d="M708.6,437.0L1185.3,791.1" stroke="url(#g233)" stroke-width="1.00"/><path d="M241.2,747.1L1186.9,546.5" stroke="url(#g234)" stroke-width="1.00"/><path d="M714.5,436.3L1195.3,787.8" stroke="url(#g235)" stroke-width="1.00"/><path d="M240.8,753.6L1193.3,549.6" stroke="url(#g236)" stroke-width="1.00"/><path d="M717.5,435.9L1200.3,786.1" stroke="url(#g237)" stroke-width="1.00"/><path d="M240.7,757.0L1196.6,551.1" stroke="url(#g238)" stroke-width="1.00"/><path d="M720.4,435.5L1205.3,784.5" stroke="url(#g239)" stroke-width="1.00"/><path d="M240.5,760.4L1199.9,552.7" stroke="url(#g240)" stroke-width="1.00"/><path d="M723.4,435.1L1210.2,782.8" stroke="url(#g241)" stroke-width="1.00"/><path d="M240.3,763.8L1203.2,554.2" stroke="url(#g242)" stroke-width="1.00"/><path d="M726.3,434.8L1215.1,781.2" stroke="url(#g243)" stroke-width="1.00"/><path d="M240.1,767.3L1206.5,555.8" stroke="url(#g244)" stroke-width="1.00"/><path d="M729.2,434.4L1220.0,779.6" stroke="url(#g245)" stroke-width="1.00"/><path d="M239.9,770.8L1209.8,557.4" stroke="url(#g246)" stroke-width="1.00"/><path d="M732.1,434.0L1224.9,777.9" stroke="url(#g247)" stroke-width="1.00"/><path d="M239.7,774.3L1213.2,559.0" stroke="url(#g248)" stroke-width="1.00"/><path d="M735.1,433.6L1229.7,776.3" stroke="url(#g249)" stroke-width="1.00"/><path d="M239.5,777.9L1216.6,560.6" stroke="url(#g250)" stroke-width="1.00"/><path d="M738.0,433.3L1234.6,774.7" stroke="url(#g251)" stroke-width="1.00"/><path d="M239.3,781.5L1220.0,562.2" stroke="url(#g252)" stroke-width="1.00"/><path d="M743.8,432.5L1244.1,771.5" stroke="url(#g253)" stroke-width="1.00"/><path d="M238.9,788.8L1227.0,565.5" stroke="url(#g254)" stroke-width="1.00"/><path d="M746.6,432.2L1248.9,769.9" stroke="url(#g255)" stroke-width="1.00"/><path d="M238.6,792.5L1230.5,567.1" stroke="url(#g256)" stroke-width="1.00"/><path d="M749.5,431.8L1253.6,768.3" stroke="url(#g257)" stroke-width="1.00"/><path d="M238.4,796.3L1234.0,568.8" stroke="url(#g258)" stroke-width="1.00"/><path d="M752.4,431.4L1258.3,766.8" stroke="url(#g259)" stroke-width="1.00"/><path d="M238.2,800.1L1237.5,570.5" stroke="url(#g260)" stroke-width="1.00"/><path d="M755.2,431.1L1263.0,765.2" stroke="url(#g261)" stroke-width="1.00"/><path d="M238.0,804.0L1241.1,572.2" stroke="url(#g262)" stroke-width="1.00"/><path d="M758.1,430.7L1267.6,763.7" stroke="url(#g263)" stroke-width="1.00"/><path d="M237.8,807.9L1244.7,573.9" stroke="url(#g264)" stroke-width="1.00"/><path d="M761.0,430.4L1272.3,762.1" stroke="url(#g265)" stroke-width="1.00"/><path d="M237.6,811.8L1248.3,575.6" stroke="url(#g266)" stroke-width="1.00"/><path d="M763.8,430.0L1276.9,760.6" stroke="url(#g267)" stroke-width="1.00"/><path d="M237.3,815.8L1252.0,577.3" stroke="url(#g268)" stroke-width="1.00"/><path d="M766.6,429.6L1281.5,759.0" stroke="url(#g269)" stroke-width="1.00"/><path d="M237.1,819.8L1255.7,579.1" stroke="url(#g270)" stroke-width="1.00"/><path d="M772.3,428.9L1290.6,756.0" stroke="url(#g271)" stroke-width="1.00"/><path d="M236.6,828.1L1263.2,582.6" stroke="url(#g272)" stroke-width="1.00"/><path d="M775.1,428.6L1295.1,754.5" stroke="url(#g273)" stroke-width="1.00"/><path d="M236.4,832.2L1266.9,584.4" stroke="url(#g274)" stroke-width="1.00"/><path d="M777.9,428.2L1299.6,753.0" stroke="url(#g275)" stroke-width="1.00"/><path d="M244.1,834.5L1270.7,586.2" stroke="url(#g276)" stroke-width="1.00"/><path d="M780.7,427.8L1304.1,751.5" stroke="url(#g277)" stroke-width="1.00"/><path d="M259.7,834.9L1274.6,588.0" stroke="url(#g278)" stroke-width="1.00"/><path d="M783.5,427.5L1308.5,750.0" stroke="url(#g279)" stroke-width="1.00"/><path d="M279.3,834.4L1278.4,589.8" stroke="url(#g280)" stroke-width="1.00"/><path d="M786.3,427.1L1313.0,748.5" stroke="url(#g281)" stroke-width="1.00"/><path d="M295.0,834.8L1282.3,591.6" stroke="url(#g282)" stroke-width="1.00"/><path d="M789.1,426.8L1317.4,747.1" stroke="url(#g283)" stroke-width="1.00"/><path d="M314.5,834.2L1286.2,593.5" stroke="url(#g284)" stroke-width="1.00"/><path d="M791.9,426.4L1321.8,745.6" stroke="url(#g285)" stroke-width="1.00"/><path d="M330.2,834.6L1290.2,595.4" stroke="url(#g286)" stroke-width="1.00"/><path d="M794.6,426.1L1326.2,744.1" stroke="url(#g287)" stroke-width="1.00"/><path d="M349.7,834.1L1294.2,597.2" stroke="url(#g288)" stroke-width="1.00"/><path d="M800.2,425.4L1334.9,741.2" stroke="url(#g289)" stroke-width="1.00"/><path d="M381.1,834.9L1302.2,601.0" stroke="url(#g290)" stroke-width="1.00"/><path d="M802.9,425.0L1339.2,739.8" stroke="url(#g291)" stroke-width="1.00"/><path d="M400.6,834.3L1306.3,603.0" stroke="url(#g292)" stroke-width="1.00"/><path d="M805.7,424.7L1343.5,738.3" stroke="url(#g293)" stroke-width="1.00"/><path d="M416.3,834.7L1310.4,604.9" stroke="url(#g294)" stroke-width="1.00"/><path d="M808.4,424.3L1347.7,736.9" stroke="url(#g295)" stroke-width="1.00"/><path d="M435.7,834.2L1314.5,606.9" stroke="url(#g296)" stroke-width="1.00"/><path d="M811.1,424.0L1352.0,735.5" stroke="url(#g297)" stroke-width="1.00"/><path d="M451.5,834.6L1318.7,608.9" stroke="url(#g298)" stroke-width="1.00"/><path d="M813.9,423.6L1356.2,734.1" stroke="url(#g299)" stroke-width="1.00"/><path d="M467.2,835.0L1322.9,610.8" stroke="url(#g300)" stroke-width="1.00"/><path d="M816.6,423.3L1360.4,732.7" stroke="url(#g301)" stroke-width="1.00"/><path d="M486.6,834.4L1327.2,612.8" stroke="url(#g302)" stroke-width="1.00"/><path d="M819.3,422.9L1364.6,731.3" stroke="url(#g303)" stroke-width="1.00"/><path d="M502.4,834.8L1331.4,614.9" stroke="url(#g304)" stroke-width="1.00"/><path d="M822.0,422.6L1368.8,729.9" stroke="url(#g305)" stroke-width="1.00"/><path d="M521.7,834.2L1335.8,616.9" stroke="url(#g306)" stroke-width="1.00"/><path d="M827.4,421.9L1377.1,727.1" stroke="url(#g307)" stroke-width="1.00"/><path d="M556.8,834.1L1344.5,621.0" stroke="url(#g308)" stroke-width="1.00"/><path d="M830.1,421.6L1381.2,725.7" stroke="url(#g309)" stroke-width="1.00"/><path d="M572.6,834.5L1348.9,623.1" stroke="url(#g310)" stroke-width="1.00"/><path d="M832.8,421.2L1385.3,724.4" stroke="url(#g311)" stroke-width="1.00"/><path d="M588.4,834.9L1353.4,625.2" stroke="url(#g312)" stroke-width="1.00"/><path d="M835.5,420.9L1389.4,723.0" stroke="url(#g313)" stroke-width="1.00"/><path d="M607.7,834.3L1357.9,627.4" stroke="url(#g314)" stroke-width="1.00"/><path d="M838.1,420.5L1393.5,721.6" stroke="url(#g315)" stroke-width="1.00"/><path d="M623.5,834.7L1362.4,629.5" stroke="url(#g316)" stroke-width="1.00"/><path d="M840.8,420.2L1397.5,720.3" stroke="url(#g317)" stroke-width="1.00"/><path d="M642.8,834.2L1367.0,631.7" stroke="url(#g318)" stroke-width="1.00"/><path d="M843.4,419.9L1401.6,718.9" stroke="url(#g319)" stroke-width="1.00"/><path d="M658.6,834.6L1371.6,633.8" stroke="url(#g320)" stroke-width="1.00"/><path d="M846.1,419.5L1405.6,717.6" stroke="url(#g321)" stroke-width="1.00"/><path d="M674.5,835.0L1376.2,636.0" stroke="url(#g322)" stroke-width="1.00"/><path d="M848.7,419.2L1409.6,716.3" stroke="url(#g323)" stroke-width="1.00"/><path d="M693.7,834.4L1380.9,638.3" stroke="url(#g324)" stroke-width="1.00"/><path d="M854.0,418.5L1417.5,713.6" stroke="url(#g325)" stroke-width="1.00"/><path d="M728.7,834.3L1390.4,642.7" stroke="url(#g326)" stroke-width="1.00"/><path d="M856.7,418.2L1421.5,712.3" stroke="url(#g327)" stroke-width="1.00"/><path d="M744.6,834.7L1395.2,645.0" stroke="url(#g328)" stroke-width="1.00"/><path d="M859.3,417.9L1422.6,709.6" stroke="url(#g329)" stroke-width="1.00"/><path d="M763.7,834.1L1400.1,647.3" stroke="url(#g330)" stroke-width="1.00"/><path d="M861.9,417.5L1423.7,706.8" stroke="url(#g331)" stroke-width="1.00"/><path d="M779.6,834.5L1405.0,649.6" stroke="url(#g332)" stroke-width="1.00"/><path d="M864.5,417.2L1424.8,704.1" stroke="url(#g333)" stroke-width="1.00"/><path d="M795.5,834.9L1409.9,652.0" stroke="url(#g334)" stroke-width="1.00"/><path d="M867.1,416.9L1423.2,700.1" stroke="url(#g335)" stroke-width="1.00"/><path d="M814.6,834.4L1414.9,654.3" stroke="url(#g336)" stroke-width="1.00"/><path d="M869.7,416.5L1424.3,697.4" stroke="url(#g337)" stroke-width="1.00"/><path d="M830.6,834.8L1419.9,656.7" stroke="url(#g338)" stroke-width="1.00"/><path d="M872.3,416.2L1422.7,693.4" stroke="url(#g339)" stroke-width="1.00"/><path d="M849.6,834.2L1425.0,659.1" stroke="url(#g340)" stroke-width="1.00"/><path d="M874.9,415.9L1423.8,690.9" stroke="url(#g341)" stroke-width="1.00"/><path d="M865.6,834.6L1424.7,663.2" stroke="url(#g342)" stroke-width="1.00"/><path d="M880.1,415.2L1423.3,684.5" stroke="url(#g343)" stroke-width="1.00"/><path d="M900.5,834.4L1424.2,671.5" stroke="url(#g344)" stroke-width="1.00"/><path d="M882.6,414.9L1424.4,682.0" stroke="url(#g345)" stroke-width="1.00"/><path d="M916.5,834.8L1423.9,675.7" stroke="url(#g346)" stroke-width="1.00"/><path d="M885.2,414.6L1422.8,678.2" stroke="url(#g347)" stroke-width="1.00"/><path d="M935.5,834.3L1423.6,680.1" stroke="url(#g348)" stroke-width="1.00"/><path d="M887.8,414.2L1423.9,675.7" stroke="url(#g349)" stroke-width="1.00"/><path d="M951.5,834.7L1423.3,684.5" stroke="url(#g350)" stroke-width="1.00"/><path d="M890.3,413.9L1424.9,673.3" stroke="url(#g351)" stroke-width="1.00"/><path d="M970.4,834.1L1424.9,688.3" stroke="url(#g352)" stroke-width="1.00"/><path d="M892.9,413.6L1423.4,669.7" stroke="url(#g353)" stroke-width="1.00"/><path d="M986.4,834.5L1424.6,692.8" stroke="url(#g354)" stroke-width="1.00"/><path d="M895.4,413.3L1424.4,667.3" stroke="url(#g355)" stroke-width="1.00"/><path d="M1002.4,834.9L1424.3,697.4" stroke="url(#g356)" stroke-width="1.00"/><path d="M897.9,412.9L1422.9,663.7" stroke="url(#g357)" stroke-width="1.00"/><path d="M1021.4,834.4L1424.0,702.1" stroke="url(#g358)" stroke-width="1.00"/><path d="M900.5,412.6L1423.9,661.4" stroke="url(#g359)" stroke-width="1.00"/><path d="M1037.4,834.8L1423.7,706.8" stroke="url(#g360)" stroke-width="1.00"/><path d="M296.5,489.4L314.5,834.2" stroke="url(#g361)" stroke-width="1.72"/><path d="M254.8,506.7L918.5,419.6" stroke="url(#g362)" stroke-width="1.00"/><path d="M336.3,484.3L392.7,834.1" stroke="url(#g363)" stroke-width="1.70"/><path d="M254.1,519.6L934.8,427.3" stroke="url(#g364)" stroke-width="1.00"/><path d="M375.0,479.4L470.9,834.0" stroke="url(#g365)" stroke-width="1.66"/><path d="M253.3,533.4L952.0,435.5" stroke="url(#g366)" stroke-width="1.00"/><path d="M412.7,474.6L548.9,833.9" stroke="url(#g367)" stroke-width="1.61"/><path d="M252.5,548.2L970.1,444.0" stroke="url(#g368)" stroke-width="1.00"/><path d="M449.5,469.9L627.0,833.8" stroke="url(#g369)" stroke-width="1.54"/><path d="M251.6,564.1L989.1,453.0" stroke="url(#g370)" stroke-width="1.00"/><path d="M485.2,465.4L704.9,833.7" stroke="url(#g371)" stroke-width="1.47"/><path d="M250.6,581.1L1009.3,462.5" stroke="url(#g372)" stroke-width="1.00"/><path d="M520.0,461.0L782.9,833.6" stroke="url(#g373)" stroke-width="1.40"/><path d="M249.6,599.6L1030.6,472.6" stroke="url(#g374)" stroke-width="1.00"/><path d="M554.0,456.7L860.7,833.4" stroke="url(#g375)" stroke-width="1.33"/><path d="M248.4,619.5L1053.2,483.3" stroke="url(#g376)" stroke-width="1.00"/><path d="M587.1,452.5L938.5,833.3" stroke="url(#g377)" stroke-width="1.26"/><path d="M247.2,641.2L1077.2,494.7" stroke="url(#g378)" stroke-width="1.00"/><path d="M619.4,448.4L1016.3,833.2" stroke="url(#g379)" stroke-width="1.19"/><path d="M245.9,664.8L1102.7,506.7" stroke="url(#g380)" stroke-width="1.00"/><path d="M650.9,444.3L1084.5,824.8" stroke="url(#g381)" stroke-width="1.12"/><path d="M244.4,690.6L1129.9,519.6" stroke="url(#g382)" stroke-width="1.00"/><path d="M681.6,440.4L1138.8,806.7" stroke="url(#g383)" stroke-width="1.03"/><path d="M242.8,719.0L1159.0,533.3" stroke="url(#g384)" stroke-width="1.00"/><path d="M711.6,436.6L1190.3,789.5" stroke="url(#g385)" stroke-width="1.00"/><path d="M241.0,750.3L1190.1,548.0" stroke="url(#g386)" stroke-width="1.00"/><path d="M740.9,432.9L1239.3,773.1" stroke="url(#g387)" stroke-width="1.00"/><path d="M239.1,785.1L1223.5,563.8" stroke="url(#g388)" stroke-width="1.00"/><path d="M769.5,429.3L1286.0,757.5" stroke="url(#g389)" stroke-width="1.00"/><path d="M236.9,823.9L1259.4,580.8" stroke="url(#g390)" stroke-width="1.00"/><path d="M797.4,425.7L1330.5,742.7" stroke="url(#g391)" stroke-width="1.00"/><path d="M365.4,834.5L1298.2,599.1" stroke="url(#g392)" stroke-width="1.00"/><path d="M824.7,422.3L1373.0,728.5" stroke="url(#g393)" stroke-width="1.00"/><path d="M537.5,834.6L1340.1,619.0" stroke="url(#g394)" stroke-width="1.00"/><path d="M851.4,418.9L1413.6,715.0" stroke="url(#g395)" stroke-width="1.00"/><path d="M709.5,834.8L1385.6,640.5" stroke="url(#g396)" stroke-width="1.05"/><path d="M877.5,415.5L1424.9,688.3" stroke="url(#g397)" stroke-width="1.00"/><path d="M881.5,835.0L1424.4,667.3" stroke="url(#g398)" stroke-width="1.12"/></g>
<path d="M342.39,989.61 342.42,991.31 342.24,993 341.86,994.71 341.28,996.42 340.49,998.14 339.5,999.86 338.31,1001.57 336.93,1003.23 335.37,1004.85 333.63,1006.42 331.7,1007.95 329.58,1009.44 327.29,1010.86 324.84,1012.2 322.23,1013.46 319.47,1014.65 316.56,1015.75 313.48,1016.77 292.53,1023.29 292.88,1043.67 274.57,1049.49 274.71,993.17 311.39,982.21 316.02,980.94 320.29,980.03 324.2,979.46 327.74,979.23 330.93,979.36 333.78,979.82 336.24,980.63 338.29,981.76 339.93,983.22 341.16,985.01 341.98,987.14 342.39,989.61ZM325.35,995 324.79,992.58 323.42,990.88 321.24,989.9 318.25,989.64 314.45,990.09 309.82,991.26 292.07,996.61 292.37,1014.26 310.94,1008.54 313.24,1007.76 315.35,1006.92 317.27,1006 318.99,1005.01 320.53,1003.94 321.87,1002.81 323,1001.62 323.91,1000.38 324.6,999.1 325.07,997.78 325.32,996.41 325.35,995ZM357.8,1023.01 352.82,967.1 368.3,962.49 374.27,1017.77ZM405.38,1008.69 402.49,1009.51 399.78,1010.08 397.27,1010.4 394.95,1010.46 392.83,1010.27 390.91,1009.82 389.21,1009.12 387.79,1008.18 386.62,1007.01 385.72,1005.61 385.09,1003.97 384.71,1002.11 384.64,1000 384.93,997.96 385.58,995.99 386.59,994.09 387.97,992.26 389.7,990.49 391.77,988.81 394.16,987.21 396.87,985.7 399.91,984.28 403.26,982.94 406.93,981.69 419.72,977.59 419.39,975.6 419.13,974.4 418.78,973.34 418.34,972.43 417.8,971.67 417.17,971.05 416.44,970.57 415.61,970.24 414.65,970.05 413.57,970 412.36,970.11 411.03,970.35 409.56,970.75 408.21,971.2 407,971.68 405.92,972.19 404.98,972.74 404.17,973.32 403.5,973.93 402.94,974.59 402.48,975.33 402.12,976.13 401.85,977 401.68,977.93 401.61,978.94 385.28,983.43 385.69,981.38 386.4,979.41 387.4,977.52 388.69,975.7 390.28,973.97 392.16,972.3 394.32,970.72 396.75,969.23 399.46,967.82 402.44,966.5 405.69,965.26 409.21,964.11 412.78,963.13 416.09,962.44 419.15,962.03 421.95,961.9 424.51,962.05 426.83,962.48 428.87,963.19 430.62,964.16 432.07,965.41 433.22,966.92 434.08,968.72 434.64,970.79 437.27,985.07 437.5,986.12 437.77,987.04 438.08,987.82 438.43,988.47 438.83,988.99 439.26,989.36 439.76,989.62 440.32,989.79 440.95,989.85 441.66,989.82 442.43,989.69 443.28,989.46 443.86,989.27 444.43,989.07 445,988.85 445.56,988.63 446.1,988.4 446.64,988.16 447.75,993.84 447.31,994.06 446.89,994.27 446.48,994.47 446.08,994.67 445.7,994.86 445.34,995.04 444.98,995.22 444.62,995.39 444.27,995.56 443.9,995.73 443.54,995.89 443.18,996.05 442.82,996.21 442.44,996.36 442.06,996.52 441.67,996.67 441.27,996.83 440.86,996.99 440.43,997.15 439.99,997.31 439.51,997.48 439.02,997.65 438.5,997.82 437.95,997.99 436.06,998.54 434.32,998.92 432.73,999.14 431.29,999.19 430,999.07 428.87,998.8 427.87,998.36 426.98,997.79 426.2,997.07 425.52,996.21 424.96,995.21 424.51,994.08 424.17,994.18 422.2,997.39 419.76,1000.29 416.86,1002.88 413.5,1005.14 409.67,1007.08 405.38,1008.69ZM420.66,983.24 412.71,985.79 411,986.38 409.46,986.96 408.11,987.5 406.93,988.03 405.93,988.52 405.11,988.99 404.41,989.45 403.78,989.94 403.21,990.44 402.71,990.96 402.27,991.51 401.9,992.07 401.6,992.66 401.37,993.28 401.22,993.93 401.14,994.61 401.14,995.32 401.21,996.06 401.39,996.98 401.68,997.77 402.07,998.45 402.55,999.01 403.14,999.46 403.83,999.78 404.6,999.99 405.43,1000.11 406.32,1000.12 407.28,1000.02 408.29,999.83 409.37,999.53 410.59,999.1 411.75,998.62 412.87,998.06 413.94,997.45 414.96,996.77 415.93,996.03 416.83,995.24 417.65,994.41 418.39,993.56 419.04,992.67 419.61,991.74 420.1,990.79 420.49,989.83 420.79,988.88 420.99,987.95 421.09,987.04 421.09,986.14 420.99,985.26ZM493.01,980 487.61,958.44 486.58,955.52 485.14,953.33 483.28,951.87 481,951.12 478.3,951.07 475.17,951.74 473.47,952.35 471.93,953.09 470.54,953.96 469.29,954.96 468.2,956.1 467.26,957.38 466.49,958.74 465.93,960.15 465.57,961.61 465.41,963.1 465.46,964.65 465.71,966.23 470.37,987.2 455.01,992.08 448.84,961.71 448.63,960.73 448.44,959.82 448.24,958.97 448.06,958.19 447.88,957.47 447.7,956.81 447.53,956.2 447.36,955.61 447.19,955.04 447.03,954.5 446.87,953.98 446.72,953.48 460.77,949.22 460.88,949.48 461.03,949.85 461.21,950.35 461.42,950.96 461.67,951.69 461.95,952.54 462.22,953.41 462.47,954.19 462.67,954.87 462.84,955.46 462.97,955.96 463.07,956.36 463.28,956.29 464.02,954.62 464.87,953.06 465.83,951.6 466.89,950.25 468.07,949.01 469.36,947.88 470.76,946.84 472.28,945.87 473.91,944.98 475.66,944.18 477.52,943.44 479.5,942.79 482.36,942.03 485.03,941.54 487.52,941.31 489.83,941.34 491.96,941.65 493.93,942.21 495.7,943.05 497.26,944.14 498.61,945.5 499.76,947.13 500.69,949.03 501.42,951.21 507.89,975.26ZM568.33,935.81 569.12,938.66 569.44,941.43 569.28,944.15 568.64,946.79 567.51,949.37 565.9,951.88 563.83,954.27 561.33,956.48 558.41,958.52 555.06,960.39 551.28,962.07 547.08,963.57 542.85,964.75 538.83,965.55 535.03,965.95 531.45,965.96 528.09,965.58 524.97,964.81 522.15,963.66 519.68,962.17 517.58,960.34 515.84,958.18 514.46,955.68 513.43,952.86 512.83,949.94 512.7,947.12 513.03,944.4 513.83,941.79 515.09,939.27 516.8,936.85 518.93,934.56 521.45,932.47 524.36,930.56 527.65,928.83 531.33,927.27 535.39,925.9 539.61,924.76 543.56,923.98 547.24,923.57 550.67,923.52 553.85,923.82 556.77,924.48 559.43,925.5 561.79,926.86 563.86,928.56 565.64,930.62 567.13,933.03 568.33,935.81ZM553.76,940.34 552.99,938.33 552.12,936.59 551.14,935.09 550.05,933.85 548.86,932.86 547.56,932.11 546.16,931.59 544.66,931.27 543.05,931.16 541.33,931.26 539.51,931.56 537.58,932.06 533.79,933.58 530.91,935.56 528.94,937.99 527.87,940.9 527.72,944.29 528.5,948.18 529.18,950.11 530,951.84 530.94,953.35 532.01,954.64 533.22,955.72 534.55,956.58 536,957.22 537.56,957.63 539.22,957.8 540.98,957.74 542.84,957.46 544.8,956.94 548.71,955.31 551.65,953.22 553.62,950.67 554.62,947.66 554.66,944.21 553.76,940.34ZM647.73,930.77 647.57,930.59 647.38,930.33 647.14,929.98 646.85,929.56 646.53,929.06 646.17,928.48 645.81,927.87 645.47,927.3 645.17,926.76 644.9,926.25 644.66,925.78 644.45,925.34 644.26,925.39 643.48,927.84 642.1,930.08 640.12,932.12 637.54,933.95 634.35,935.57 630.56,936.98 627.58,937.78 624.71,938.23 621.95,938.34 619.32,938.11 616.8,937.53 614.41,936.61 612.18,935.37 610.14,933.84 608.31,932.01 606.67,929.9 605.23,927.49 603.99,924.81 603.03,922.03 602.44,919.38 602.24,916.88 602.4,914.52 602.93,912.3 603.84,910.21 605.09,908.28 606.67,906.54 608.59,904.98 610.84,903.6 613.41,902.4 616.32,901.39 618.07,900.9 619.78,900.52 621.44,900.24 623.05,900.07 624.61,900.01 626.13,900.05 627.59,900.19 629,900.44 630.34,900.8 631.61,901.27 632.83,901.85 633.99,902.54 634.08,902.52 631.56,897.21 626.3,885.63 638.95,881.86 656.66,919.3 657.18,920.38 657.76,921.52 658.39,922.72 659.07,923.98 659.8,925.3 660.58,926.68ZM639.23,913.62 638.37,911.91 637.42,910.39 636.38,909.06 635.26,907.91 634.06,906.95 632.76,906.18 631.39,905.6 629.96,905.22 628.45,905.05 626.86,905.08 625.21,905.31 623.48,905.75 621.84,906.34 620.41,907.04 619.2,907.85 618.2,908.77 617.42,909.81 616.85,910.95 616.5,912.22 616.36,913.61 616.44,915.13 616.73,916.78 617.24,918.56 617.97,920.47 619.78,923.95 621.9,926.61 624.35,928.45 627.11,929.45 630.18,929.61 633.54,928.92 635.2,928.3 636.65,927.55 637.88,926.66 638.9,925.65 639.71,924.5 640.31,923.23 640.69,921.85 640.85,920.38 640.78,918.82 640.49,917.18 639.97,915.44 639.23,913.62ZM694.36,916.66 690.71,917.68 687.21,918.36 683.86,918.69 680.68,918.67 677.65,918.32 674.8,917.62 672.15,916.58 669.72,915.21 667.53,913.51 665.57,911.48 663.85,909.14 662.36,906.48 661.26,903.82 660.6,901.28 660.38,898.86 660.6,896.56 661.25,894.37 662.33,892.29 663.82,890.36 665.69,888.58 667.95,886.95 670.59,885.48 673.61,884.17 677.01,883.01 680.37,882.13 683.58,881.59 686.65,881.37 689.58,881.47 692.38,881.91 695.05,882.67 697.56,883.76 699.92,885.18 702.11,886.92 704.13,889 706,891.41 707.7,894.17 707.83,894.41 676.71,904.09 677.56,905.6 678.5,906.94 679.52,908.1 680.62,909.09 681.81,909.91 683.08,910.54 684.42,911 685.82,911.28 687.27,911.38 688.78,911.31 690.34,911.06 691.95,910.63 694.02,909.85 695.68,908.94 696.95,907.9 697.82,906.73 698.3,905.43 698.38,904.01 710.63,900.97 710.12,904.32 708.74,907.38 706.47,910.15 703.33,912.62 699.29,914.8 694.36,916.66ZM679.5,888.17 678.12,888.66 676.9,889.22 675.86,889.87 674.98,890.59 674.28,891.39 673.74,892.27 673.37,893.22 673.17,894.22 673.15,895.27 673.3,896.38 673.62,897.55 674.11,898.77 692.93,892.96 692.1,891.78 691.21,890.75 690.26,889.87 689.25,889.12 688.19,888.53 687.07,888.07 685.9,887.75 684.7,887.57 683.46,887.52 682.18,887.6 680.86,887.82 679.5,888.17ZM763.02,894.73 761.26,895.22 759.57,895.56 757.95,895.75 756.39,895.77 754.91,895.65 753.49,895.37 752.16,894.93 750.92,894.32 749.77,893.55 748.72,892.62 747.77,891.53 746.91,890.27 735.85,872.06 730.01,873.85 726.85,868.56 733.25,866.62 732.73,858.6 740.07,856.4 744.36,863.25 752.92,860.66 756.23,865.83 747.62,868.46 757.53,884.3 758.02,885.02 758.54,885.65 759.1,886.18 759.68,886.63 760.29,886.99 760.93,887.27 761.61,887.45 762.33,887.55 763.09,887.56 763.89,887.49 764.73,887.34 765.61,887.1 766.1,886.93 766.65,886.71 767.26,886.45 767.91,886.15 768.61,885.81 769.37,885.42 772.61,890.48 771.28,891.27 769.84,892.02 768.3,892.75 766.65,893.44 764.89,894.1 763.02,894.73ZM780.1,888.66 764.87,865.29 764.35,864.5 763.86,863.76 763.39,863.07 762.95,862.42 762.53,861.82 762.13,861.27 761.76,860.76 761.39,860.26 761.04,859.79 760.7,859.34 760.37,858.91 760.05,858.5 771.09,855.15 771.27,855.35 771.54,855.66 771.88,856.08 772.3,856.6 772.8,857.24 773.37,857.98 773.95,858.74 774.46,859.4 774.9,859.98 775.26,860.47 775.55,860.88 775.77,861.19 775.94,861.14 775.83,860 775.78,858.96 775.77,858.04 775.81,857.22 775.9,856.51 776.03,855.91 776.22,855.38 776.45,854.88 776.74,854.4 777.07,853.95 777.46,853.53 777.9,853.14 778.39,852.77 778.96,852.41 779.61,852.08 780.32,851.76 781.11,851.47 781.96,851.19 782.68,850.98 783.36,850.82 784.01,850.69 784.62,850.59 785.21,850.54 785.76,850.51 790.08,856.75 789.09,856.9 788.15,857.07 787.26,857.24 786.43,857.43 785.64,857.63 784.91,857.84 783.57,858.33 782.42,858.91 781.47,859.59 780.71,860.36 780.13,861.23 779.75,862.2 779.57,863.26 779.62,864.4 779.87,865.63 780.35,866.95 781.05,868.36 781.97,869.86 792.03,884.86ZM824.38,875.26 822.25,875.86 820.18,876.27 818.18,876.49 816.24,876.54 814.36,876.4 812.54,876.07 810.83,875.57 809.24,874.89 807.78,874.05 806.45,873.03 805.25,871.85 804.19,870.49 803.27,868.97 802.69,867.49 802.45,866.06 802.55,864.68 802.98,863.35 803.74,862.07 804.82,860.84 806.22,859.68 807.92,858.58 809.93,857.55 812.25,856.57 814.87,855.66 824.14,852.67 823.06,851.22 822.36,850.34 821.64,849.57 820.89,848.91 820.12,848.35 819.33,847.89 818.52,847.54 817.68,847.3 816.78,847.16 815.84,847.13 814.85,847.2 813.81,847.38 812.72,847.67 811.75,848 810.9,848.35 810.19,848.73 809.6,849.13 809.15,849.55 808.82,850 808.61,850.48 808.52,851.02 808.53,851.6 808.65,852.24 808.89,852.92 809.24,853.66 797.12,856.93 796.64,855.43 796.44,854 796.53,852.62 796.9,851.29 797.55,850.02 798.48,848.8 799.68,847.65 801.15,846.55 802.89,845.52 804.91,844.56 807.19,843.65 809.74,842.81 812.39,842.09 814.94,841.58 817.39,841.28 819.74,841.19 821.99,841.3 824.15,841.62 826.18,842.13 828.07,842.85 829.81,843.76 831.4,844.87 832.85,846.19 834.16,847.7 842.1,858.13 842.71,858.9 843.31,859.57 843.88,860.14 844.44,860.61 844.98,860.98 845.5,861.26 846.02,861.45 846.57,861.57 847.13,861.61 847.72,861.59 848.33,861.49 848.96,861.33 849.38,861.19 849.79,861.04 850.18,860.89 850.57,860.73 850.95,860.56 851.31,860.38 854.49,864.51 854.21,864.67 853.93,864.82 853.66,864.97 853.41,865.11 853.16,865.25 852.92,865.39 852.69,865.52 852.45,865.64 852.21,865.76 851.97,865.89 851.73,866 851.48,866.12 851.23,866.23 850.98,866.34 850.71,866.46 850.44,866.57 850.16,866.68 849.88,866.8 849.58,866.91 849.26,867.03 848.93,867.15 848.57,867.27 848.2,867.4 847.8,867.53 846.41,867.92 845.08,868.2 843.81,868.35 842.61,868.39 841.47,868.31 840.4,868.11 839.38,867.79 838.39,867.37 837.44,866.85 836.53,866.23 835.65,865.51 834.81,864.68 834.57,864.76 834.17,867.09 833.25,869.19 831.82,871.06 829.86,872.7 827.38,874.1 824.38,875.26ZM827.2,856.79 821.45,858.65 820.23,859.08 819.15,859.5 818.22,859.9 817.42,860.28 816.77,860.64 816.26,860.98 815.85,861.31 815.51,861.67 815.23,862.03 815.01,862.41 814.86,862.81 814.77,863.22 814.75,863.65 814.81,864.1 814.94,864.57 815.14,865.06 815.42,865.58 815.78,866.12 816.3,866.78 816.87,867.36 817.47,867.85 818.11,868.26 818.78,868.58 819.5,868.81 820.24,868.97 820.99,869.05 821.75,869.06 822.53,868.99 823.31,868.85 824.11,868.63 824.97,868.32 825.77,867.97 826.5,867.57 827.16,867.13 827.76,866.63 828.29,866.09 828.74,865.52 829.11,864.92 829.4,864.3 829.6,863.65 829.71,862.98 829.75,862.29 829.7,861.59 829.57,860.9 829.37,860.23 829.09,859.56 828.73,858.91 828.3,858.27ZM888.21,836.41 889.95,838.63 891.33,840.76 892.34,842.81 892.98,844.77 893.25,846.63 893.15,848.41 892.67,850.07 891.8,851.58 890.55,852.94 888.91,854.16 886.89,855.22 884.47,856.12 882.98,856.55 881.49,856.89 880,857.13 878.52,857.27 877.05,857.32 875.58,857.27 874.14,857.12 872.73,856.89 871.35,856.56 870,856.14 868.7,855.63 867.42,855.03 867.34,855.05 867.6,855.39 867.88,855.76 868.18,856.17 868.5,856.63 868.85,857.13 869.21,857.67 869.56,858.21 869.86,858.67 870.1,859.08 870.29,859.41 870.43,859.68 870.51,859.89 859.67,863.34 859.07,862.42 858.39,861.42 857.62,860.33 856.76,859.16 855.82,857.91 854.79,856.58 830.08,824.92 840.8,821.73 848.95,831.92 852.33,836.39 852.49,836.35 852.59,834.32 853.26,832.49 854.49,830.86 856.27,829.43 858.62,828.18 861.51,827.13 863.93,826.52 866.31,826.17 868.68,826.07 871.02,826.24 873.34,826.65 875.64,827.33 877.9,828.25 880.09,829.4 882.22,830.79 884.28,832.42 886.28,834.29 888.21,836.41ZM877.02,839.88 875.73,838.41 874.43,837.1 873.13,835.97 871.84,835.01 870.54,834.23 869.24,833.61 867.93,833.16 866.59,832.87 865.24,832.74 863.86,832.77 862.45,832.97 861.02,833.33 859.68,833.82 858.56,834.42 857.66,835.11 856.98,835.9 856.53,836.79 856.3,837.78 856.3,838.87 856.52,840.03 856.96,841.29 857.63,842.63 858.53,844.05 859.66,845.56 860.87,846.98 862.13,848.25 863.42,849.38 864.76,850.35 866.14,851.18 867.56,851.86 869.01,852.38 870.47,852.72 871.93,852.87 873.4,852.85 874.88,852.65 876.36,852.27 878.79,851.16 880.29,849.66 880.85,847.78 880.49,845.51 879.21,842.88 877.02,839.88ZM918.83,845.18 916.86,845.73 914.93,846.11 913.03,846.32 911.17,846.36 909.35,846.23 907.57,845.93 905.87,845.46 904.26,844.84 902.76,844.06 901.36,843.12 900.07,842.03 898.88,840.78 897.81,839.37 897.08,838.01 896.68,836.69 896.61,835.42 896.86,834.19 897.43,833.01 898.33,831.88 899.52,830.8 901.03,829.79 902.83,828.83 904.94,827.93 907.36,827.09 915.9,824.33 914.69,822.99 913.91,822.17 913.12,821.46 912.33,820.85 911.52,820.33 910.71,819.91 909.89,819.59 909.04,819.36 908.17,819.23 907.26,819.2 906.31,819.27 905.33,819.44 904.32,819.7 903.43,820.01 902.66,820.33 902.02,820.68 901.5,821.05 901.11,821.44 900.85,821.86 900.71,822.3 900.69,822.8 900.77,823.34 900.97,823.93 901.27,824.56 901.7,825.24 890.45,828.26 889.81,826.88 889.44,825.55 889.36,824.28 889.55,823.05 890.02,821.88 890.77,820.75 891.78,819.68 893.07,818.67 894.62,817.72 896.44,816.82 898.52,815.99 900.87,815.21 903.34,814.54 905.73,814.07 908.05,813.8 910.29,813.71 912.47,813.81 914.58,814.1 916.6,814.59 918.5,815.25 920.28,816.09 921.95,817.12 923.5,818.34 924.93,819.74 933.81,829.38 934.49,830.08 935.14,830.7 935.76,831.23 936.35,831.66 936.92,832.01 937.45,832.26 937.97,832.44 938.51,832.55 939.06,832.59 939.62,832.57 940.19,832.48 940.78,832.33 941.17,832.2 941.54,832.06 941.91,831.92 942.26,831.77 942.6,831.62 942.92,831.46 946.47,835.27 946.22,835.41 945.97,835.55 945.73,835.69 945.5,835.82 945.28,835.95 945.07,836.07 944.86,836.19 944.65,836.31 944.43,836.42 944.21,836.53 943.99,836.64 943.77,836.75 943.55,836.85 943.31,836.96 943.07,837.06 942.82,837.17 942.57,837.27 942.31,837.38 942.04,837.48 941.75,837.59 941.44,837.7 941.11,837.82 940.77,837.93 940.41,838.05 939.11,838.41 937.87,838.67 936.67,838.81 935.52,838.84 934.42,838.77 933.36,838.58 932.34,838.29 931.35,837.91 930.37,837.43 929.42,836.85 928.49,836.18 927.59,835.42 927.37,835.49 927.26,837.64 926.63,839.58 925.48,841.31 923.79,842.82 921.58,844.11 918.83,845.18ZM919.34,828.14 914.04,829.85 912.92,830.25 911.93,830.64 911.08,831.01 910.36,831.36 909.77,831.69 909.32,832 908.97,832.31 908.69,832.64 908.46,832.98 908.3,833.33 908.2,833.69 908.16,834.07 908.2,834.47 908.31,834.88 908.49,835.32 908.74,835.77 909.08,836.25 909.48,836.75 910.07,837.36 910.68,837.89 911.31,838.34 911.98,838.72 912.66,839.02 913.38,839.23 914.11,839.38 914.84,839.45 915.57,839.46 916.31,839.4 917.05,839.27 917.78,839.07 918.58,838.78 919.3,838.46 919.95,838.09 920.54,837.68 921.05,837.22 921.5,836.73 921.86,836.2 922.14,835.64 922.34,835.07 922.46,834.47 922.49,833.86 922.44,833.21 922.31,832.57 922.11,831.93 921.83,831.31 921.48,830.7 921.06,830.09 920.57,829.5ZM922.77,803.37 918.32,798.63 928.26,795.67 932.75,800.37ZM961.6,844.99 960.39,845.38 959.22,845.73 958.1,846.05 957.03,846.34 956.01,846.6 955.04,846.82 950.29,841.7 952.28,841.19 953.11,840.9 953.8,840.59 954.35,840.27 954.76,839.93 955.04,839.58 955.19,839.22 955.19,838.8 955.05,838.32 954.77,837.75 954.34,837.11 953.77,836.39 953.06,835.59 927.01,807.89 937.05,804.84 965.01,834.01 966.04,835.18 966.84,836.32 967.4,837.41 967.73,838.46 967.82,839.47 967.68,840.44 967.29,841.35 966.65,842.21 965.76,843 964.63,843.73 963.24,844.39 961.6,844.99ZM995.62,803.16 997.52,805.16 998.99,807.1 1000.04,809 1000.66,810.85 1000.84,812.65 1000.59,814.4 999.9,816.06 998.78,817.6 997.23,819.02 995.25,820.31 992.84,821.48 990,822.52 986.99,823.34 984,823.89 981.01,824.17 978.04,824.18 975.09,823.91 972.15,823.37 969.3,822.58 966.6,821.55 964.04,820.28 961.63,818.77 959.38,817.03 957.28,815.07 955.48,813.03 954.12,811.06 953.2,809.16 952.7,807.33 952.63,805.57 952.98,803.87 953.75,802.27 954.92,800.8 956.5,799.46 958.49,798.24 960.88,797.15 963.68,796.18 966.71,795.38 969.67,794.84 972.58,794.55 975.43,794.51 978.23,794.72 980.97,795.19 983.64,795.91 986.22,796.87 988.7,798.07 991.1,799.52 993.4,801.21 995.62,803.16ZM985.42,806.33 983.9,804.93 982.4,803.7 980.92,802.65 979.47,801.78 978.03,801.08 976.62,800.56 975.22,800.19 973.82,799.97 972.42,799.89 971.02,799.96 969.63,800.17 968.24,800.52 965.74,801.59 964.21,802.97 963.64,804.68 964.03,806.72 965.41,809.09 967.78,811.81 969.2,813.16 970.64,814.36 972.09,815.41 973.55,816.32 975.03,817.07 976.52,817.67 978.01,818.11 979.48,818.39 980.94,818.51 982.38,818.47 983.8,818.27 985.2,817.91 987.76,816.78 989.29,815.33 989.82,813.55 989.34,811.45 987.87,809.04 985.42,806.33Z" fill="rgba(112,186,218,0.5)"/>
<polygon points="255.5,494.6 903,412.3 1489.5,689.6 220.5,1113.2" fill="none" stroke="#6cb8d8" stroke-width="1.3"/>
<filter id="shblur" x="-20%" y="-20%" width="140%" height="140%"><feGaussianBlur stdDeviation="1.6"/></filter>
<polygon points="690,601.5 828,577 876,603 690,639.5" fill="rgb(40,72,100)" opacity="0.42" filter="url(#shblur)"/>
<polygon points="821.6,514.4 893,503 920.5,527.6 855,539.6" fill="#efefef"/>
<linearGradient id="lf821" x1="0" y1="0" x2="1" y2="0"><stop offset="0" stop-color="#8f8f8f"/><stop offset="1" stop-color="#979797"/></linearGradient>
<polygon points="821.6,514.4 855,539.6 853.9,607.6 820.2,580.2" fill="#939393"/>
<polygon points="855,539.6 920.5,527.6 918.2,594.3 853.9,607.6" fill="#c4c4c4"/>
<path d="M820.2,580.2 821.6,514.4 893,503 920.5,527.6 918.2,594.3 853.9,607.6 820.2,580.2M821.6,514.4 855,539.6 920.5,527.6M855,539.6 853.9,607.6" fill="none" stroke="#2d4a6c" stroke-width="1.55" stroke-linejoin="round"/>
<clipPath id="c2"><polygon points="838.1,280 833.6,519.8 833.6,519.8 833.72,520.09 833.81,520.44 833.95,520.89 834.24,521.43 834.76,522.1 835.6,522.9 836.7,523.92 837.97,525.18 839.47,526.55 841.27,527.93 843.42,529.22 846,530.3 849.14,531.22 852.81,532.08 856.84,532.84 861.06,533.47 865.27,533.93 869.3,534.2 873.34,534.24 877.56,534.07 881.77,533.73 885.81,533.28 889.48,532.75 892.6,532.2 895.12,531.56 897.19,530.77 898.89,529.92 900.31,529.06 901.55,528.26 902.7,527.6 903.71,527.06 904.49,526.58 905.08,526.16 905.54,525.81 905.9,525.52 906.2,525.3 906.2,525.3 918.3,280"/></clipPath>
<g clip-path="url(#c2)">
<polygon points="835.1,280 918.3,280 905.51,539.2 830.24,539.2" fill="#738367"/>
<polygon points="850.45,280 918.3,280 905.51,539.2 844.37,539.2" fill="#7c8c73"/>
<polygon points="866.17,280 918.3,280 905.51,539.2 858.53,539.2" fill="#899a7f"/>
<polygon points="882.77,280 918.3,280 905.51,539.2 873.5,539.2" fill="#95a88a"/>
<polygon points="898.25,280 918.3,280 905.51,539.2 887.44,539.2" fill="#a1b697"/>
<polygon points="910.52,280 921.3,280 908.51,539.2 898.5,539.2" fill="#a6bf9a"/>
</g>
<path d="M838.1,280L833.6,519.8M906.2,525.3L918.3,280" stroke="#2d4a6c" stroke-width="1.65" fill="none"/>
<polygon points="619.7,548.2 692.8,536.1 720.4,563.8 643.1,577.9" fill="#efefef"/>
<linearGradient id="lf619" x1="0" y1="0" x2="1" y2="0"><stop offset="0" stop-color="#8f8f8f"/><stop offset="1" stop-color="#979797"/></linearGradient>
<polygon points="619.7,548.2 643.1,577.9 647.1,650.8 623.5,618.8" fill="#939393"/>
<polygon points="643.1,577.9 720.4,563.8 722.3,635.6 647.1,650.8" fill="#c4c4c4"/>
<path d="M623.5,618.8 619.7,548.2 692.8,536.1 720.4,563.8 722.3,635.6 647.1,650.8 623.5,618.8M619.7,548.2 643.1,577.9 720.4,563.8M643.1,577.9 647.1,650.8" fill="none" stroke="#2d4a6c" stroke-width="1.55" stroke-linejoin="round"/>
<clipPath id="c1"><polygon points="614.4,290 629.4,561.8 629.4,561.8 630.2,562.3 631.18,562.98 632.4,563.79 633.94,564.68 635.89,565.6 638.3,566.5 641.25,567.53 644.68,568.76 648.51,570.01 652.65,571.13 657.01,571.95 661.5,572.3 666.43,572.13 671.92,571.56 677.63,570.69 683.21,569.61 688.32,568.42 692.6,567.2 696.05,565.84 698.96,564.24 701.39,562.52 703.41,560.81 705.09,559.23 706.5,557.9 707.5,556.81 708,555.85 708.17,555.02 708.14,554.32 708.07,553.75 708.1,553.3 708.1,553.3 701.9,290"/></clipPath>
<g clip-path="url(#c1)">
<polygon points="611.4,290 701.9,290 708.67,577.3 627.26,577.3" fill="#76866a"/>
<polygon points="621.31,290 701.9,290 708.67,577.3 636.45,577.3" fill="#7b8b72"/>
<polygon points="635.4,290 701.9,290 708.67,577.3 649.07,577.3" fill="#899b7f"/>
<polygon points="653.16,290 701.9,290 708.67,577.3 664.99,577.3" fill="#95a88a"/>
<polygon points="672.06,290 701.9,290 708.67,577.3 681.93,577.3" fill="#a1b697"/>
<polygon points="688.07,290 704.9,290 711.67,577.3 696.28,577.3" fill="#a6bf99"/>
</g>
<path d="M614.4,290L629.4,561.8M708.1,553.3L701.9,290" stroke="#2d4a6c" stroke-width="1.65" fill="none"/>
<polygon points="601.24,291.74 601.07,288.23 600.97,284.71 600.93,281.19 600.96,277.67 601.05,274.15 601.21,270.63 601.43,267.12 601.73,263.61 602.08,260.11 602.5,256.62 602.99,253.14 603.55,249.67 604.16,246.22 604.85,242.78 605.59,239.36 606.4,235.96 607.28,232.57 608.21,229.21 609.21,225.87 610.28,222.56 611.4,219.27 612.59,216.01 613.83,212.78 615.14,209.58 616.5,206.42 617.93,203.28 619.41,200.18 620.95,197.12 622.55,194.1 624.2,191.11 625.91,188.17 627.67,185.26 629.48,182.39 631.35,179.56 633.27,176.77 635.25,174.03 637.27,171.33 639.34,168.67 641.46,166.06 643.62,163.5 645.84,160.99 648.09,158.52 650.39,156.11 652.74,153.75 655.13,151.45 657.55,149.2 660.02,147 662.53,144.86 665.07,142.78 667.65,140.76 670.26,138.79 672.91,136.89 675.59,135.05 678.3,133.27 681.04,131.55 683.81,129.9 686.61,128.31 689.44,126.78 692.28,125.33 695.16,123.94 698.05,122.61 700.97,121.36 703.9,120.17 706.85,119.05 709.82,118 712.81,117.03 715.8,116.12 718.82,115.28 721.84,114.52 724.87,113.82 727.91,113.2 730.96,112.65 734.01,112.17 737.06,111.77 740.12,111.44 743.18,111.18 746.24,111 749.3,110.88 752.36,110.85 790.45,110.92 793.5,110.96 796.54,111.06 799.58,111.23 802.61,111.46 805.63,111.76 808.65,112.14 811.65,112.57 814.63,113.08 817.61,113.65 820.57,114.29 823.51,114.99 826.44,115.77 829.34,116.6 832.23,117.51 835.1,118.47 837.94,119.51 840.76,120.6 843.56,121.76 846.33,122.99 849.08,124.28 851.8,125.63 854.49,127.04 857.15,128.51 859.78,130.05 862.37,131.64 864.94,133.29 867.47,135.01 869.96,136.78 872.42,138.6 874.85,140.49 877.23,142.43 879.58,144.43 881.89,146.48 884.15,148.58 886.38,150.74 888.56,152.95 890.7,155.21 892.8,157.52 894.85,159.88 896.85,162.29 898.81,164.74 900.72,167.24 902.59,169.79 904.4,172.38 906.17,175.02 907.88,177.69 909.55,180.41 911.16,183.17 912.72,185.97 914.23,188.8 915.68,191.68 917.08,194.58 918.43,197.53 919.72,200.5 920.95,203.51 922.13,206.55 923.26,209.62 924.32,212.72 925.33,215.84 926.28,218.99 927.17,222.17 928,225.37 928.78,228.59 929.49,231.83 930.15,235.09 930.75,238.37 931.28,241.67 931.76,244.98 932.18,248.31 932.53,251.65 932.83,255.01 933.06,258.37 933.23,261.74 933.34,265.12 933.4,268.51 933.39,271.9 933.31,275.3 933.18,278.7 932.99,282.1 626.69,304.57" fill="#4f8e99"/>
<polygon points="626.69,304.57 626.47,299.94 626.36,295.3 626.37,290.65 626.49,285.99 626.72,281.33 601.28,269.47 601.06,273.92 600.94,278.38 600.94,282.84 601.04,287.29 601.24,291.74" fill="rgb(71,124,135)" stroke="rgb(71,124,135)" stroke-width="0.5"/>
<polygon points="626.72,281.33 627.08,276.67 627.54,272.01 628.12,267.35 628.81,262.71 629.62,258.09 603.95,247.39 603.2,251.77 602.56,256.18 602.03,260.59 601.6,265.03 601.28,269.47" fill="rgb(73,128,139)" stroke="rgb(73,128,139)" stroke-width="0.5"/>
<polygon points="629.62,258.09 630.54,253.48 631.57,248.89 632.71,244.32 633.96,239.79 635.32,235.28 609.2,225.91 607.95,230.14 606.79,234.41 605.74,238.71 604.79,243.04 603.95,247.39" fill="rgb(75,133,144)" stroke="rgb(75,133,144)" stroke-width="0.5"/>
<polygon points="635.32,235.28 636.78,230.81 638.36,226.38 640.04,221.98 641.82,217.64 643.71,213.34 616.95,205.41 615.21,209.41 613.56,213.47 612.01,217.57 610.56,221.72 609.2,225.91" fill="rgb(77,137,149)" stroke="rgb(77,137,149)" stroke-width="0.5"/>
<polygon points="643.71,213.34 645.7,209.09 647.79,204.89 649.98,200.76 652.27,196.68 654.65,192.66 627.04,186.28 624.85,189.98 622.74,193.75 620.72,197.57 618.79,201.46 616.95,205.41" fill="rgb(80,142,153)" stroke="rgb(80,142,153)" stroke-width="0.5"/>
<polygon points="654.65,192.66 657.12,188.72 659.69,184.84 662.35,181.03 665.09,177.3 667.92,173.65 639.29,168.73 636.68,172.1 634.15,175.54 631.7,179.05 629.33,182.63 627.04,186.28" fill="rgb(82,146,158)" stroke="rgb(82,146,158)" stroke-width="0.5"/>
<polygon points="667.92,173.65 670.84,170.08 673.83,166.59 676.91,163.19 680.06,159.87 683.29,156.65 653.47,153.04 650.49,156.01 647.58,159.07 644.75,162.21 641.98,165.43 639.29,168.73" fill="rgb(84,151,163)" stroke="rgb(84,151,163)" stroke-width="0.5"/>
<polygon points="683.29,156.65 686.59,153.52 689.95,150.48 693.39,147.54 696.89,144.71 700.45,141.97 669.31,139.5 666.02,142.02 662.79,144.64 659.62,147.35 656.51,150.15 653.47,153.04" fill="rgb(88,158,170)" stroke="rgb(88,158,170)" stroke-width="0.5"/>
<polygon points="700.45,141.97 704.07,139.34 707.75,136.82 711.49,134.4 715.27,132.1 719.1,129.9 686.52,128.36 682.98,130.38 679.49,132.51 676.05,134.74 672.65,137.07 669.31,139.5" fill="rgb(92,164,177)" stroke="rgb(92,164,177)" stroke-width="0.5"/>
<polygon points="719.1,129.9 722.98,127.82 726.9,125.86 730.86,124.01 734.85,122.27 738.88,120.66 704.78,119.83 701.06,121.32 697.37,122.92 693.72,124.62 690.1,126.44 686.52,128.36" fill="rgb(95,170,184)" stroke="rgb(95,170,184)" stroke-width="0.5"/>
<polygon points="738.88,120.66 742.94,119.17 747.03,117.8 751.15,116.55 755.28,115.42 759.43,114.42 723.74,114.07 719.9,115 716.09,116.03 712.29,117.19 708.52,118.45 704.78,119.83" fill="rgb(99,177,191)" stroke="rgb(99,177,191)" stroke-width="0.5"/>
<polygon points="759.43,114.42 763.6,113.54 767.78,112.79 771.97,112.17 776.16,111.67 780.36,111.3 743.05,111.19 739.18,111.53 735.31,111.99 731.44,112.57 727.58,113.26 723.74,114.07" fill="rgb(103,183,197)" stroke="rgb(103,183,197)" stroke-width="0.5"/>
<polygon points="780.36,111.3 782.38,111.16 784.4,111.06 786.41,110.99 788.43,110.94 790.45,110.92 752.36,110.85 750.5,110.86 748.64,110.9 746.77,110.97 744.91,111.07 743.05,111.19" fill="rgb(106,188,202)" stroke="rgb(106,188,202)" stroke-width="0.5"/>
<polygon points="626.69,304.57 626.5,300.92 626.39,297.25 626.35,293.58 626.38,289.91 626.48,286.22 626.65,282.54 626.9,278.86 627.21,275.18 627.6,271.5 628.06,267.82 628.59,264.15 629.18,260.49 629.85,256.84 630.59,253.21 631.4,249.58 632.28,245.97 633.23,242.37 634.24,238.8 635.33,235.24 636.48,231.71 637.7,228.2 638.98,224.71 640.33,221.25 641.75,217.82 643.23,214.42 644.77,211.04 646.38,207.71 648.04,204.4 649.77,201.13 651.57,197.9 653.42,194.71 655.33,191.56 657.29,188.45 659.32,185.39 661.4,182.37 663.54,179.39 665.73,176.47 667.97,173.59 670.27,170.76 672.62,167.98 675.01,165.26 677.46,162.59 679.95,159.98 682.49,157.42 685.08,154.92 687.71,152.48 690.38,150.1 693.1,147.79 695.86,145.53 698.65,143.34 701.48,141.21 704.35,139.15 707.26,137.15 710.2,135.22 713.17,133.36 716.17,131.57 719.2,129.85 722.26,128.2 725.35,126.62 728.46,125.11 731.6,123.68 734.76,122.32 737.94,121.03 741.13,119.82 744.35,118.68 747.59,117.62 750.84,116.64 754.1,115.73 757.37,114.9 760.66,114.15 763.95,113.48 767.25,112.88 770.56,112.36 773.87,111.92 777.19,111.57 780.51,111.29 783.82,111.09 787.13,110.97 790.45,110.92 790.45,110.92 793.5,110.96 796.54,111.06 799.58,111.23 802.61,111.46 805.63,111.76 808.65,112.14 811.65,112.57 814.63,113.08 817.61,113.65 820.57,114.29 823.51,114.99 826.44,115.77 829.34,116.6 832.23,117.51 835.1,118.47 837.94,119.51 840.76,120.6 843.56,121.76 846.33,122.99 849.08,124.28 851.8,125.63 854.49,127.04 857.15,128.51 859.78,130.05 862.37,131.64 864.94,133.29 867.47,135.01 869.96,136.78 872.42,138.6 874.85,140.49 877.23,142.43 879.58,144.43 881.89,146.48 884.15,148.58 886.38,150.74 888.56,152.95 890.7,155.21 892.8,157.52 894.85,159.88 896.85,162.29 898.81,164.74 900.72,167.24 902.59,169.79 904.4,172.38 906.17,175.02 907.88,177.69 909.55,180.41 911.16,183.17 912.72,185.97 914.23,188.8 915.68,191.68 917.08,194.58 918.43,197.53 919.72,200.5 920.95,203.51 922.13,206.55 923.26,209.62 924.32,212.72 925.33,215.84 926.28,218.99 927.17,222.17 928,225.37 928.78,228.59 929.49,231.83 930.15,235.09 930.75,238.37 931.28,241.67 931.76,244.98 932.18,248.31 932.53,251.65 932.83,255.01 933.06,258.37 933.23,261.74 933.34,265.12 933.4,268.51 933.39,271.9 933.31,275.3 933.18,278.7 932.99,282.1" fill="#5b9eaa"/>
<polyline points="626.69,304.57 601.24,291.74 601.07,288.23 600.97,284.71 600.93,281.19 600.96,277.67 601.05,274.15 601.21,270.63 601.43,267.12 601.73,263.61 602.08,260.11 602.5,256.62 602.99,253.14 603.55,249.67 604.16,246.22 604.85,242.78 605.59,239.36 606.4,235.96 607.28,232.57 608.21,229.21 609.21,225.87 610.28,222.56 611.4,219.27 612.59,216.01 613.83,212.78 615.14,209.58 616.5,206.42 617.93,203.28 619.41,200.18 620.95,197.12 622.55,194.1 624.2,191.11 625.91,188.17 627.67,185.26 629.48,182.39 631.35,179.56 633.27,176.77 635.25,174.03 637.27,171.33 639.34,168.67 641.46,166.06 643.62,163.5 645.84,160.99 648.09,158.52 650.39,156.11 652.74,153.75 655.13,151.45 657.55,149.2 660.02,147 662.53,144.86 665.07,142.78 667.65,140.76 670.26,138.79 672.91,136.89 675.59,135.05 678.3,133.27 681.04,131.55 683.81,129.9 686.61,128.31 689.44,126.78 692.28,125.33 695.16,123.94 698.05,122.61 700.97,121.36 703.9,120.17 706.85,119.05 709.82,118 712.81,117.03 715.8,116.12 718.82,115.28 721.84,114.52 724.87,113.82 727.91,113.2 730.96,112.65 734.01,112.17 737.06,111.77 740.12,111.44 743.18,111.18 746.24,111 749.3,110.88 752.36,110.85 790.45,110.92 793.5,110.96 796.54,111.06 799.58,111.23 802.61,111.46 805.63,111.76 808.65,112.14 811.65,112.57 814.63,113.08 817.61,113.65 820.57,114.29 823.51,114.99 826.44,115.77 829.34,116.6 832.23,117.51 835.1,118.47 837.94,119.51 840.76,120.6 843.56,121.76 846.33,122.99 849.08,124.28 851.8,125.63 854.49,127.04 857.15,128.51 859.78,130.05 862.37,131.64 864.94,133.29 867.47,135.01 869.96,136.78 872.42,138.6 874.85,140.49 877.23,142.43 879.58,144.43 881.89,146.48 884.15,148.58 886.38,150.74 888.56,152.95 890.7,155.21 892.8,157.52 894.85,159.88 896.85,162.29 898.81,164.74 900.72,167.24 902.59,169.79 904.4,172.38 906.17,175.02 907.88,177.69 909.55,180.41 911.16,183.17 912.72,185.97 914.23,188.8 915.68,191.68 917.08,194.58 918.43,197.53 919.72,200.5 920.95,203.51 922.13,206.55 923.26,209.62 924.32,212.72 925.33,215.84 926.28,218.99 927.17,222.17 928,225.37 928.78,228.59 929.49,231.83 930.15,235.09 930.75,238.37 931.28,241.67 931.76,244.98 932.18,248.31 932.53,251.65 932.83,255.01 933.06,258.37 933.23,261.74 933.34,265.12 933.4,268.51 933.39,271.9 933.31,275.3 933.18,278.7 932.99,282.1" fill="none" stroke="#2e4a68" stroke-width="1.5" stroke-linejoin="round"/>
<polyline points="626.69,304.57 626.5,300.92 626.39,297.25 626.35,293.58 626.38,289.91 626.48,286.22 626.65,282.54 626.9,278.86 627.21,275.18 627.6,271.5 628.06,267.82 628.59,264.15 629.18,260.49 629.85,256.84 630.59,253.21 631.4,249.58 632.28,245.97 633.23,242.37 634.24,238.8 635.33,235.24 636.48,231.71 637.7,228.2 638.98,224.71 640.33,221.25 641.75,217.82 643.23,214.42 644.77,211.04 646.38,207.71 648.04,204.4 649.77,201.13 651.57,197.9 653.42,194.71 655.33,191.56 657.29,188.45 659.32,185.39 661.4,182.37 663.54,179.39 665.73,176.47 667.97,173.59 670.27,170.76 672.62,167.98 675.01,165.26 677.46,162.59 679.95,159.98 682.49,157.42 685.08,154.92 687.71,152.48 690.38,150.1 693.1,147.79 695.86,145.53 698.65,143.34 701.48,141.21 704.35,139.15 707.26,137.15 710.2,135.22 713.17,133.36 716.17,131.57 719.2,129.85 722.26,128.2 725.35,126.62 728.46,125.11 731.6,123.68 734.76,122.32 737.94,121.03 741.13,119.82 744.35,118.68 747.59,117.62 750.84,116.64 754.1,115.73 757.37,114.9 760.66,114.15 763.95,113.48 767.25,112.88 770.56,112.36 773.87,111.92 777.19,111.57 780.51,111.29 783.82,111.09 787.13,110.97 790.45,110.92 790.45,110.92 793.5,110.96 796.54,111.06 799.58,111.23 802.61,111.46 805.63,111.76 808.65,112.14 811.65,112.57 814.63,113.08 817.61,113.65 820.57,114.29 823.51,114.99 826.44,115.77 829.34,116.6 832.23,117.51 835.1,118.47 837.94,119.51 840.76,120.6 843.56,121.76 846.33,122.99 849.08,124.28 851.8,125.63 854.49,127.04 857.15,128.51 859.78,130.05 862.37,131.64 864.94,133.29 867.47,135.01 869.96,136.78 872.42,138.6 874.85,140.49 877.23,142.43 879.58,144.43 881.89,146.48 884.15,148.58 886.38,150.74 888.56,152.95 890.7,155.21 892.8,157.52 894.85,159.88 896.85,162.29 898.81,164.74 900.72,167.24 902.59,169.79 904.4,172.38 906.17,175.02 907.88,177.69 909.55,180.41 911.16,183.17 912.72,185.97 914.23,188.8 915.68,191.68 917.08,194.58 918.43,197.53 919.72,200.5 920.95,203.51 922.13,206.55 923.26,209.62 924.32,212.72 925.33,215.84 926.28,218.99 927.17,222.17 928,225.37 928.78,228.59 929.49,231.83 930.15,235.09 930.75,238.37 931.28,241.67 931.76,244.98 932.18,248.31 932.53,251.65 932.83,255.01 933.06,258.37 933.23,261.74 933.34,265.12 933.4,268.51 933.39,271.9 933.31,275.3 933.18,278.7 932.99,282.1" fill="none" stroke="#2e4a68" stroke-width="1.2"/>
<path d="M648.5,302.9 Q671,301.6 690.3,299.3 M877,285.4 Q896,284.6 912.9,283" fill="none" stroke="#2e4a68" stroke-width="1.1"/>
<path d="M752.36,110.85L790.45,110.62" stroke="#2e4a68" stroke-width="2"/>
<g id="viewcube">
  <polygon points="4,193 56,181 56,188.5 7,200.5" fill="#c4c4c4" filter="url(#vcb)"/>
  <filter id="vcb" x="-20%" y="-50%" width="140%" height="200%"><feGaussianBlur stdDeviation="0.8"/></filter>
  <polygon points="0,125.2 29.6,122 58.5,133.5 1.8,139.6" fill="#f3f3f3" stroke="#c4c4c4" stroke-width="1.1"/>
  <text transform="matrix(-1,0.066,0.15,-0.42,45,127.6)" font-family="Liberation Sans" font-size="9" fill="#b5b5b5" textLength="45" lengthAdjust="spacingAndGlyphs">SUPERIOR</text>
  <linearGradient id="vcf" x1="0" y1="0" x2="0.3" y2="1"><stop offset="0" stop-color="#f8f8f8"/><stop offset="1" stop-color="#e3e3e3"/></linearGradient>
  <polygon points="1.8,139.6 58.5,133.5 54.9,185.4 4.2,196.9" fill="url(#vcf)" stroke="#c4c4c4" stroke-width="1.1"/>
  <polygon points="-1,139.8 1.8,139.6 4.2,196.9 -1,197" fill="#e2e2e2" stroke="#c4c4c4" stroke-width="1"/>
  <text transform="matrix(1,-0.205,0.03,0.93,7.1,176.3)" font-family="Liberation Sans" font-weight="bold" font-size="15.4" fill="#9a9ea5" stroke="#9a9ea5" stroke-width="0.35" textLength="46" lengthAdjust="spacingAndGlyphs">FRONTAL</text>
  <circle cx="-6.3" cy="237.8" r="13.6" fill="none" stroke="#a9adb3" stroke-width="1.1"/>
  <circle cx="-6.3" cy="279.9" r="13.6" fill="none" stroke="#a9adb3" stroke-width="1.1"/>
  <circle cx="-6.3" cy="322" r="13.6" fill="none" stroke="#a9adb3" stroke-width="1.1"/>
  <circle cx="-6.3" cy="364.1" r="13.6" fill="none" stroke="#a9adb3" stroke-width="1.1"/>
  <circle cx="-6.3" cy="406.2" r="13.6" fill="none" stroke="#a9adb3" stroke-width="1.1"/>
</g>

</svg>
<div id="topbar">
  <div style="position:absolute;left:0;top:0;width:1.5px;height:12px;background:#f58b2a"></div>
  <div style="position:absolute;left:0;top:14px;width:1.5px;height:14px;background:#cdd02a"></div>
  <div style="position:absolute;left:0;top:29px;width:1.5px;height:14px;background:#5cb3dd"></div>
  <svg class="ico" style="left:14px;top:8px" width="26" height="23" viewBox="0 0 26 23">
    <rect x="2.1" y="2.3" width="20.7" height="19.3" rx="1.4" fill="#fff" stroke="#333" stroke-width="1.9"/>
    <rect x="1.2" y="1.3" width="22.5" height="2.7" rx="1" fill="#111"/>
    <rect x="5.9" y="7" width="2.1" height="1.9" rx="0.8" fill="#111"/>
    <rect x="10.1" y="7" width="8.8" height="1.9" rx="0.5" fill="#111"/>
    <rect x="5.9" y="11.2" width="2.1" height="2.5" rx="0.8" fill="#111"/>
    <rect x="10.1" y="11.2" width="8.8" height="2.5" rx="0.4" fill="#111"/>
    <rect x="5.9" y="16.1" width="2.1" height="1.9" rx="0.8" fill="#111"/>
    <rect x="10.1" y="16.1" width="8.8" height="1.9" rx="0.5" fill="#111"/>
  </svg>
  <div id="title">columnas terminadas</div>
</div>
<div id="toolbar">
  <div class="bt"></div><div class="bt2"></div><div class="bb"></div>
  <div class="sep" style="left:148px"></div>
  <div class="sep" style="left:245px"></div>
  <div class="sep" style="left:1278px"></div>
  <div class="sep" style="left:1351px"></div>
  <!-- clipboard -->
  <svg class="ico" style="left:14px;top:9px" width="26" height="30" viewBox="14 54 26 30">
    <rect x="16.9" y="59.6" width="15.3" height="20.7" fill="none" stroke="#1f2a2c" stroke-width="1.35"/>
    <path d="M19.9,59.4 L29.2,59.4 L28,62.6 L21.1,62.6 Z" fill="#1f2a2c"/>
    <rect x="22" y="56.9" width="5.1" height="3.2" rx="1" fill="#1f2a2c"/>
    <circle cx="24.5" cy="59.3" r="1.05" fill="#f0f1f3"/>
    <rect x="26.5" y="65.9" width="10.5" height="10.8" rx="0.6" fill="#f0f1f3" stroke="#5b6264" stroke-width="1.3"/>
  </svg>
  <!-- duplicate (disabled) -->
  <svg class="ico" style="left:60px;top:9px" width="32" height="36" viewBox="60 54 32 36">
    <path d="M71,69.2 L63.3,69.8 L65.8,82.7 L79.2,80" fill="none" stroke="#c8d3dc" stroke-width="1.2" stroke-linejoin="round"/>
    <path d="M71,62.9 L66.5,63.3 L67.9,78.5 L83.1,76.2" fill="none" stroke="#c8d3dc" stroke-width="1.6" stroke-linejoin="round"/>
    <rect x="72.4" y="58.3" width="15.2" height="15.1" fill="#f0f1f3" stroke="#c8d3dc" stroke-width="2.4"/>
  </svg>
  <!-- trash -->
  <svg class="ico" style="left:110px;top:8px" width="28" height="36" viewBox="110 53 28 36">
    <path d="M113.6,59.4 L134.6,59.4" stroke="#c8d3dc" stroke-width="2.1" stroke-linecap="round"/>
    <path d="M119.8,58.8 L119.8,57.5 A4,3.2 0 0 1 127.8,57.5 L127.8,58.8" fill="none" stroke="#c8d3dc" stroke-width="1.6"/>
    <path d="M115.3,61.8 L115.3,78 Q115.3,81.3 118.6,81.3 L129.6,81.3 Q132.9,81.3 132.9,78 L132.9,61.8" fill="none" stroke="#c8d3dc" stroke-width="2.3"/>
    <path d="M119.6,62 V74.8 M124.1,62 V74.8 M128.6,62 V74.8" stroke="#c8d3dc" stroke-width="1.1"/>
  </svg>
  <!-- undo -->
  <svg class="ico" style="left:160px;top:14px" width="28" height="18" viewBox="160 59 28 18">
    <path d="M162.8,68.2 L171.8,61.6 L171.8,74.9 Z" fill="#1f2d2d"/>
    <path d="M171,66.6 L175.5,66.6 Q183.6,66.9 183.9,74.8 Q180.5,70.2 175.5,70 L171,70 Z" fill="#1f2d2d"/>
  </svg>
  <!-- redo -->
  <svg class="ico" style="left:206px;top:14px" width="28" height="18" viewBox="206 59 28 18">
    <path d="M231.2,68.2 L222.2,61.6 L222.2,74.9 Z" fill="#c8d3dc"/>
    <path d="M223,66.6 L218.5,66.6 Q210.4,66.9 210.1,74.8 Q213.5,70.2 218.5,70 L223,70 Z" fill="#c8d3dc"/>
  </svg>
  <!-- bulb -->
  <svg class="ico" style="left:1286px;top:10px" width="30" height="32" viewBox="1286 54 30 32">
    <path d="M1295.4,76.2 L1295.4,73.6 Q1295.2,71.8 1293.2,69.4 Q1290.8,66.6 1290.9,62.8 Q1291.2,55.6 1300,55.3 Q1308.8,55.6 1309.1,62.8 Q1309.2,66.6 1306.8,69.4 Q1304.8,71.8 1304.6,73.6 L1304.6,76.2 Z" fill="none" stroke="#c8d3dc" stroke-width="1.9" stroke-linejoin="round"/>
    <path d="M1295.6,78.8 H1304.4" stroke="#c8d3dc" stroke-width="1.6"/>
    <path d="M1297,81.6 H1303" stroke="#c8d3dc" stroke-width="1.4" stroke-linecap="round"/>
    <path d="M1296.2,60.4 L1298.2,58.6" stroke="#c8d3dc" stroke-width="0.9" stroke-linecap="round"/>
  </svg>
  <div style="position:absolute;left:1321.5px;top:12.5px;width:1px;height:23px;background:#d6dde3"></div>
  <svg class="ico" style="left:1330px;top:19px" width="12" height="8" viewBox="1330 64 12 8">
    <path d="M1331.6,65.4 L1340.8,65.4 L1336.2,71.1 Z" fill="#1f2d2d"/>
  </svg>
  <!-- shape icon -->
  <svg class="ico" style="left:1362px;top:11px" width="30" height="30" viewBox="1362 56 30 30">
    <path d="M1365.4,58.9 L1383,58.9 L1383,63.8 A9.6,9.6 0 1 1 1369.9,76.5 L1365.4,76.5 Z" fill="none" stroke="#c8d3dc" stroke-width="1.9" stroke-linejoin="round"/>
  </svg>
  <svg class="ico" style="left:1410px;top:11px" width="8" height="30" viewBox="1410 56 8 30">
    <path d="M1419,59.5 L1414,59.5 L1414,77.6 L1419,77.6" fill="none" stroke="#c8d3dc" stroke-width="1.9"/>
  </svg>
</div>
</body></html>
